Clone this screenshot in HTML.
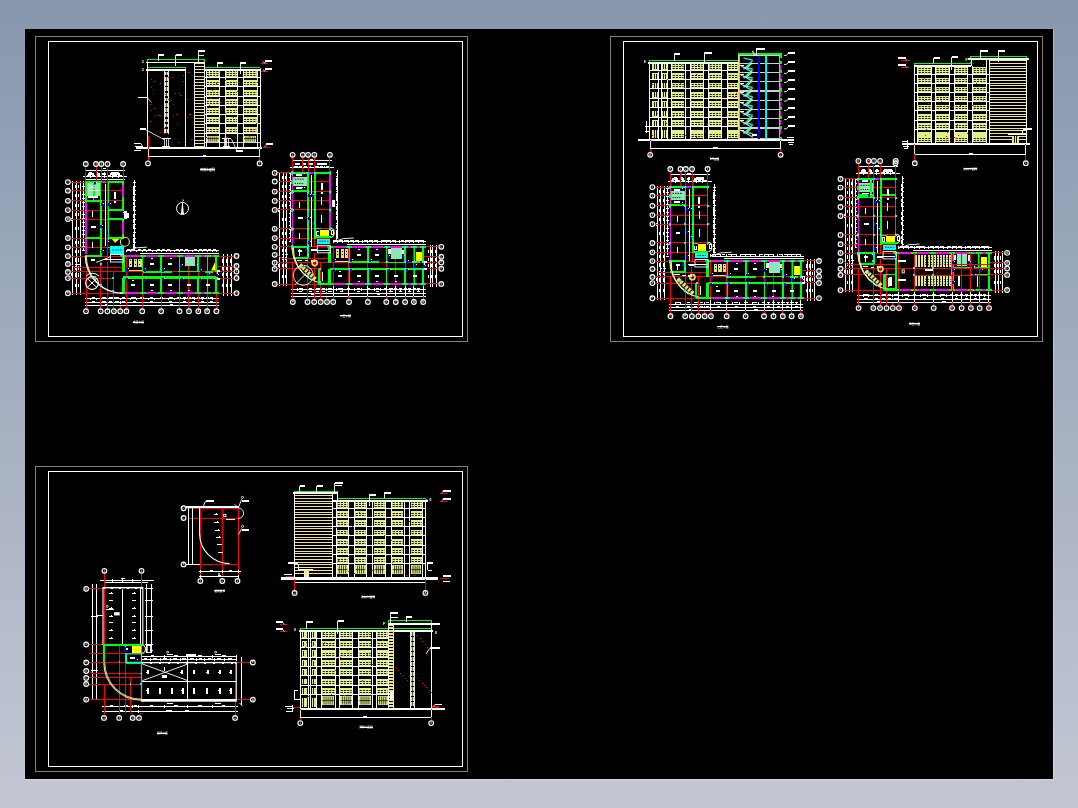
<!DOCTYPE html>
<html><head><meta charset="utf-8"><title>CAD</title>
<style>
html,body{margin:0;padding:0;}
body{width:1078px;height:808px;overflow:hidden;background:linear-gradient(to bottom,#8797ae 0%,#c3c7d3 100%);font-family:"Liberation Sans","Noto Sans CJK SC",sans-serif;}
svg{position:absolute;left:0;top:0;display:block}
svg{will-change:transform}
</style></head><body>
<svg width="1078" height="808" viewBox="0 0 1078 808">
<rect x="25" y="29" width="1028" height="750" fill="#000" shape-rendering="crispEdges"/>
<path d="M1053 29h1v751h-1029v-1h1028z" fill="#fff" opacity=".3" shape-rendering="crispEdges"/>
<g fill="none" stroke-width="1" shape-rendering="crispEdges">
<rect x="35.5" y="36.5" width="432" height="305" stroke="#808080"/>
<rect x="48.5" y="41.5" width="414" height="295" stroke="#fff"/>
<rect x="610.5" y="36.5" width="432" height="305" stroke="#808080"/>
<rect x="623.5" y="41.5" width="414" height="295" stroke="#fff"/>
<rect x="35.5" y="466.5" width="432" height="305" stroke="#808080"/>
<rect x="48.5" y="471.5" width="414" height="295" stroke="#fff"/>
</g>
<g id="elev1">
<path fill="#00ff00" d="M147 59h58v1h-58zM147 60h1v2h-1zM204 60h1v2h-1z"/>
<path fill="#fff" d="M146 62h59v1h-59z"/>
<path fill="#00ff00" d="M148 67h38v1h-38zM185 68h1v1h-1z"/>
<path fill="#fff" d="M146 69h40v2h-40z"/>
<path fill="#00ff00" d="M204 67h56v1h-56zM260 68h1v1h-1z"/>
<path fill="#fff" d="M204 69h57v2h-57zM147 62h1v86h-1zM260 69h1v79h-1z"/>
<path fill="#fff" opacity="0.9" d="M185 69h1v79h-1zM164 71h1v63h-1zM168 71h1v63h-1z"/>
<path fill="#e0f086" d="M165 72h3v3h-3z"/>
<path fill="#000" opacity="0.6" d="M166 72h1v3h-1z"/>
<path fill="#e0f086" d="M165 77h3v4h-3z"/>
<path fill="#000" opacity="0.6" d="M166 77h1v4h-1z"/>
<path fill="#e0f086" d="M165 82h3v4h-3z"/>
<path fill="#000" opacity="0.6" d="M166 82h1v4h-1z"/>
<path fill="#e0f086" d="M165 87h3v4h-3z"/>
<path fill="#000" opacity="0.6" d="M166 87h1v4h-1z"/>
<path fill="#e0f086" d="M165 93h3v3h-3z"/>
<path fill="#000" opacity="0.6" d="M166 93h1v3h-1z"/>
<path fill="#e0f086" d="M165 98h3v3h-3z"/>
<path fill="#000" opacity="0.6" d="M166 98h1v3h-1z"/>
<path fill="#e0f086" d="M165 103h3v4h-3z"/>
<path fill="#000" opacity="0.6" d="M166 103h1v4h-1z"/>
<path fill="#e0f086" d="M165 108h3v4h-3z"/>
<path fill="#000" opacity="0.6" d="M166 108h1v4h-1z"/>
<path fill="#e0f086" d="M165 113h3v4h-3z"/>
<path fill="#000" opacity="0.6" d="M166 113h1v4h-1z"/>
<path fill="#e0f086" d="M165 119h3v3h-3z"/>
<path fill="#000" opacity="0.6" d="M166 119h1v3h-1z"/>
<path fill="#e0f086" d="M165 124h3v3h-3z"/>
<path fill="#000" opacity="0.6" d="M166 124h1v3h-1z"/>
<path fill="#e0f086" d="M165 129h3v4h-3z"/>
<path fill="#000" opacity="0.6" d="M166 129h1v4h-1z"/>
<path fill="#f0e878" d="M195 63h9v1h-9zM195 66h9v1h-9zM195 69h9v1h-9zM195 72h9v1h-9zM195 76h9v1h-9zM195 79h9v1h-9zM195 82h9v1h-9zM195 85h9v1h-9zM195 88h9v1h-9zM195 91h9v1h-9zM195 94h9v1h-9zM195 97h9v1h-9zM195 100h9v1h-9zM195 103h9v1h-9zM195 106h9v1h-9zM195 109h9v1h-9zM195 112h9v1h-9zM195 115h9v1h-9zM195 118h9v1h-9zM195 121h9v1h-9zM195 124h9v1h-9zM195 127h9v1h-9zM195 130h9v1h-9zM195 133h9v1h-9zM195 136h9v1h-9zM195 140h9v1h-9zM195 143h9v1h-9zM195 146h9v1h-9z"/>
<path fill="#fff" opacity="0.9" d="M194 63h1v84h-1zM204 63h1v84h-1z"/>
<path fill="#e0f086" d="M206 71h13v6h-13z"/>
<line x1="206.7" y1="75.5" x2="218.7" y2="75.5" stroke="#000" stroke-width="0.9" stroke-dasharray="2.1 1.1"/>
<line x1="206.7" y1="73.5" x2="218.7" y2="73.5" stroke="#000" stroke-width="0.9" stroke-dasharray="2.1 1.1"/>
<line x1="206.7" y1="71.5" x2="218.7" y2="71.5" stroke="#000" stroke-width="0.9" stroke-dasharray="2.1 1.1"/>
<path fill="#e0f086" d="M226 71h12v6h-12z"/>
<line x1="226.7" y1="75.5" x2="237.7" y2="75.5" stroke="#000" stroke-width="0.9" stroke-dasharray="2.1 1.1"/>
<line x1="226.7" y1="73.5" x2="237.7" y2="73.5" stroke="#000" stroke-width="0.9" stroke-dasharray="2.1 1.1"/>
<line x1="226.7" y1="71.5" x2="237.7" y2="71.5" stroke="#000" stroke-width="0.9" stroke-dasharray="2.1 1.1"/>
<path fill="#e0f086" d="M243 71h14v6h-14z"/>
<line x1="243.7" y1="75.5" x2="256.7" y2="75.5" stroke="#000" stroke-width="0.9" stroke-dasharray="2.1 1.1"/>
<line x1="243.7" y1="73.5" x2="256.7" y2="73.5" stroke="#000" stroke-width="0.9" stroke-dasharray="2.1 1.1"/>
<line x1="243.7" y1="71.5" x2="256.7" y2="71.5" stroke="#000" stroke-width="0.9" stroke-dasharray="2.1 1.1"/>
<path fill="#e0f086" d="M206 80h13v6h-13z"/>
<line x1="206.7" y1="84.5" x2="218.7" y2="84.5" stroke="#000" stroke-width="0.9" stroke-dasharray="2.1 1.1"/>
<line x1="206.7" y1="82.5" x2="218.7" y2="82.5" stroke="#000" stroke-width="0.9" stroke-dasharray="2.1 1.1"/>
<path fill="#e0f086" d="M226 80h12v6h-12z"/>
<line x1="226.7" y1="84.5" x2="237.7" y2="84.5" stroke="#000" stroke-width="0.9" stroke-dasharray="2.1 1.1"/>
<line x1="226.7" y1="82.5" x2="237.7" y2="82.5" stroke="#000" stroke-width="0.9" stroke-dasharray="2.1 1.1"/>
<path fill="#e0f086" d="M243 80h14v6h-14z"/>
<line x1="243.7" y1="84.5" x2="256.7" y2="84.5" stroke="#000" stroke-width="0.9" stroke-dasharray="2.1 1.1"/>
<line x1="243.7" y1="82.5" x2="256.7" y2="82.5" stroke="#000" stroke-width="0.9" stroke-dasharray="2.1 1.1"/>
<path fill="#e0f086" d="M206 90h13v6h-13z"/>
<line x1="206.7" y1="94.5" x2="218.7" y2="94.5" stroke="#000" stroke-width="0.9" stroke-dasharray="2.1 1.1"/>
<line x1="206.7" y1="92.5" x2="218.7" y2="92.5" stroke="#000" stroke-width="0.9" stroke-dasharray="2.1 1.1"/>
<path fill="#e0f086" d="M226 90h12v6h-12z"/>
<line x1="226.7" y1="94.5" x2="237.7" y2="94.5" stroke="#000" stroke-width="0.9" stroke-dasharray="2.1 1.1"/>
<line x1="226.7" y1="92.5" x2="237.7" y2="92.5" stroke="#000" stroke-width="0.9" stroke-dasharray="2.1 1.1"/>
<path fill="#e0f086" d="M243 90h14v6h-14z"/>
<line x1="243.7" y1="94.5" x2="256.7" y2="94.5" stroke="#000" stroke-width="0.9" stroke-dasharray="2.1 1.1"/>
<line x1="243.7" y1="92.5" x2="256.7" y2="92.5" stroke="#000" stroke-width="0.9" stroke-dasharray="2.1 1.1"/>
<path fill="#e0f086" d="M206 99h13v6h-13z"/>
<line x1="206.7" y1="103.5" x2="218.7" y2="103.5" stroke="#000" stroke-width="0.9" stroke-dasharray="2.1 1.1"/>
<line x1="206.7" y1="101.5" x2="218.7" y2="101.5" stroke="#000" stroke-width="0.9" stroke-dasharray="2.1 1.1"/>
<path fill="#e0f086" d="M226 99h12v6h-12z"/>
<line x1="226.7" y1="103.5" x2="237.7" y2="103.5" stroke="#000" stroke-width="0.9" stroke-dasharray="2.1 1.1"/>
<line x1="226.7" y1="101.5" x2="237.7" y2="101.5" stroke="#000" stroke-width="0.9" stroke-dasharray="2.1 1.1"/>
<path fill="#e0f086" d="M243 99h14v6h-14z"/>
<line x1="243.7" y1="103.5" x2="256.7" y2="103.5" stroke="#000" stroke-width="0.9" stroke-dasharray="2.1 1.1"/>
<line x1="243.7" y1="101.5" x2="256.7" y2="101.5" stroke="#000" stroke-width="0.9" stroke-dasharray="2.1 1.1"/>
<path fill="#e0f086" d="M206 108h13v6h-13z"/>
<line x1="206.7" y1="112.5" x2="218.7" y2="112.5" stroke="#000" stroke-width="0.9" stroke-dasharray="2.1 1.1"/>
<line x1="206.7" y1="110.5" x2="218.7" y2="110.5" stroke="#000" stroke-width="0.9" stroke-dasharray="2.1 1.1"/>
<path fill="#e0f086" d="M226 108h12v6h-12z"/>
<line x1="226.7" y1="112.5" x2="237.7" y2="112.5" stroke="#000" stroke-width="0.9" stroke-dasharray="2.1 1.1"/>
<line x1="226.7" y1="110.5" x2="237.7" y2="110.5" stroke="#000" stroke-width="0.9" stroke-dasharray="2.1 1.1"/>
<path fill="#e0f086" d="M243 108h14v6h-14z"/>
<line x1="243.7" y1="112.5" x2="256.7" y2="112.5" stroke="#000" stroke-width="0.9" stroke-dasharray="2.1 1.1"/>
<line x1="243.7" y1="110.5" x2="256.7" y2="110.5" stroke="#000" stroke-width="0.9" stroke-dasharray="2.1 1.1"/>
<path fill="#e0f086" d="M206 117h13v6h-13z"/>
<line x1="206.7" y1="121.5" x2="218.7" y2="121.5" stroke="#000" stroke-width="0.9" stroke-dasharray="2.1 1.1"/>
<line x1="206.7" y1="119.5" x2="218.7" y2="119.5" stroke="#000" stroke-width="0.9" stroke-dasharray="2.1 1.1"/>
<path fill="#e0f086" d="M226 117h12v6h-12z"/>
<line x1="226.7" y1="121.5" x2="237.7" y2="121.5" stroke="#000" stroke-width="0.9" stroke-dasharray="2.1 1.1"/>
<line x1="226.7" y1="119.5" x2="237.7" y2="119.5" stroke="#000" stroke-width="0.9" stroke-dasharray="2.1 1.1"/>
<path fill="#e0f086" d="M243 117h14v6h-14z"/>
<line x1="243.7" y1="121.5" x2="256.7" y2="121.5" stroke="#000" stroke-width="0.9" stroke-dasharray="2.1 1.1"/>
<line x1="243.7" y1="119.5" x2="256.7" y2="119.5" stroke="#000" stroke-width="0.9" stroke-dasharray="2.1 1.1"/>
<path fill="#e0f086" d="M206 127h13v6h-13z"/>
<line x1="206.7" y1="131.5" x2="218.7" y2="131.5" stroke="#000" stroke-width="0.9" stroke-dasharray="2.1 1.1"/>
<line x1="206.7" y1="129.5" x2="218.7" y2="129.5" stroke="#000" stroke-width="0.9" stroke-dasharray="2.1 1.1"/>
<path fill="#e0f086" d="M226 127h12v6h-12z"/>
<line x1="226.7" y1="131.5" x2="237.7" y2="131.5" stroke="#000" stroke-width="0.9" stroke-dasharray="2.1 1.1"/>
<line x1="226.7" y1="129.5" x2="237.7" y2="129.5" stroke="#000" stroke-width="0.9" stroke-dasharray="2.1 1.1"/>
<path fill="#e0f086" d="M243 127h14v6h-14z"/>
<line x1="243.7" y1="131.5" x2="256.7" y2="131.5" stroke="#000" stroke-width="0.9" stroke-dasharray="2.1 1.1"/>
<line x1="243.7" y1="129.5" x2="256.7" y2="129.5" stroke="#000" stroke-width="0.9" stroke-dasharray="2.1 1.1"/>
<path fill="#e0f086" d="M207 136h12v6h-12z"/>
<line x1="208.82" y1="136.5" x2="208.82" y2="141.5" stroke="#000" stroke-width="0.7"/>
<line x1="210.83" y1="136.5" x2="210.83" y2="141.5" stroke="#000" stroke-width="0.7"/>
<line x1="212.85" y1="136.5" x2="212.85" y2="141.5" stroke="#000" stroke-width="0.7"/>
<line x1="214.87" y1="136.5" x2="214.87" y2="141.5" stroke="#000" stroke-width="0.7"/>
<line x1="216.88" y1="136.5" x2="216.88" y2="141.5" stroke="#000" stroke-width="0.7"/>
<path fill="#000" opacity="0.7" d="M207 138h12v1h-12z"/>
<path fill="#e0f086" d="M244 136h12v6h-12z"/>
<line x1="245.98" y1="136.5" x2="245.98" y2="141.5" stroke="#000" stroke-width="0.7"/>
<line x1="248.07" y1="136.5" x2="248.07" y2="141.5" stroke="#000" stroke-width="0.7"/>
<line x1="250.15" y1="136.5" x2="250.15" y2="141.5" stroke="#000" stroke-width="0.7"/>
<line x1="252.23" y1="136.5" x2="252.23" y2="141.5" stroke="#000" stroke-width="0.7"/>
<line x1="254.32" y1="136.5" x2="254.32" y2="141.5" stroke="#000" stroke-width="0.7"/>
<path fill="#000" opacity="0.7" d="M244 138h12v1h-12z"/>
<path fill="#fff" d="M204 77h56v1h-56zM204 86h56v1h-56zM204 96h56v1h-56zM204 105h56v1h-56zM204 114h56v1h-56zM204 123h56v1h-56zM204 133h56v1h-56z"/>
<path fill="#fff" opacity="0.8" d="M204 142h56v1h-56z"/>
<path fill="#fff" opacity="0.9" d="M206 70h1v78h-1zM219 70h1v78h-1zM225 70h1v78h-1zM237 70h1v78h-1zM243 70h1v78h-1zM257 70h1v78h-1z"/>
<path fill="#fff" d="M162 138h9v1h-9z"/>
<path fill="#fff" opacity="0.8" d="M164 139h1v8h-1zM168 139h1v8h-1zM166 139h1v8h-1z"/>
<path fill="#fff" d="M162 146h8v1h-8zM222 138h9v1h-9z"/>
<path fill="#fff" opacity="0.8" d="M224 139h1v8h-1zM228 139h1v8h-1zM226 139h1v8h-1z"/>
<path fill="#fff" d="M223 146h7v1h-7z"/>
<path d="M231.5 139 L236.5 150" fill="none" stroke="#fff" stroke-width="0.8"/>
<path fill="#fff" d="M236 150h7v2h-7zM138 97h9v1h-9z"/>
<path d="M147 97.3 L151.5 102.5" fill="none" stroke="#fff" stroke-width="0.8"/>
<path fill="#fff" d="M140 128h6v2h-6z"/>
<path d="M146 130 L164 139.5" fill="none" stroke="#fff" stroke-width="0.8"/>
<path fill="#fff" d="M136 147h126v2h-126zM134 143h7v1h-7zM135 146h8v1h-8zM134 150h7v1h-7z"/>
<path d="M141 143.7 L143.5 148" fill="none" stroke="#fff" stroke-width="0.8"/>
<path fill="#ff0000" d="M148 148h1v13h-1zM259 148h1v13h-1z"/>
<path fill="#fff" d="M148 156h112v1h-112z"/>
<path fill="#fff" opacity="0.8" d="M148 149h1v7h-1zM259 149h1v7h-1z"/>
<path fill="#fff" d="M203 155h3v1h-3z"/>
<circle cx="148" cy="163.4" r="2.35" fill="none" stroke="#fff" stroke-width="1.15"/>
<text x="148" y="164.35" font-size="2.7" fill="#fff" text-anchor="middle" font-weight="normal" font-family='"Liberation Sans","Noto Sans CJK SC",sans-serif'>1</text>
<circle cx="259.6" cy="163.4" r="2.35" fill="none" stroke="#fff" stroke-width="1.15"/>
<text x="259.6" y="164.35" font-size="2.7" fill="#fff" text-anchor="middle" font-weight="normal" font-family='"Liberation Sans","Noto Sans CJK SC",sans-serif'>9</text>
<text x="207.5" y="170.8" font-size="2.9" fill="#fff" text-anchor="middle" font-weight="bold" font-family='"Liberation Sans","Noto Sans CJK SC",sans-serif'>西侧立面图</text>
<path fill="#fff" d="M200 169h13v1h-13z"/>
<polygon points="213.4,169 215.4,169 214.4,170.6" fill="#fff"/>
<path fill="#fff" opacity="0.9" d="M158 54h1v7h-1z"/>
<path fill="#fff" d="M158 54h6v2h-6z"/>
<path fill="#fff" opacity="0.9" d="M175 55h1v11h-1z"/>
<path fill="#fff" d="M176 54h6v2h-6z"/>
<path fill="#fff" opacity="0.9" d="M198 50h1v13h-1z"/>
<path fill="#fff" d="M198 50h7v2h-7z"/>
<path fill="#fff" opacity="0.9" d="M198 55h6v1h-6zM217 62h1v6h-1z"/>
<path fill="#fff" d="M218 62h5v2h-5z"/>
<path fill="#fff" opacity="0.9" d="M240 62h1v12h-1z"/>
<path fill="#fff" d="M240 62h6v2h-6z"/>
<text x="142.8" y="62.6" font-size="3.2" fill="#fff" text-anchor="middle" font-weight="bold" font-family='"Liberation Sans","Noto Sans CJK SC",sans-serif'>5</text>
<text x="142.8" y="71.3" font-size="3.2" fill="#fff" text-anchor="middle" font-weight="bold" font-family='"Liberation Sans","Noto Sans CJK SC",sans-serif'>5</text>
<path fill="#ff0000" d="M261 63h7v1h-7z"/>
<path d="M263 61.4 L264.5 63.3 L266 61.4" fill="none" stroke="#fff" stroke-width="0.8"/>
<path fill="#fff" d="M265 60h7v2h-7z"/>
<path fill="#ff0000" d="M261 71h7v1h-7z"/>
<path d="M263 69.4 L264.5 71.3 L266 69.4" fill="none" stroke="#fff" stroke-width="0.8"/>
<path fill="#fff" d="M265 68h7v2h-7z"/>
<path fill="#ff0000" d="M263 147h7v1h-7z"/>
<path d="M264.5 147 L267 144.5" fill="none" stroke="#fff" stroke-width="0.8"/>
<path fill="#fff" d="M266 143h7v2h-7z"/>
<path fill="#f00" d="M160 83h1v1h-1zM172 77h1v1h-1zM168 99h1v1h-1zM151 110h1v1h-1zM150 104h1v1h-1zM151 79h1v1h-1zM164 133h1v1h-1zM153 89h1v1h-1zM171 142h1v1h-1zM169 101h1v1h-1zM183 75h1v1h-1zM179 93h1v1h-1zM154 81h1v1h-1zM160 132h1v1h-1zM155 115h1v1h-1zM171 100h1v1h-1zM168 77h1v1h-1zM151 87h1v1h-1zM173 104h1v1h-1zM160 115h1v1h-1zM165 94h1v1h-1zM177 124h1v1h-1zM158 115h1v1h-1zM167 137h1v1h-1zM175 93h1v1h-1zM183 81h1v1h-1zM164 128h1v1h-1zM154 108h1v1h-1zM150 121h1v1h-1zM176 114h1v1h-1zM180 95h1v1h-1zM173 116h1v1h-1zM169 106h1v1h-1zM178 142h1v1h-1zM190 114h1v1h-1zM187 117h1v1h-1zM191 139h1v1h-1zM193 85h1v1h-1zM189 114h1v1h-1zM187 99h1v1h-1zM188 72h1v1h-1zM208 129h1v1h-1zM212 90h1v1h-1zM226 136h1v1h-1zM209 105h1v1h-1zM235 137h1v1h-1zM249 136h1v1h-1zM220 102h1v1h-1zM224 137h1v1h-1zM257 82h1v1h-1zM215 88h1v1h-1zM218 107h1v1h-1zM237 91h1v1h-1zM205 102h1v1h-1zM225 113h1v1h-1zM256 123h1v1h-1zM233 117h1v1h-1zM242 75h1v1h-1zM254 129h1v1h-1zM252 131h1v1h-1zM226 101h1v1h-1zM211 119h1v1h-1zM208 76h1v1h-1zM216 83h1v1h-1zM223 75h1v1h-1zM205 82h1v1h-1zM210 98h1v1h-1zM206 137h1v1h-1zM238 82h1v1h-1zM219 97h1v1h-1zM225 80h1v1h-1z"/>
<path fill="#ff0000" d="M148 136h1v12h-1z"/>
</g>
<path fill="#fff" d="M85 170h40v1h-40zM85 168h1v3h-1zM123 168h1v3h-1zM103 168h3v1h-3zM88 173h6v2h-6zM89 172h3v1h-3zM96 173h4v2h-4zM96 172h2v1h-2zM102 173h4v2h-4zM104 172h1v1h-1zM110 173h10v2h-10zM111 172h8v1h-8zM83 176h44v1h-44zM85 175h1v3h-1zM90 175h1v3h-1zM96 175h1v3h-1zM101 175h1v3h-1zM104 175h1v3h-1zM107 175h1v3h-1zM112 175h1v3h-1zM118 175h1v3h-1zM123 175h1v3h-1zM87 175h3v1h-3zM92 175h3v1h-3zM97 175h3v1h-3zM108 175h3v1h-3zM113 175h4v1h-4zM119 175h3v1h-3zM85 179h40v1h-40zM72 181h1v114h-1zM72 182h2v1h-2zM72 256h2v1h-2zM72 293h2v1h-2zM71 218h1v3h-1zM71 273h1v3h-1zM76 181h1v114h-1zM75 182h3v1h-3zM75 190h3v1h-3zM75 200h3v1h-3zM75 210h3v1h-3zM75 219h3v1h-3zM75 238h3v1h-3zM75 247h3v1h-3zM75 256h3v1h-3zM75 264h3v1h-3zM75 271h3v1h-3zM75 278h3v1h-3zM75 293h3v1h-3zM75 185h1v3h-1zM75 194h1v3h-1zM75 204h1v3h-1zM75 213h1v3h-1zM75 227h1v3h-1zM75 241h1v3h-1zM75 250h1v3h-1zM75 258h1v4h-1zM75 266h1v4h-1zM75 273h1v4h-1zM75 284h1v3h-1zM80 181h1v114h-1zM78 182h3v1h-3zM78 190h3v1h-3zM78 200h3v1h-3zM78 210h3v1h-3zM78 219h3v1h-3zM78 238h3v1h-3zM78 247h3v1h-3zM78 256h3v1h-3zM78 264h3v1h-3zM78 271h3v1h-3zM78 278h3v1h-3zM78 293h3v1h-3zM78 185h1v3h-1zM78 194h1v3h-1zM78 204h1v3h-1zM78 213h1v3h-1zM78 227h1v3h-1zM78 241h1v3h-1zM78 250h1v3h-1zM78 258h1v4h-1zM78 266h1v4h-1zM78 273h1v4h-1zM78 284h1v3h-1zM83 181h1v69h-1zM82 182h3v1h-3zM82 186h3v1h-3zM82 190h3v1h-3zM82 194h3v1h-3zM82 198h3v1h-3zM82 202h3v1h-3zM82 206h3v1h-3zM82 210h3v1h-3zM82 214h3v1h-3zM82 218h3v1h-3zM82 222h3v1h-3zM82 226h3v1h-3zM82 230h3v1h-3zM82 234h3v1h-3zM82 238h3v1h-3zM82 242h3v1h-3zM82 246h3v1h-3zM82 250h3v1h-3zM134 180h1v68h-1zM133 182h3v1h-3zM133 186h3v1h-3zM133 190h3v1h-3zM133 194h3v1h-3zM133 200h3v1h-3zM133 206h3v1h-3zM133 210h3v1h-3zM133 214h3v1h-3zM133 219h3v1h-3zM133 224h3v1h-3zM133 228h3v1h-3zM133 232h3v1h-3zM133 238h3v1h-3zM133 242h3v1h-3zM133 247h3v1h-3zM133 187h1v3h-1zM133 191h1v3h-1zM133 196h1v4h-1zM133 202h1v3h-1zM133 206h1v4h-1zM133 215h1v3h-1zM133 220h1v3h-1zM133 225h1v3h-1zM133 234h1v3h-1zM133 239h1v3h-1zM133 244h1v3h-1z"/>
<path d="M134.7 248 L131.2 251 L127 250" fill="none" stroke="#fff" stroke-width="0.9"/>
<path fill="#fff" d="M127 250h92v1h-92zM126 250h1v2h-1zM130 250h1v2h-1zM136 250h1v2h-1zM142 250h1v2h-1zM146 250h1v2h-1zM152 250h1v2h-1zM156 250h1v2h-1zM161 250h1v2h-1zM166 250h1v2h-1zM170 250h1v2h-1zM174 250h1v2h-1zM179 250h1v2h-1zM184 250h1v2h-1zM188 250h1v2h-1zM192 250h1v2h-1zM198 250h1v2h-1zM202 250h1v2h-1zM207 250h1v2h-1zM212 250h1v2h-1zM216 250h1v2h-1zM127 249h3v1h-3zM132 249h3v1h-3zM138 249h3v1h-3zM143 249h3v1h-3zM148 249h3v1h-3zM157 249h3v1h-3zM162 249h3v1h-3zM167 249h3v1h-3zM176 249h3v1h-3zM180 249h3v1h-3zM185 249h3v1h-3zM194 249h3v1h-3zM199 249h3v1h-3zM203 249h4v1h-4zM208 249h3v1h-3zM213 249h3v1h-3zM140 253h79v1h-79z"/>
<path d="M127 251 Q136 246.5 147 247.2" fill="none" stroke="#fff" stroke-width="0.9"/>
<path fill="#fff" d="M223 254h1v42h-1zM222 256h3v1h-3zM222 266h3v1h-3zM222 271h3v1h-3zM222 278h3v1h-3zM222 293h3v1h-3zM222 259h1v4h-1zM222 267h1v3h-1zM222 273h1v3h-1zM222 284h1v3h-1zM227 254h1v42h-1zM226 256h2v1h-2zM226 266h2v1h-2zM226 271h2v1h-2zM226 278h2v1h-2zM226 293h2v1h-2zM226 259h1v4h-1zM226 267h1v3h-1zM226 273h1v3h-1zM226 284h1v3h-1zM231 254h1v42h-1zM230 256h3v1h-3zM230 266h3v1h-3zM230 271h3v1h-3zM230 278h3v1h-3zM230 293h3v1h-3zM230 259h1v4h-1zM230 267h1v3h-1zM230 273h1v3h-1zM230 284h1v3h-1zM85 298h134v1h-134zM86 298h1v2h-1zM100 298h1v2h-1zM107 298h1v2h-1zM113 298h1v2h-1zM120 298h1v2h-1zM126 298h1v2h-1zM142 298h1v2h-1zM161 298h1v2h-1zM179 298h1v2h-1zM188 298h1v2h-1zM198 298h1v2h-1zM207 298h1v2h-1zM216 298h1v2h-1zM90 298h1v2h-1zM96 298h1v2h-1zM130 298h1v2h-1zM136 298h1v2h-1zM148 298h1v2h-1zM154 298h1v2h-1zM168 298h1v2h-1zM174 298h1v2h-1zM184 298h1v2h-1zM194 298h1v2h-1zM202 298h1v2h-1zM212 298h1v2h-1zM92 297h3v1h-3zM102 297h4v1h-4zM109 297h3v1h-3zM115 297h4v1h-4zM122 297h3v1h-3zM133 297h3v1h-3zM150 297h3v1h-3zM169 297h3v1h-3zM183 297h3v1h-3zM192 297h3v1h-3zM201 297h3v1h-3zM210 297h3v1h-3zM92 297h3v1h-3zM111 297h4v1h-4zM131 297h4v1h-4zM140 297h4v1h-4zM150 297h3v1h-3zM160 297h3v1h-3zM169 297h4v1h-4zM177 297h4v1h-4zM187 297h4v1h-4zM197 297h3v1h-3zM206 297h3v1h-3zM85 302h134v1h-134zM86 301h1v3h-1zM100 301h1v3h-1zM107 301h1v3h-1zM113 301h1v3h-1zM120 301h1v3h-1zM126 301h1v3h-1zM142 301h1v3h-1zM161 301h1v3h-1zM179 301h1v3h-1zM188 301h1v3h-1zM198 301h1v3h-1zM207 301h1v3h-1zM216 301h1v3h-1zM92 301h3v1h-3zM102 301h4v1h-4zM109 301h3v1h-3zM115 301h4v1h-4zM122 301h3v1h-3zM133 301h3v1h-3zM150 301h3v1h-3zM169 301h3v1h-3zM183 301h3v1h-3zM192 301h3v1h-3zM201 301h3v1h-3zM210 301h3v1h-3zM85 305h134v1h-134zM86 304h1v3h-1zM126 304h1v3h-1zM216 304h1v3h-1zM105 304h3v1h-3zM170 304h3v1h-3z"/>
<path fill="#ff0000" d="M85 166h1v17h-1zM96 166h1v17h-1zM101 166h1v17h-1zM107 166h1v90h-1zM123 166h1v17h-1zM71 182h53v1h-53zM71 190h53v1h-53zM71 200h53v1h-53zM71 210h53v1h-53zM71 219h53v1h-53zM71 238h53v1h-53zM71 247h53v1h-53zM71 256h53v1h-53z"/>
<line x1="70.6" y1="264" x2="74.5" y2="267.2" stroke="#ff0000" stroke-width="1"/>
<path fill="#ff0000" d="M74 267h48v1h-48zM71 271h146v1h-146zM71 278h41v1h-41zM71 293h53v1h-53zM86 272h1v37h-1zM100 262h1v47h-1zM107 262h1v47h-1zM113 272h1v37h-1zM120 306h1v3h-1zM126 256h1v53h-1zM142 256h1v53h-1zM161 256h1v53h-1zM179 256h1v53h-1zM188 256h1v53h-1zM198 256h1v53h-1zM207 256h1v53h-1zM216 256h1v53h-1zM217 256h17v1h-17zM217 266h17v1h-17zM217 271h17v1h-17zM217 278h17v1h-17zM217 293h17v1h-17z"/>
<circle cx="85.8" cy="164" r="2.35" fill="none" stroke="#fff" stroke-width="1.15"/>
<text x="85.8" y="164.95" font-size="2.7" fill="#fff" text-anchor="middle" font-weight="normal" font-family='"Liberation Sans","Noto Sans CJK SC",sans-serif'>2</text>
<circle cx="96" cy="164" r="2.35" fill="none" stroke="#fff" stroke-width="1.15"/>
<text x="96" y="164.95" font-size="2.7" fill="#fff" text-anchor="middle" font-weight="normal" font-family='"Liberation Sans","Noto Sans CJK SC",sans-serif'>3</text>
<circle cx="101.3" cy="164" r="2.35" fill="none" stroke="#fff" stroke-width="1.15"/>
<text x="101.3" y="164.95" font-size="2.7" fill="#fff" text-anchor="middle" font-weight="normal" font-family='"Liberation Sans","Noto Sans CJK SC",sans-serif'>4</text>
<circle cx="107.5" cy="164" r="2.35" fill="none" stroke="#fff" stroke-width="1.15"/>
<text x="107.5" y="164.95" font-size="2.7" fill="#fff" text-anchor="middle" font-weight="normal" font-family='"Liberation Sans","Noto Sans CJK SC",sans-serif'>5</text>
<circle cx="123.1" cy="164" r="2.35" fill="none" stroke="#fff" stroke-width="1.15"/>
<text x="123.1" y="164.95" font-size="2.7" fill="#fff" text-anchor="middle" font-weight="normal" font-family='"Liberation Sans","Noto Sans CJK SC",sans-serif'>6</text>
<circle cx="67.9" cy="182.1" r="2.35" fill="none" stroke="#fff" stroke-width="1.15"/>
<text x="67.9" y="183.05" font-size="2.7" fill="#fff" text-anchor="middle" font-weight="normal" font-family='"Liberation Sans","Noto Sans CJK SC",sans-serif'>7</text>
<circle cx="67.9" cy="190.7" r="2.35" fill="none" stroke="#fff" stroke-width="1.15"/>
<text x="67.9" y="191.65" font-size="2.7" fill="#fff" text-anchor="middle" font-weight="normal" font-family='"Liberation Sans","Noto Sans CJK SC",sans-serif'>8</text>
<circle cx="67.9" cy="200.8" r="2.35" fill="none" stroke="#fff" stroke-width="1.15"/>
<text x="67.9" y="201.75" font-size="2.7" fill="#fff" text-anchor="middle" font-weight="normal" font-family='"Liberation Sans","Noto Sans CJK SC",sans-serif'>9</text>
<circle cx="67.9" cy="210.1" r="2.35" fill="none" stroke="#fff" stroke-width="1.15"/>
<text x="67.9" y="211.05" font-size="2.7" fill="#fff" text-anchor="middle" font-weight="normal" font-family='"Liberation Sans","Noto Sans CJK SC",sans-serif'>0</text>
<circle cx="67.9" cy="219.1" r="2.35" fill="none" stroke="#fff" stroke-width="1.15"/>
<text x="67.9" y="220.05" font-size="2.7" fill="#fff" text-anchor="middle" font-weight="normal" font-family='"Liberation Sans","Noto Sans CJK SC",sans-serif'>A</text>
<circle cx="67.9" cy="238" r="2.35" fill="none" stroke="#fff" stroke-width="1.15"/>
<text x="67.9" y="238.95" font-size="2.7" fill="#fff" text-anchor="middle" font-weight="normal" font-family='"Liberation Sans","Noto Sans CJK SC",sans-serif'>B</text>
<circle cx="67.9" cy="247.3" r="2.35" fill="none" stroke="#fff" stroke-width="1.15"/>
<text x="67.9" y="248.25" font-size="2.7" fill="#fff" text-anchor="middle" font-weight="normal" font-family='"Liberation Sans","Noto Sans CJK SC",sans-serif'>C</text>
<circle cx="67.9" cy="256.1" r="2.35" fill="none" stroke="#fff" stroke-width="1.15"/>
<text x="67.9" y="257.05" font-size="2.7" fill="#fff" text-anchor="middle" font-weight="normal" font-family='"Liberation Sans","Noto Sans CJK SC",sans-serif'>D</text>
<circle cx="67.9" cy="264" r="2.35" fill="none" stroke="#fff" stroke-width="1.15"/>
<text x="67.9" y="264.95" font-size="2.7" fill="#fff" text-anchor="middle" font-weight="normal" font-family='"Liberation Sans","Noto Sans CJK SC",sans-serif'>E</text>
<circle cx="67.9" cy="271.9" r="2.35" fill="none" stroke="#fff" stroke-width="1.15"/>
<text x="67.9" y="272.85" font-size="2.7" fill="#fff" text-anchor="middle" font-weight="normal" font-family='"Liberation Sans","Noto Sans CJK SC",sans-serif'>F</text>
<circle cx="67.9" cy="278.1" r="2.35" fill="none" stroke="#fff" stroke-width="1.15"/>
<text x="67.9" y="279.05" font-size="2.7" fill="#fff" text-anchor="middle" font-weight="normal" font-family='"Liberation Sans","Noto Sans CJK SC",sans-serif'>G</text>
<circle cx="67.9" cy="293.2" r="2.35" fill="none" stroke="#fff" stroke-width="1.15"/>
<text x="67.9" y="294.15" font-size="2.7" fill="#fff" text-anchor="middle" font-weight="normal" font-family='"Liberation Sans","Noto Sans CJK SC",sans-serif'>H</text>
<circle cx="86" cy="311.2" r="2.35" fill="none" stroke="#fff" stroke-width="1.15"/>
<text x="86" y="312.15" font-size="2.7" fill="#fff" text-anchor="middle" font-weight="normal" font-family='"Liberation Sans","Noto Sans CJK SC",sans-serif'>1</text>
<circle cx="100.7" cy="311.2" r="2.35" fill="none" stroke="#fff" stroke-width="1.15"/>
<text x="100.7" y="312.15" font-size="2.7" fill="#fff" text-anchor="middle" font-weight="normal" font-family='"Liberation Sans","Noto Sans CJK SC",sans-serif'>2</text>
<circle cx="107.4" cy="311.2" r="2.35" fill="none" stroke="#fff" stroke-width="1.15"/>
<text x="107.4" y="312.15" font-size="2.7" fill="#fff" text-anchor="middle" font-weight="normal" font-family='"Liberation Sans","Noto Sans CJK SC",sans-serif'>3</text>
<circle cx="113.9" cy="311.2" r="2.35" fill="none" stroke="#fff" stroke-width="1.15"/>
<text x="113.9" y="312.15" font-size="2.7" fill="#fff" text-anchor="middle" font-weight="normal" font-family='"Liberation Sans","Noto Sans CJK SC",sans-serif'>4</text>
<circle cx="120.2" cy="311.2" r="2.35" fill="none" stroke="#fff" stroke-width="1.15"/>
<text x="120.2" y="312.15" font-size="2.7" fill="#fff" text-anchor="middle" font-weight="normal" font-family='"Liberation Sans","Noto Sans CJK SC",sans-serif'>5</text>
<circle cx="126.4" cy="311.2" r="2.35" fill="none" stroke="#fff" stroke-width="1.15"/>
<text x="126.4" y="312.15" font-size="2.7" fill="#fff" text-anchor="middle" font-weight="normal" font-family='"Liberation Sans","Noto Sans CJK SC",sans-serif'>6</text>
<circle cx="142.2" cy="311.2" r="2.35" fill="none" stroke="#fff" stroke-width="1.15"/>
<text x="142.2" y="312.15" font-size="2.7" fill="#fff" text-anchor="middle" font-weight="normal" font-family='"Liberation Sans","Noto Sans CJK SC",sans-serif'>7</text>
<circle cx="161.1" cy="311.2" r="2.35" fill="none" stroke="#fff" stroke-width="1.15"/>
<text x="161.1" y="312.15" font-size="2.7" fill="#fff" text-anchor="middle" font-weight="normal" font-family='"Liberation Sans","Noto Sans CJK SC",sans-serif'>8</text>
<circle cx="179.5" cy="311.2" r="2.35" fill="none" stroke="#fff" stroke-width="1.15"/>
<text x="179.5" y="312.15" font-size="2.7" fill="#fff" text-anchor="middle" font-weight="normal" font-family='"Liberation Sans","Noto Sans CJK SC",sans-serif'>9</text>
<circle cx="189" cy="311.2" r="2.35" fill="none" stroke="#fff" stroke-width="1.15"/>
<text x="189" y="312.15" font-size="2.7" fill="#fff" text-anchor="middle" font-weight="normal" font-family='"Liberation Sans","Noto Sans CJK SC",sans-serif'>0</text>
<circle cx="198.3" cy="311.2" r="2.35" fill="none" stroke="#fff" stroke-width="1.15"/>
<text x="198.3" y="312.15" font-size="2.7" fill="#fff" text-anchor="middle" font-weight="normal" font-family='"Liberation Sans","Noto Sans CJK SC",sans-serif'>A</text>
<circle cx="207.1" cy="311.2" r="2.35" fill="none" stroke="#fff" stroke-width="1.15"/>
<text x="207.1" y="312.15" font-size="2.7" fill="#fff" text-anchor="middle" font-weight="normal" font-family='"Liberation Sans","Noto Sans CJK SC",sans-serif'>B</text>
<circle cx="216.4" cy="311.2" r="2.35" fill="none" stroke="#fff" stroke-width="1.15"/>
<text x="216.4" y="312.15" font-size="2.7" fill="#fff" text-anchor="middle" font-weight="normal" font-family='"Liberation Sans","Noto Sans CJK SC",sans-serif'>C</text>
<circle cx="236.5" cy="256" r="2.35" fill="none" stroke="#fff" stroke-width="1.15"/>
<text x="236.5" y="256.95" font-size="2.7" fill="#fff" text-anchor="middle" font-weight="normal" font-family='"Liberation Sans","Noto Sans CJK SC",sans-serif'>D</text>
<circle cx="236.5" cy="266" r="2.35" fill="none" stroke="#fff" stroke-width="1.15"/>
<text x="236.5" y="266.95" font-size="2.7" fill="#fff" text-anchor="middle" font-weight="normal" font-family='"Liberation Sans","Noto Sans CJK SC",sans-serif'>E</text>
<circle cx="236.5" cy="271.6" r="2.35" fill="none" stroke="#fff" stroke-width="1.15"/>
<text x="236.5" y="272.55" font-size="2.7" fill="#fff" text-anchor="middle" font-weight="normal" font-family='"Liberation Sans","Noto Sans CJK SC",sans-serif'>F</text>
<circle cx="236.5" cy="278" r="2.35" fill="none" stroke="#fff" stroke-width="1.15"/>
<text x="236.5" y="278.95" font-size="2.7" fill="#fff" text-anchor="middle" font-weight="normal" font-family='"Liberation Sans","Noto Sans CJK SC",sans-serif'>G</text>
<circle cx="236.5" cy="293.1" r="2.35" fill="none" stroke="#fff" stroke-width="1.15"/>
<text x="236.5" y="294.05" font-size="2.7" fill="#fff" text-anchor="middle" font-weight="normal" font-family='"Liberation Sans","Noto Sans CJK SC",sans-serif'>H</text>
<path fill="#8fe8b4" d="M87 183h14v13h-14z"/>
<path fill="#00ffff" d="M110 246h14v8h-14z"/>
<line x1="112.5" y1="250" x2="121.5" y2="250" stroke="#000" stroke-width="1.2" stroke-dasharray="1.4 1.2"/>
<polygon points="111.5,238.8 119.6,238.8 115.2,242.8" fill="#ffff00"/>
<path fill="#e4e47e" d="M129 259h3v8h-3z"/>
<path fill="#000" d="M130 260h1v1h-1zM130 264h1v1h-1z"/>
<path fill="#e4e47e" d="M134 259h3v8h-3z"/>
<path fill="#000" d="M135 260h1v1h-1zM135 264h1v1h-1z"/>
<path fill="#e4e47e" d="M138 259h4v8h-4z"/>
<path fill="#000" d="M139 260h1v1h-1zM139 264h1v1h-1z"/>
<path fill="#f0e080" d="M129 270h13v1h-13z"/>
<path fill="#8fe8b4" d="M185 257h10v9h-10z"/>
<polygon points="215,262 211.2,270.6 215,270.6" fill="#ffff00"/>
<path fill="#00ff00" d="M86 181h15v2h-15z"/>
<path fill="#ff00ff" d="M101 181h5v2h-5z"/>
<path fill="#00ff00" d="M108 181h16v2h-16zM122 182h2v3h-2z"/>
<path fill="#ff00ff" d="M122 185h2v12h-2z"/>
<path fill="#00ff00" d="M122 197h2v13h-2zM122 219h2v3h-2z"/>
<path fill="#ff00ff" d="M122 222h2v12h-2z"/>
<path fill="#00ff00" d="M122 234h2v5h-2zM85 182h2v20h-2z"/>
<path fill="#ff00ff" d="M85 202h2v52h-2z"/>
<path fill="#00ff00" d="M100 183h1v18h-1zM100 200h2v56h-2zM86 200h16v2h-16zM86 255h16v2h-16zM86 237h15v2h-15zM108 183h1v57h-1zM108 209h15v2h-15zM108 218h15v2h-15zM108 237h15v2h-15zM93 183h2v17h-2z"/>
<path fill="#fff" d="M105 184h1v62h-1zM124 211h3v8h-3zM127 213h2v5h-2z"/>
<circle cx="124.9" cy="241.7" r="4.5" fill="none" stroke="#f4e060" stroke-width="1.1"/>
<path fill="#ff00ff" d="M123 255h94v2h-94z"/>
<path fill="#00ff00" d="M120 255h6v2h-6zM140 255h6v2h-6zM158 255h6v2h-6zM177 255h6v2h-6zM195 255h6v2h-6zM205 255h6v2h-6zM213 255h6v2h-6z"/>
<path fill="#ff00ff" d="M123 292h94v2h-94z"/>
<path fill="#00ff00" d="M120 292h6v2h-6zM140 292h6v2h-6zM158 292h6v2h-6zM177 292h6v2h-6zM195 292h6v2h-6zM205 292h6v2h-6zM213 292h6v2h-6zM122 256h3v16h-3zM122 278h3v16h-3zM142 256h1v16h-1zM142 278h1v16h-1zM160 256h2v16h-2zM160 278h2v16h-2zM179 256h1v16h-1zM179 278h1v16h-1zM197 256h2v16h-2zM197 278h2v16h-2zM207 256h1v16h-1zM207 278h1v16h-1zM215 256h2v16h-2zM215 278h2v16h-2zM143 271h29v2h-29zM178 271h22v1h-22zM205 271h8v2h-8zM123 276h94v3h-94z"/>
<path fill="#fff" d="M217 270h3v10h-3z"/>
<path fill="#000" d="M218 272h2v6h-2z"/>
<path d="M85.4 255.6 A37.8 37.8 0 0 0 123.1 293.4" fill="none" stroke="#fff" stroke-width="1.4"/>
<path d="M86.4 255.6 A36.8 36.8 0 0 0 101 286" fill="none" stroke="#f4e060" stroke-width="1.2"/>
<circle cx="92" cy="283" r="6.4" fill="none" stroke="#fff" stroke-width="1.1"/>
<line x1="87.2" y1="278.5" x2="96.8" y2="287.5" stroke="#fff" stroke-width="1"/>
<line x1="87.2" y1="287.5" x2="96.8" y2="278.5" stroke="#fff" stroke-width="1"/>
<path d="M86 276 A9 9 0 0 1 99 276" fill="none" stroke="#fff" stroke-width="1"/>
<line x1="96" y1="262.5" x2="110" y2="257" stroke="#fff" stroke-width="0.9"/>
<path fill="#00ffff" d="M85 200h1v1h-1zM85 210h1v1h-1zM85 219h1v1h-1zM85 238h1v1h-1zM85 247h1v1h-1zM101 200h1v1h-1zM101 210h1v1h-1zM101 219h1v1h-1zM101 238h1v1h-1zM108 200h1v1h-1zM108 210h1v1h-1zM108 219h1v1h-1zM108 238h1v1h-1zM108 247h1v1h-1zM123 200h1v1h-1zM123 210h1v1h-1zM123 219h1v1h-1zM123 238h1v1h-1zM123 247h1v1h-1zM142 256h1v1h-1zM142 293h1v1h-1zM161 256h1v1h-1zM161 293h1v1h-1zM179 256h1v1h-1zM179 293h1v1h-1zM198 256h1v1h-1zM198 293h1v1h-1zM207 256h1v1h-1zM207 293h1v1h-1zM100 263h2v2h-2zM112 277h2v2h-2zM100 284h2v2h-2zM112 290h2v2h-2zM94 276h2v2h-2z"/>
<path fill="#0000ff" d="M94 182h2v3h-2z"/>
<path fill="#fff" d="M96 182h1v1h-1z"/>
<path fill="#0000ff" d="M94 197h2v3h-2z"/>
<path fill="#fff" d="M96 197h1v1h-1z"/>
<path fill="#0000ff" d="M101 203h2v3h-2z"/>
<path fill="#fff" d="M103 203h1v1h-1z"/>
<path fill="#0000ff" d="M108 203h2v3h-2z"/>
<path fill="#fff" d="M110 203h1v1h-1z"/>
<path fill="#0000ff" d="M122 212h2v3h-2z"/>
<path fill="#fff" d="M123 212h1v1h-1z"/>
<path fill="#0000ff" d="M100 225h2v3h-2z"/>
<path fill="#fff" d="M102 225h1v1h-1z"/>
<path fill="#0000ff" d="M106 230h2v4h-2z"/>
<path fill="#fff" d="M108 230h1v1h-1z"/>
<path fill="#0000ff" d="M106 242h2v2h-2z"/>
<path fill="#fff" d="M108 241h1v1h-1z"/>
<path fill="#0000ff" d="M101 250h2v3h-2z"/>
<path fill="#fff" d="M103 250h1v1h-1z"/>
<path fill="#0000ff" d="M120 259h2v3h-2z"/>
<path fill="#fff" d="M122 259h1v1h-1z"/>
<path fill="#0000ff" d="M126 268h2v4h-2z"/>
<path fill="#fff" d="M128 268h1v1h-1z"/>
<path fill="#0000ff" d="M144 268h2v4h-2z"/>
<path fill="#fff" d="M145 268h1v1h-1z"/>
<path fill="#0000ff" d="M162 268h2v4h-2z"/>
<path fill="#fff" d="M164 268h1v1h-1z"/>
<path fill="#0000ff" d="M180 264h2v3h-2z"/>
<path fill="#fff" d="M182 264h1v1h-1z"/>
<path fill="#0000ff" d="M195 264h2v3h-2z"/>
<path fill="#fff" d="M197 264h1v1h-1z"/>
<path fill="#0000ff" d="M200 269h2v3h-2z"/>
<path fill="#fff" d="M201 269h1v1h-1z"/>
<path fill="#0000ff" d="M208 273h2v3h-2z"/>
<path fill="#fff" d="M209 273h1v1h-1z"/>
<path fill="#0000ff" d="M216 274h2v3h-2z"/>
<path fill="#fff" d="M218 274h1v1h-1z"/>
<path fill="#0000ff" d="M126 278h2v3h-2z"/>
<path fill="#fff" d="M128 278h1v1h-1z"/>
<path fill="#0000ff" d="M144 278h2v3h-2z"/>
<path fill="#fff" d="M145 278h1v1h-1z"/>
<path fill="#0000ff" d="M162 278h2v3h-2z"/>
<path fill="#fff" d="M164 278h1v1h-1z"/>
<path fill="#0000ff" d="M181 278h2v3h-2z"/>
<path fill="#fff" d="M183 278h1v1h-1z"/>
<path fill="#0000ff" d="M200 278h2v3h-2z"/>
<path fill="#fff" d="M201 278h1v1h-1zM150 263h4v2h-4zM168 263h4v2h-4zM131 284h4v2h-4zM150 284h4v2h-4zM168 284h4v2h-4zM187 284h4v2h-4zM206 284h4v2h-4zM151 258h2v1h-2zM170 258h2v1h-2zM151 290h2v1h-2zM170 290h2v1h-2zM188 290h2v1h-2zM132 280h2v1h-2zM92 211h1v6h-1zM92 242h1v6h-1zM91 226h5v2h-5zM91 259h4v2h-4zM114 192h2v7h-2zM114 201h2v2h-2zM88 190h11v1h-11zM88 196h10v2h-10z"/>
<line x1="88" y1="184.5" x2="96" y2="189" stroke="#fff" stroke-width="0.8"/>
<line x1="88" y1="189" x2="96" y2="184.5" stroke="#fff" stroke-width="0.8"/>
<rect x="110.5" y="254.5" width="13" height="7.5" fill="none" stroke="#fff" stroke-width="0.9"/>
<line x1="111" y1="256.4" x2="121" y2="256.4" stroke="#ff0000" stroke-width="1" stroke-dasharray="2 1"/>
<path fill="#fff" d="M104 259h18v1h-18z"/>
<text x="138.4" y="323.4" font-size="2.8" fill="#fff" text-anchor="middle" font-weight="bold" font-family='"Liberation Sans","Noto Sans CJK SC",sans-serif'>底层平面</text>
<path fill="#fff" d="M133 322h11v1h-11zM292 160h40v1h-40zM292 159h1v3h-1zM329 159h1v3h-1zM310 159h3v1h-3zM295 163h5v2h-5zM296 163h3v1h-3zM302 163h4v2h-4zM303 163h2v1h-2zM309 163h4v2h-4zM310 163h2v1h-2zM317 163h10v2h-10zM318 163h8v1h-8zM290 167h44v1h-44zM292 166h1v2h-1zM297 166h1v2h-1zM302 166h1v2h-1zM308 166h1v2h-1zM310 166h1v2h-1zM314 166h1v2h-1zM318 166h1v2h-1zM324 166h1v2h-1zM329 166h1v2h-1zM294 166h3v1h-3zM299 166h3v1h-3zM304 166h3v1h-3zM315 166h3v1h-3zM320 166h3v1h-3zM326 166h3v1h-3zM279 172h1v114h-1zM278 172h3v1h-3zM278 246h3v1h-3zM278 284h3v1h-3zM278 208h1v4h-1zM278 264h1v3h-1zM283 172h1v114h-1zM282 172h2v1h-2zM282 181h2v1h-2zM282 191h2v1h-2zM282 200h2v1h-2zM282 209h2v1h-2zM282 228h2v1h-2zM282 238h2v1h-2zM282 246h2v1h-2zM282 254h2v1h-2zM282 262h2v1h-2zM282 268h2v1h-2zM282 284h2v1h-2zM282 176h1v3h-1zM282 185h1v3h-1zM282 195h1v3h-1zM282 204h1v3h-1zM282 218h1v3h-1zM282 232h1v3h-1zM282 241h1v3h-1zM282 249h1v3h-1zM282 257h1v3h-1zM282 264h1v3h-1zM282 275h1v3h-1zM286 172h1v114h-1zM285 172h3v1h-3zM285 181h3v1h-3zM285 191h3v1h-3zM285 200h3v1h-3zM285 209h3v1h-3zM285 228h3v1h-3zM285 238h3v1h-3zM285 246h3v1h-3zM285 254h3v1h-3zM285 262h3v1h-3zM285 268h3v1h-3zM285 284h3v1h-3zM285 176h1v3h-1zM285 185h1v3h-1zM285 195h1v3h-1zM285 204h1v3h-1zM285 218h1v3h-1zM285 232h1v3h-1zM285 241h1v3h-1zM285 249h1v3h-1zM285 257h1v3h-1zM285 264h1v3h-1zM285 275h1v3h-1zM290 172h1v69h-1zM289 173h2v1h-2zM289 177h2v1h-2zM289 181h2v1h-2zM289 185h2v1h-2zM289 189h2v1h-2zM289 193h2v1h-2zM289 197h2v1h-2zM289 201h2v1h-2zM289 205h2v1h-2zM289 209h2v1h-2zM289 213h2v1h-2zM289 217h2v1h-2zM289 221h2v1h-2zM289 225h2v1h-2zM289 229h2v1h-2zM289 233h2v1h-2zM289 237h2v1h-2zM289 241h2v1h-2zM337 170h1v69h-1zM336 172h2v1h-2zM336 176h2v1h-2zM336 181h2v1h-2zM336 185h2v1h-2zM336 191h2v1h-2zM336 196h2v1h-2zM336 200h2v1h-2zM336 204h2v1h-2zM336 209h2v1h-2zM336 214h2v1h-2zM336 219h2v1h-2zM336 223h2v1h-2zM336 228h2v1h-2zM336 233h2v1h-2zM336 238h2v1h-2zM336 178h1v3h-1zM336 182h1v3h-1zM336 187h1v3h-1zM336 193h1v3h-1zM336 197h1v3h-1zM336 206h1v3h-1zM336 211h1v3h-1zM336 216h1v3h-1zM336 225h1v3h-1zM336 230h1v3h-1zM336 234h1v4h-1z"/>
<path d="M130.4 248 L126.9 251 L127 250" fill="none" stroke="#fff" stroke-width="0.9" transform="translate(206.8,-9.2)"/>
<path fill="#fff" d="M334 241h92v1h-92zM333 240h1v3h-1zM337 240h1v3h-1zM342 240h1v3h-1zM348 240h1v3h-1zM353 240h1v3h-1zM358 240h1v3h-1zM362 240h1v3h-1zM367 240h1v3h-1zM372 240h1v3h-1zM377 240h1v3h-1zM381 240h1v3h-1zM386 240h1v3h-1zM390 240h1v3h-1zM395 240h1v3h-1zM399 240h1v3h-1zM405 240h1v3h-1zM409 240h1v3h-1zM413 240h1v3h-1zM418 240h1v3h-1zM423 240h1v3h-1zM334 240h3v1h-3zM339 240h3v1h-3zM344 240h4v1h-4zM350 240h3v1h-3zM355 240h3v1h-3zM364 240h3v1h-3zM369 240h3v1h-3zM374 240h3v1h-3zM382 240h4v1h-4zM387 240h3v1h-3zM392 240h3v1h-3zM401 240h3v1h-3zM406 240h3v1h-3zM410 240h3v1h-3zM415 240h3v1h-3zM419 240h4v1h-4zM347 244h79v1h-79z"/>
<path d="M127 251 Q136 246.5 147 247.2" fill="none" stroke="#fff" stroke-width="0.9" transform="translate(206.8,-9.2)"/>
<path fill="#fff" d="M430 245h1v42h-1zM428 246h3v1h-3zM428 256h3v1h-3zM428 262h3v1h-3zM428 268h3v1h-3zM428 283h3v1h-3zM428 250h1v3h-1zM428 258h1v3h-1zM428 264h1v3h-1zM428 275h1v3h-1zM432 245h1v42h-1zM431 246h3v1h-3zM431 256h3v1h-3zM431 262h3v1h-3zM431 268h3v1h-3zM431 283h3v1h-3zM431 250h1v3h-1zM431 258h1v3h-1zM431 264h1v3h-1zM431 275h1v3h-1zM436 245h1v42h-1zM435 246h3v1h-3zM435 256h3v1h-3zM435 262h3v1h-3zM435 268h3v1h-3zM435 283h3v1h-3zM435 250h1v3h-1zM435 258h1v3h-1zM435 264h1v3h-1zM435 275h1v3h-1zM291 289h135v1h-135zM292 288h1v3h-1zM307 288h1v3h-1zM314 288h1v3h-1zM320 288h1v3h-1zM326 288h1v3h-1zM333 288h1v3h-1zM348 288h1v3h-1zM367 288h1v3h-1zM386 288h1v3h-1zM395 288h1v3h-1zM405 288h1v3h-1zM413 288h1v3h-1zM423 288h1v3h-1zM297 288h1v3h-1zM302 288h1v3h-1zM336 288h1v3h-1zM342 288h1v3h-1zM354 288h1v3h-1zM361 288h1v3h-1zM374 288h1v3h-1zM380 288h1v3h-1zM390 288h1v3h-1zM400 288h1v3h-1zM409 288h1v3h-1zM418 288h1v3h-1zM299 288h3v1h-3zM309 288h3v1h-3zM316 288h3v1h-3zM322 288h3v1h-3zM328 288h4v1h-4zM340 288h3v1h-3zM357 288h3v1h-3zM376 288h3v1h-3zM389 288h4v1h-4zM399 288h3v1h-3zM408 288h3v1h-3zM417 288h3v1h-3zM299 288h3v1h-3zM318 288h3v1h-3zM338 288h3v1h-3zM347 288h3v1h-3zM357 288h3v1h-3zM367 288h3v1h-3zM376 288h3v1h-3zM384 288h3v1h-3zM394 288h3v1h-3zM404 288h3v1h-3zM413 288h3v1h-3zM291 293h135v1h-135zM292 292h1v2h-1zM307 292h1v2h-1zM314 292h1v2h-1zM320 292h1v2h-1zM326 292h1v2h-1zM333 292h1v2h-1zM348 292h1v2h-1zM367 292h1v2h-1zM386 292h1v2h-1zM395 292h1v2h-1zM405 292h1v2h-1zM413 292h1v2h-1zM423 292h1v2h-1zM299 291h3v1h-3zM309 291h3v1h-3zM316 291h3v1h-3zM322 291h3v1h-3zM328 291h4v1h-4zM340 291h3v1h-3zM357 291h3v1h-3zM376 291h3v1h-3zM389 291h4v1h-4zM399 291h3v1h-3zM408 291h3v1h-3zM417 291h3v1h-3zM291 296h135v1h-135zM292 295h1v2h-1zM333 295h1v2h-1zM423 295h1v2h-1zM311 294h4v1h-4zM377 294h3v1h-3z"/>
<path fill="#ff0000" d="M292 157h1v17h-1zM302 157h1v17h-1zM308 157h1v17h-1zM314 157h1v90h-1zM329 157h1v17h-1zM277 172h53v1h-53zM277 181h53v1h-53zM277 191h53v1h-53zM277 200h53v1h-53zM277 209h53v1h-53zM277 228h53v1h-53zM277 238h53v1h-53zM277 246h53v1h-53z"/>
<line x1="277.4" y1="254.8" x2="281.3" y2="258" stroke="#ff0000" stroke-width="1"/>
<path fill="#ff0000" d="M281 258h48v1h-48zM277 262h147v1h-147zM277 268h42v1h-42zM277 284h54v1h-54zM292 263h1v36h-1zM307 253h1v46h-1zM314 253h1v46h-1zM320 263h1v36h-1zM326 297h1v2h-1zM333 247h1v52h-1zM348 247h1v52h-1zM367 247h1v52h-1zM386 247h1v52h-1zM395 247h1v52h-1zM405 247h1v52h-1zM413 247h1v52h-1zM423 247h1v52h-1zM424 246h15v1h-15zM424 256h15v1h-15zM424 262h15v1h-15zM424 268h15v1h-15zM424 283h15v1h-15z"/>
<circle cx="292.6" cy="154.8" r="2.35" fill="none" stroke="#fff" stroke-width="1.15"/>
<text x="292.6" y="155.75" font-size="2.7" fill="#fff" text-anchor="middle" font-weight="normal" font-family='"Liberation Sans","Noto Sans CJK SC",sans-serif'>1</text>
<circle cx="302.8" cy="154.8" r="2.35" fill="none" stroke="#fff" stroke-width="1.15"/>
<text x="302.8" y="155.75" font-size="2.7" fill="#fff" text-anchor="middle" font-weight="normal" font-family='"Liberation Sans","Noto Sans CJK SC",sans-serif'>2</text>
<circle cx="308.1" cy="154.8" r="2.35" fill="none" stroke="#fff" stroke-width="1.15"/>
<text x="308.1" y="155.75" font-size="2.7" fill="#fff" text-anchor="middle" font-weight="normal" font-family='"Liberation Sans","Noto Sans CJK SC",sans-serif'>3</text>
<circle cx="314.3" cy="154.8" r="2.35" fill="none" stroke="#fff" stroke-width="1.15"/>
<text x="314.3" y="155.75" font-size="2.7" fill="#fff" text-anchor="middle" font-weight="normal" font-family='"Liberation Sans","Noto Sans CJK SC",sans-serif'>4</text>
<circle cx="329.9" cy="154.8" r="2.35" fill="none" stroke="#fff" stroke-width="1.15"/>
<text x="329.9" y="155.75" font-size="2.7" fill="#fff" text-anchor="middle" font-weight="normal" font-family='"Liberation Sans","Noto Sans CJK SC",sans-serif'>5</text>
<circle cx="274.7" cy="172.9" r="2.35" fill="none" stroke="#fff" stroke-width="1.15"/>
<text x="274.7" y="173.85" font-size="2.7" fill="#fff" text-anchor="middle" font-weight="normal" font-family='"Liberation Sans","Noto Sans CJK SC",sans-serif'>6</text>
<circle cx="274.7" cy="181.5" r="2.35" fill="none" stroke="#fff" stroke-width="1.15"/>
<text x="274.7" y="182.45" font-size="2.7" fill="#fff" text-anchor="middle" font-weight="normal" font-family='"Liberation Sans","Noto Sans CJK SC",sans-serif'>7</text>
<circle cx="274.7" cy="191.6" r="2.35" fill="none" stroke="#fff" stroke-width="1.15"/>
<text x="274.7" y="192.55" font-size="2.7" fill="#fff" text-anchor="middle" font-weight="normal" font-family='"Liberation Sans","Noto Sans CJK SC",sans-serif'>8</text>
<circle cx="274.7" cy="200.9" r="2.35" fill="none" stroke="#fff" stroke-width="1.15"/>
<text x="274.7" y="201.85" font-size="2.7" fill="#fff" text-anchor="middle" font-weight="normal" font-family='"Liberation Sans","Noto Sans CJK SC",sans-serif'>9</text>
<circle cx="274.7" cy="209.9" r="2.35" fill="none" stroke="#fff" stroke-width="1.15"/>
<text x="274.7" y="210.85" font-size="2.7" fill="#fff" text-anchor="middle" font-weight="normal" font-family='"Liberation Sans","Noto Sans CJK SC",sans-serif'>0</text>
<circle cx="274.7" cy="228.8" r="2.35" fill="none" stroke="#fff" stroke-width="1.15"/>
<text x="274.7" y="229.75" font-size="2.7" fill="#fff" text-anchor="middle" font-weight="normal" font-family='"Liberation Sans","Noto Sans CJK SC",sans-serif'>A</text>
<circle cx="274.7" cy="238.1" r="2.35" fill="none" stroke="#fff" stroke-width="1.15"/>
<text x="274.7" y="239.05" font-size="2.7" fill="#fff" text-anchor="middle" font-weight="normal" font-family='"Liberation Sans","Noto Sans CJK SC",sans-serif'>B</text>
<circle cx="274.7" cy="246.9" r="2.35" fill="none" stroke="#fff" stroke-width="1.15"/>
<text x="274.7" y="247.85" font-size="2.7" fill="#fff" text-anchor="middle" font-weight="normal" font-family='"Liberation Sans","Noto Sans CJK SC",sans-serif'>C</text>
<circle cx="274.7" cy="254.8" r="2.35" fill="none" stroke="#fff" stroke-width="1.15"/>
<text x="274.7" y="255.75" font-size="2.7" fill="#fff" text-anchor="middle" font-weight="normal" font-family='"Liberation Sans","Noto Sans CJK SC",sans-serif'>D</text>
<circle cx="274.7" cy="262.7" r="2.35" fill="none" stroke="#fff" stroke-width="1.15"/>
<text x="274.7" y="263.65" font-size="2.7" fill="#fff" text-anchor="middle" font-weight="normal" font-family='"Liberation Sans","Noto Sans CJK SC",sans-serif'>E</text>
<circle cx="274.7" cy="268.9" r="2.35" fill="none" stroke="#fff" stroke-width="1.15"/>
<text x="274.7" y="269.85" font-size="2.7" fill="#fff" text-anchor="middle" font-weight="normal" font-family='"Liberation Sans","Noto Sans CJK SC",sans-serif'>F</text>
<circle cx="274.7" cy="284" r="2.35" fill="none" stroke="#fff" stroke-width="1.15"/>
<text x="274.7" y="284.95" font-size="2.7" fill="#fff" text-anchor="middle" font-weight="normal" font-family='"Liberation Sans","Noto Sans CJK SC",sans-serif'>G</text>
<circle cx="292.8" cy="302" r="2.35" fill="none" stroke="#fff" stroke-width="1.15"/>
<text x="292.8" y="302.95" font-size="2.7" fill="#fff" text-anchor="middle" font-weight="normal" font-family='"Liberation Sans","Noto Sans CJK SC",sans-serif'>H</text>
<circle cx="307.5" cy="302" r="2.35" fill="none" stroke="#fff" stroke-width="1.15"/>
<text x="307.5" y="302.95" font-size="2.7" fill="#fff" text-anchor="middle" font-weight="normal" font-family='"Liberation Sans","Noto Sans CJK SC",sans-serif'>1</text>
<circle cx="314.2" cy="302" r="2.35" fill="none" stroke="#fff" stroke-width="1.15"/>
<text x="314.2" y="302.95" font-size="2.7" fill="#fff" text-anchor="middle" font-weight="normal" font-family='"Liberation Sans","Noto Sans CJK SC",sans-serif'>2</text>
<circle cx="320.7" cy="302" r="2.35" fill="none" stroke="#fff" stroke-width="1.15"/>
<text x="320.7" y="302.95" font-size="2.7" fill="#fff" text-anchor="middle" font-weight="normal" font-family='"Liberation Sans","Noto Sans CJK SC",sans-serif'>3</text>
<circle cx="327" cy="302" r="2.35" fill="none" stroke="#fff" stroke-width="1.15"/>
<text x="327" y="302.95" font-size="2.7" fill="#fff" text-anchor="middle" font-weight="normal" font-family='"Liberation Sans","Noto Sans CJK SC",sans-serif'>4</text>
<circle cx="333.2" cy="302" r="2.35" fill="none" stroke="#fff" stroke-width="1.15"/>
<text x="333.2" y="302.95" font-size="2.7" fill="#fff" text-anchor="middle" font-weight="normal" font-family='"Liberation Sans","Noto Sans CJK SC",sans-serif'>5</text>
<circle cx="349" cy="302" r="2.35" fill="none" stroke="#fff" stroke-width="1.15"/>
<text x="349" y="302.95" font-size="2.7" fill="#fff" text-anchor="middle" font-weight="normal" font-family='"Liberation Sans","Noto Sans CJK SC",sans-serif'>6</text>
<circle cx="367.9" cy="302" r="2.35" fill="none" stroke="#fff" stroke-width="1.15"/>
<text x="367.9" y="302.95" font-size="2.7" fill="#fff" text-anchor="middle" font-weight="normal" font-family='"Liberation Sans","Noto Sans CJK SC",sans-serif'>7</text>
<circle cx="386.3" cy="302" r="2.35" fill="none" stroke="#fff" stroke-width="1.15"/>
<text x="386.3" y="302.95" font-size="2.7" fill="#fff" text-anchor="middle" font-weight="normal" font-family='"Liberation Sans","Noto Sans CJK SC",sans-serif'>8</text>
<circle cx="395.8" cy="302" r="2.35" fill="none" stroke="#fff" stroke-width="1.15"/>
<text x="395.8" y="302.95" font-size="2.7" fill="#fff" text-anchor="middle" font-weight="normal" font-family='"Liberation Sans","Noto Sans CJK SC",sans-serif'>9</text>
<circle cx="405.1" cy="302" r="2.35" fill="none" stroke="#fff" stroke-width="1.15"/>
<text x="405.1" y="302.95" font-size="2.7" fill="#fff" text-anchor="middle" font-weight="normal" font-family='"Liberation Sans","Noto Sans CJK SC",sans-serif'>0</text>
<circle cx="413.9" cy="302" r="2.35" fill="none" stroke="#fff" stroke-width="1.15"/>
<text x="413.9" y="302.95" font-size="2.7" fill="#fff" text-anchor="middle" font-weight="normal" font-family='"Liberation Sans","Noto Sans CJK SC",sans-serif'>A</text>
<circle cx="423.2" cy="302" r="2.35" fill="none" stroke="#fff" stroke-width="1.15"/>
<text x="423.2" y="302.95" font-size="2.7" fill="#fff" text-anchor="middle" font-weight="normal" font-family='"Liberation Sans","Noto Sans CJK SC",sans-serif'>B</text>
<circle cx="441.3" cy="246.8" r="2.35" fill="none" stroke="#fff" stroke-width="1.15"/>
<text x="441.3" y="247.75" font-size="2.7" fill="#fff" text-anchor="middle" font-weight="normal" font-family='"Liberation Sans","Noto Sans CJK SC",sans-serif'>C</text>
<circle cx="441.3" cy="256.8" r="2.35" fill="none" stroke="#fff" stroke-width="1.15"/>
<text x="441.3" y="257.75" font-size="2.7" fill="#fff" text-anchor="middle" font-weight="normal" font-family='"Liberation Sans","Noto Sans CJK SC",sans-serif'>D</text>
<circle cx="441.3" cy="262.4" r="2.35" fill="none" stroke="#fff" stroke-width="1.15"/>
<text x="441.3" y="263.35" font-size="2.7" fill="#fff" text-anchor="middle" font-weight="normal" font-family='"Liberation Sans","Noto Sans CJK SC",sans-serif'>E</text>
<circle cx="441.3" cy="268.8" r="2.35" fill="none" stroke="#fff" stroke-width="1.15"/>
<text x="441.3" y="269.75" font-size="2.7" fill="#fff" text-anchor="middle" font-weight="normal" font-family='"Liberation Sans","Noto Sans CJK SC",sans-serif'>F</text>
<circle cx="441.3" cy="283.9" r="2.35" fill="none" stroke="#fff" stroke-width="1.15"/>
<text x="441.3" y="284.85" font-size="2.7" fill="#fff" text-anchor="middle" font-weight="normal" font-family='"Liberation Sans","Noto Sans CJK SC",sans-serif'>G</text>
<path fill="#8fe8b4" d="M293 177h14v9h-14z"/>
<path fill="#fff" d="M296 174h7v2h-7zM296 187h7v2h-7z"/>
<path fill="#00ffff" d="M317 239h13v5h-13z"/>
<line x1="319.3" y1="241.2" x2="328.3" y2="241.2" stroke="#000" stroke-width="1" stroke-dasharray="1.4 1.2"/>
<path fill="#ffff00" d="M320 230h9v7h-9z"/>
<path fill="#fff" d="M316 231h3v5h-3z"/>
<path fill="#0000ff" d="M317 232h2v3h-2z"/>
<path fill="#e4e47e" d="M336 249h3v9h-3z"/>
<path fill="#000" d="M337 251h1v1h-1zM337 254h1v1h-1z"/>
<path fill="#e4e47e" d="M341 249h3v9h-3z"/>
<path fill="#000" d="M342 251h1v1h-1zM342 254h1v1h-1z"/>
<path fill="#e4e47e" d="M345 249h3v9h-3z"/>
<path fill="#000" d="M346 251h1v1h-1zM346 254h1v1h-1z"/>
<path fill="#f0e080" d="M335 261h13v1h-13z"/>
<path fill="#8fe8b4" d="M391 248h11v11h-11z"/>
<path fill="#fff" d="M388 249h3v5h-3zM402 250h2v4h-2z"/>
<path fill="#ffff00" d="M416 252h6v9h-6z"/>
<path fill="#00ff00" d="M292 172h16v2h-16z"/>
<path fill="#ff00ff" d="M308 172h5v2h-5z"/>
<path fill="#00ff00" d="M314 172h17v2h-17z"/>
<path fill="#ff00ff" d="M329 173h2v57h-2z"/>
<path fill="#00ff00" d="M330 171h1v4h-1zM330 190h1v4h-1zM330 208h1v4h-1zM330 227h1v4h-1z"/>
<path fill="#ff00ff" d="M292 173h1v74h-1z"/>
<path fill="#00ff00" d="M291 171h2v4h-2zM291 180h2v4h-2zM291 190h2v4h-2zM291 208h2v4h-2zM291 227h2v4h-2zM291 245h2v4h-2zM307 174h2v73h-2zM314 174h2v65h-2zM292 190h16v2h-16zM292 246h17v2h-17zM315 228h6v1h-6zM293 257h15v2h-15zM307 247h2v11h-2zM292 247h1v6h-1zM315 236h16v2h-16z"/>
<path fill="#fff" d="M299 249h1v7h-1zM311 249h6v2h-6zM305 260h3v1h-3zM311 260h4v2h-4zM297 260h5v1h-5zM311 175h1v72h-1zM332 200h3v7h-3z"/>
<path d="M124 237.2 A4.2 4.8 0 0 1 124 246.6" fill="none" stroke="#f4e060" stroke-width="1.2" transform="translate(206.8,-9.2)"/>
<path fill="#fff" d="M331 230h3v5h-3z"/>
<path fill="#000" d="M332 231h1v3h-1z"/>
<path fill="#ff00ff" d="M330 246h94v2h-94z"/>
<path fill="#00ff00" d="M327 246h6v2h-6zM346 246h6v2h-6zM365 246h6v2h-6zM384 246h6v2h-6zM402 246h6v2h-6zM411 246h6v2h-6zM420 246h6v2h-6z"/>
<path fill="#ff00ff" d="M330 283h94v2h-94z"/>
<path fill="#00ff00" d="M327 283h6v2h-6zM346 283h6v2h-6zM365 283h6v2h-6zM384 283h6v2h-6zM402 283h6v2h-6zM411 283h6v2h-6zM420 283h6v2h-6zM328 247h3v16h-3zM328 269h3v16h-3zM349 247h1v16h-1zM349 269h1v16h-1zM367 247h2v16h-2zM367 269h2v16h-2zM386 247h1v16h-1zM386 269h1v16h-1zM404 247h2v16h-2zM404 269h2v16h-2zM414 247h1v16h-1zM414 269h1v16h-1zM422 247h2v16h-2zM422 269h2v16h-2zM349 261h30v2h-30zM385 262h22v1h-22zM412 261h8v2h-8zM330 268h94v2h-94z"/>
<path fill="#fff" d="M424 261h3v9h-3z"/>
<path fill="#000" d="M425 263h2v5h-2z"/>
<path d="M85.4 255.6 A37.8 37.8 0 0 0 123.1 293.4" fill="none" stroke="#f4e060" stroke-width="1.3" transform="translate(206.8,-9.2)"/>
<path d="M86.6 255.6 A36.6 36.6 0 0 0 104 289" fill="none" stroke="#fff" stroke-width="1" transform="translate(206.8,-9.2)"/>
<circle cx="303.3" cy="275.3" r="10" fill="none" stroke="#fff" stroke-width="0.9"/>
<line x1="294.8" y1="284.8" x2="309.8" y2="269.8" stroke="#fff" stroke-width="0.9"/>
<path fill="#00ff00" d="M318 269h2v15h-2zM318 283h12v2h-12z"/>
<path fill="#fff" d="M322 272h1v9h-1z"/>
<g transform="translate(299.8,264.6) rotate(43)"><rect x="0" y="-2" width="21.5" height="4" fill="#e8e070"/><rect x="3.0" y="-2" width="1.1" height="4" fill="#000"/><rect x="6.6" y="-2" width="1.1" height="4" fill="#000"/><rect x="10.2" y="-2" width="1.1" height="4" fill="#000"/><rect x="13.8" y="-2" width="1.1" height="4" fill="#000"/><rect x="17.4" y="-2" width="1.1" height="4" fill="#000"/></g>
<circle cx="314.7" cy="263" r="2.6" fill="none" stroke="#e8e070" stroke-width="1.6"/>
<path fill="#00ffff" d="M292 172h2v2h-2zM292 191h2v2h-2zM292 209h2v2h-2zM292 228h2v2h-2zM292 246h2v2h-2zM307 172h2v2h-2zM307 191h2v2h-2zM307 209h2v2h-2zM307 228h2v2h-2zM307 246h2v2h-2zM314 172h2v2h-2zM314 191h2v2h-2zM314 209h2v2h-2zM314 228h2v2h-2zM329 172h2v2h-2zM329 191h2v2h-2zM329 209h2v2h-2zM329 228h2v2h-2zM348 246h2v2h-2zM348 261h2v2h-2zM348 268h2v2h-2zM348 283h2v2h-2zM367 246h2v2h-2zM367 261h2v2h-2zM367 268h2v2h-2zM367 283h2v2h-2zM386 246h2v2h-2zM386 261h2v2h-2zM386 268h2v2h-2zM386 283h2v2h-2zM404 246h2v2h-2zM404 261h2v2h-2zM404 268h2v2h-2zM404 283h2v2h-2zM413 246h2v2h-2zM413 261h2v2h-2zM413 268h2v2h-2zM413 283h2v2h-2zM422 246h2v2h-2zM422 261h2v2h-2zM422 268h2v2h-2zM422 283h2v2h-2z"/>
<path fill="#fff" d="M333 286h1v10h-1zM348 286h1v10h-1zM367 286h1v10h-1zM386 286h1v10h-1zM395 286h1v10h-1zM405 286h1v10h-1zM413 286h1v10h-1zM423 286h1v10h-1z"/>
<path fill="#00ffff" d="M307 254h2v2h-2zM319 268h2v2h-2zM307 275h2v2h-2zM319 281h2v2h-2zM301 266h2v2h-2z"/>
<path fill="#0000ff" d="M302 174h2v2h-2z"/>
<path fill="#fff" d="M304 173h1v1h-1z"/>
<path fill="#0000ff" d="M302 188h2v2h-2z"/>
<path fill="#fff" d="M304 187h1v1h-1z"/>
<path fill="#0000ff" d="M308 194h2v3h-2z"/>
<path fill="#fff" d="M310 194h1v1h-1z"/>
<path fill="#0000ff" d="M311 194h2v3h-2z"/>
<path fill="#fff" d="M313 194h1v1h-1z"/>
<path fill="#0000ff" d="M308 217h2v3h-2z"/>
<path fill="#fff" d="M310 217h1v1h-1z"/>
<path fill="#0000ff" d="M312 222h2v3h-2z"/>
<path fill="#fff" d="M314 222h1v1h-1z"/>
<path fill="#0000ff" d="M308 241h2v3h-2z"/>
<path fill="#fff" d="M310 241h1v1h-1z"/>
<path fill="#0000ff" d="M327 250h2v3h-2z"/>
<path fill="#fff" d="M328 250h1v1h-1z"/>
<path fill="#0000ff" d="M305 248h2v3h-2z"/>
<path fill="#fff" d="M307 248h1v1h-1z"/>
<path fill="#0000ff" d="M333 259h2v3h-2z"/>
<path fill="#fff" d="M335 259h1v1h-1z"/>
<path fill="#0000ff" d="M350 259h2v3h-2z"/>
<path fill="#fff" d="M352 259h1v1h-1z"/>
<path fill="#0000ff" d="M369 259h2v3h-2z"/>
<path fill="#fff" d="M371 259h1v1h-1z"/>
<path fill="#0000ff" d="M387 255h2v3h-2z"/>
<path fill="#fff" d="M389 255h1v1h-1z"/>
<path fill="#0000ff" d="M402 255h2v3h-2z"/>
<path fill="#fff" d="M404 255h1v1h-1z"/>
<path fill="#0000ff" d="M406 260h2v3h-2z"/>
<path fill="#fff" d="M408 260h1v1h-1z"/>
<path fill="#0000ff" d="M414 264h2v3h-2z"/>
<path fill="#fff" d="M416 264h1v1h-1z"/>
<path fill="#0000ff" d="M423 265h2v3h-2z"/>
<path fill="#fff" d="M425 265h1v1h-1z"/>
<path fill="#0000ff" d="M333 269h2v3h-2z"/>
<path fill="#fff" d="M335 269h1v1h-1z"/>
<path fill="#0000ff" d="M350 269h2v3h-2z"/>
<path fill="#fff" d="M352 269h1v1h-1z"/>
<path fill="#0000ff" d="M369 269h2v3h-2z"/>
<path fill="#fff" d="M371 269h1v1h-1z"/>
<path fill="#0000ff" d="M388 269h2v3h-2z"/>
<path fill="#fff" d="M390 269h1v1h-1z"/>
<path fill="#0000ff" d="M406 269h2v3h-2z"/>
<path fill="#fff" d="M408 269h1v1h-1zM357 254h4v2h-4zM375 254h4v2h-4zM338 275h4v2h-4zM357 275h4v2h-4zM375 275h4v2h-4zM394 275h4v2h-4zM413 275h4v2h-4zM358 249h2v1h-2zM376 249h2v1h-2zM358 281h2v1h-2zM376 281h2v1h-2zM395 281h2v1h-2zM339 271h2v1h-2zM299 202h1v6h-1zM299 233h1v6h-1zM298 217h5v2h-5zM298 250h4v2h-4zM321 183h2v7h-2zM321 192h2v2h-2zM321 197h1v8h-1zM321 215h1v8h-1z"/>
<line x1="294.8" y1="179.2" x2="304.8" y2="179.2" stroke="#000" stroke-width="0.9" stroke-dasharray="1.5 1"/>
<line x1="294.8" y1="183.4" x2="303.8" y2="183.4" stroke="#000" stroke-width="0.9" stroke-dasharray="1.2 1"/>
<rect x="317.3" y="245.3" width="13" height="7.5" fill="none" stroke="#fff" stroke-width="0.9"/>
<line x1="317.8" y1="247.2" x2="327.8" y2="247.2" stroke="#ff0000" stroke-width="1" stroke-dasharray="2 1"/>
<path fill="#fff" d="M311 250h18v1h-18z"/>
<text x="345.2" y="316.8" font-size="2.8" fill="#fff" text-anchor="middle" font-weight="bold" font-family='"Liberation Sans","Noto Sans CJK SC",sans-serif'>二层平面</text>
<path fill="#fff" d="M340 315h11v1h-11z"/>
<circle cx="182.5" cy="208.4" r="6" fill="none" stroke="#fff" stroke-width="1"/>
<polygon points="182.5,199.4 180.9,214.6 183.9,214.6" fill="#fff"/>
<line x1="182.5" y1="199.4" x2="184.1" y2="200.8" stroke="#fff" stroke-width="0.9"/>
<path fill="#fff" d="M670 174h40v1h-40zM670 174h1v2h-1zM707 174h1v2h-1zM687 173h4v1h-4zM672 178h6v2h-6zM674 177h3v1h-3zM680 178h4v2h-4zM681 177h2v1h-2zM687 178h3v2h-3zM688 177h2v1h-2zM694 178h10v2h-10zM696 177h8v1h-8zM668 181h44v1h-44zM670 180h1v3h-1zM675 180h1v3h-1zM680 180h1v3h-1zM685 180h1v3h-1zM688 180h1v3h-1zM692 180h1v3h-1zM696 180h1v3h-1zM702 180h1v3h-1zM707 180h1v3h-1zM671 180h3v1h-3zM676 180h4v1h-4zM682 180h3v1h-3zM693 180h3v1h-3zM698 180h3v1h-3zM703 180h4v1h-4zM657 186h1v114h-1zM656 187h3v1h-3zM656 261h3v1h-3zM656 298h3v1h-3zM656 223h1v3h-1zM656 278h1v3h-1zM660 186h1v114h-1zM660 187h2v1h-2zM660 195h2v1h-2zM660 205h2v1h-2zM660 215h2v1h-2zM660 224h2v1h-2zM660 242h2v1h-2zM660 252h2v1h-2zM660 261h2v1h-2zM660 268h2v1h-2zM660 276h2v1h-2zM660 283h2v1h-2zM660 298h2v1h-2zM659 190h1v3h-1zM659 199h1v3h-1zM659 209h1v3h-1zM659 218h1v3h-1zM659 232h1v3h-1zM659 246h1v3h-1zM659 255h1v3h-1zM659 263h1v4h-1zM659 271h1v4h-1zM659 278h1v4h-1zM659 289h1v3h-1zM664 186h1v114h-1zM663 187h3v1h-3zM663 195h3v1h-3zM663 205h3v1h-3zM663 215h3v1h-3zM663 224h3v1h-3zM663 242h3v1h-3zM663 252h3v1h-3zM663 261h3v1h-3zM663 268h3v1h-3zM663 276h3v1h-3zM663 283h3v1h-3zM663 298h3v1h-3zM663 190h1v3h-1zM663 199h1v3h-1zM663 209h1v3h-1zM663 218h1v3h-1zM663 232h1v3h-1zM663 246h1v3h-1zM663 255h1v3h-1zM663 263h1v4h-1zM663 271h1v4h-1zM663 278h1v4h-1zM663 289h1v3h-1zM667 186h1v69h-1zM666 188h3v1h-3zM666 192h3v1h-3zM666 196h3v1h-3zM666 200h3v1h-3zM666 204h3v1h-3zM666 208h3v1h-3zM666 212h3v1h-3zM666 216h3v1h-3zM666 220h3v1h-3zM666 224h3v1h-3zM666 228h3v1h-3zM666 232h3v1h-3zM666 236h3v1h-3zM666 240h3v1h-3zM666 244h3v1h-3zM666 248h3v1h-3zM666 252h3v1h-3zM666 256h3v1h-3zM714 184h1v69h-1zM713 187h3v1h-3zM713 190h3v1h-3zM713 195h3v1h-3zM713 200h3v1h-3zM713 205h3v1h-3zM713 210h3v1h-3zM713 215h3v1h-3zM713 218h3v1h-3zM713 224h3v1h-3zM713 228h3v1h-3zM713 234h3v1h-3zM713 238h3v1h-3zM713 242h3v1h-3zM713 248h3v1h-3zM713 252h3v1h-3zM713 192h1v3h-1zM713 196h1v3h-1zM713 201h1v3h-1zM713 207h1v3h-1zM713 211h1v4h-1zM713 220h1v3h-1zM713 225h1v3h-1zM713 230h1v3h-1zM713 239h1v3h-1zM713 244h1v3h-1zM713 249h1v3h-1z"/>
<path d="M130.4 248 L126.9 251 L127 250" fill="none" stroke="#fff" stroke-width="0.9" transform="translate(584.5,5)"/>
<path fill="#fff" d="M712 256h92v1h-92zM710 254h1v3h-1zM715 254h1v3h-1zM720 254h1v3h-1zM726 254h1v3h-1zM731 254h1v3h-1zM736 254h1v3h-1zM740 254h1v3h-1zM745 254h1v3h-1zM750 254h1v3h-1zM755 254h1v3h-1zM759 254h1v3h-1zM764 254h1v3h-1zM768 254h1v3h-1zM773 254h1v3h-1zM777 254h1v3h-1zM782 254h1v3h-1zM787 254h1v3h-1zM791 254h1v3h-1zM796 254h1v3h-1zM800 254h1v3h-1zM712 254h3v1h-3zM716 254h4v1h-4zM722 254h3v1h-3zM728 254h3v1h-3zM732 254h4v1h-4zM741 254h4v1h-4zM746 254h4v1h-4zM751 254h4v1h-4zM760 254h3v1h-3zM765 254h3v1h-3zM769 254h4v1h-4zM779 254h3v1h-3zM784 254h3v1h-3zM788 254h3v1h-3zM792 254h4v1h-4zM797 254h3v1h-3zM724 258h80v1h-80z"/>
<path d="M127 251 Q136 246.5 147 247.2" fill="none" stroke="#fff" stroke-width="0.9" transform="translate(584.5,5)"/>
<path fill="#fff" d="M807 259h1v42h-1zM806 260h3v1h-3zM806 270h3v1h-3zM806 276h3v1h-3zM806 282h3v1h-3zM806 298h3v1h-3zM806 264h1v4h-1zM806 272h1v3h-1zM806 278h1v3h-1zM806 289h1v3h-1zM810 259h1v42h-1zM809 260h3v1h-3zM809 270h3v1h-3zM809 276h3v1h-3zM809 282h3v1h-3zM809 298h3v1h-3zM809 264h1v4h-1zM809 272h1v3h-1zM809 278h1v3h-1zM809 289h1v3h-1zM814 259h1v42h-1zM813 260h2v1h-2zM813 270h2v1h-2zM813 276h2v1h-2zM813 282h2v1h-2zM813 298h2v1h-2zM812 264h1v4h-1zM812 272h1v3h-1zM812 278h1v3h-1zM812 289h1v3h-1zM669 304h134v1h-134zM670 302h1v3h-1zM685 302h1v3h-1zM691 302h1v3h-1zM698 302h1v3h-1zM704 302h1v3h-1zM710 302h1v3h-1zM726 302h1v3h-1zM745 302h1v3h-1zM764 302h1v3h-1zM773 302h1v3h-1zM782 302h1v3h-1zM791 302h1v3h-1zM800 302h1v3h-1zM675 302h1v3h-1zM680 302h1v3h-1zM714 302h1v3h-1zM720 302h1v3h-1zM732 302h1v3h-1zM739 302h1v3h-1zM752 302h1v3h-1zM758 302h1v3h-1zM768 302h1v3h-1zM778 302h1v3h-1zM787 302h1v3h-1zM796 302h1v3h-1zM676 302h3v1h-3zM687 302h3v1h-3zM694 302h3v1h-3zM700 302h3v1h-3zM706 302h3v1h-3zM717 302h3v1h-3zM735 302h3v1h-3zM753 302h3v1h-3zM767 302h3v1h-3zM777 302h3v1h-3zM786 302h3v1h-3zM795 302h3v1h-3zM676 302h4v1h-4zM696 302h3v1h-3zM716 302h3v1h-3zM725 302h3v1h-3zM734 302h4v1h-4zM744 302h4v1h-4zM754 302h3v1h-3zM762 302h3v1h-3zM772 302h3v1h-3zM781 302h4v1h-4zM790 302h4v1h-4zM669 307h134v1h-134zM670 306h1v2h-1zM685 306h1v2h-1zM691 306h1v2h-1zM698 306h1v2h-1zM704 306h1v2h-1zM710 306h1v2h-1zM726 306h1v2h-1zM745 306h1v2h-1zM764 306h1v2h-1zM773 306h1v2h-1zM782 306h1v2h-1zM791 306h1v2h-1zM800 306h1v2h-1zM676 306h3v1h-3zM687 306h3v1h-3zM694 306h3v1h-3zM700 306h3v1h-3zM706 306h3v1h-3zM717 306h3v1h-3zM735 306h3v1h-3zM753 306h3v1h-3zM767 306h3v1h-3zM777 306h3v1h-3zM786 306h3v1h-3zM795 306h3v1h-3zM669 310h134v1h-134zM670 309h1v3h-1zM710 309h1v3h-1zM800 309h1v3h-1zM689 309h3v1h-3zM754 309h4v1h-4z"/>
<path fill="#ff0000" d="M670 172h1v16h-1zM680 172h1v16h-1zM685 172h1v16h-1zM692 172h1v89h-1zM707 172h1v16h-1zM655 187h53v1h-53zM655 195h53v1h-53zM655 205h53v1h-53zM655 215h53v1h-53zM655 224h53v1h-53zM655 242h53v1h-53zM655 252h53v1h-53zM655 261h53v1h-53z"/>
<line x1="655.1" y1="269" x2="659" y2="272.2" stroke="#ff0000" stroke-width="1"/>
<path fill="#ff0000" d="M659 272h48v1h-48zM655 276h147v1h-147zM655 283h42v1h-42zM655 298h54v1h-54zM670 277h1v37h-1zM685 267h1v47h-1zM691 267h1v47h-1zM698 277h1v37h-1zM704 311h1v3h-1zM710 261h1v53h-1zM726 261h1v53h-1zM745 261h1v53h-1zM764 261h1v53h-1zM773 261h1v53h-1zM782 261h1v53h-1zM791 261h1v53h-1zM800 261h1v53h-1zM802 260h14v1h-14zM802 270h14v1h-14zM802 276h14v1h-14zM802 282h14v1h-14zM802 298h14v1h-14z"/>
<circle cx="670.3" cy="169" r="2.35" fill="none" stroke="#fff" stroke-width="1.15"/>
<text x="670.3" y="169.95" font-size="2.7" fill="#fff" text-anchor="middle" font-weight="normal" font-family='"Liberation Sans","Noto Sans CJK SC",sans-serif'>H</text>
<circle cx="680.5" cy="169" r="2.35" fill="none" stroke="#fff" stroke-width="1.15"/>
<text x="680.5" y="169.95" font-size="2.7" fill="#fff" text-anchor="middle" font-weight="normal" font-family='"Liberation Sans","Noto Sans CJK SC",sans-serif'>1</text>
<circle cx="685.8" cy="169" r="2.35" fill="none" stroke="#fff" stroke-width="1.15"/>
<text x="685.8" y="169.95" font-size="2.7" fill="#fff" text-anchor="middle" font-weight="normal" font-family='"Liberation Sans","Noto Sans CJK SC",sans-serif'>2</text>
<circle cx="692" cy="169" r="2.35" fill="none" stroke="#fff" stroke-width="1.15"/>
<text x="692" y="169.95" font-size="2.7" fill="#fff" text-anchor="middle" font-weight="normal" font-family='"Liberation Sans","Noto Sans CJK SC",sans-serif'>3</text>
<circle cx="707.6" cy="169" r="2.35" fill="none" stroke="#fff" stroke-width="1.15"/>
<text x="707.6" y="169.95" font-size="2.7" fill="#fff" text-anchor="middle" font-weight="normal" font-family='"Liberation Sans","Noto Sans CJK SC",sans-serif'>4</text>
<circle cx="652.4" cy="187.1" r="2.35" fill="none" stroke="#fff" stroke-width="1.15"/>
<text x="652.4" y="188.05" font-size="2.7" fill="#fff" text-anchor="middle" font-weight="normal" font-family='"Liberation Sans","Noto Sans CJK SC",sans-serif'>5</text>
<circle cx="652.4" cy="195.7" r="2.35" fill="none" stroke="#fff" stroke-width="1.15"/>
<text x="652.4" y="196.65" font-size="2.7" fill="#fff" text-anchor="middle" font-weight="normal" font-family='"Liberation Sans","Noto Sans CJK SC",sans-serif'>6</text>
<circle cx="652.4" cy="205.8" r="2.35" fill="none" stroke="#fff" stroke-width="1.15"/>
<text x="652.4" y="206.75" font-size="2.7" fill="#fff" text-anchor="middle" font-weight="normal" font-family='"Liberation Sans","Noto Sans CJK SC",sans-serif'>7</text>
<circle cx="652.4" cy="215.1" r="2.35" fill="none" stroke="#fff" stroke-width="1.15"/>
<text x="652.4" y="216.05" font-size="2.7" fill="#fff" text-anchor="middle" font-weight="normal" font-family='"Liberation Sans","Noto Sans CJK SC",sans-serif'>8</text>
<circle cx="652.4" cy="224.1" r="2.35" fill="none" stroke="#fff" stroke-width="1.15"/>
<text x="652.4" y="225.05" font-size="2.7" fill="#fff" text-anchor="middle" font-weight="normal" font-family='"Liberation Sans","Noto Sans CJK SC",sans-serif'>9</text>
<circle cx="652.4" cy="243" r="2.35" fill="none" stroke="#fff" stroke-width="1.15"/>
<text x="652.4" y="243.95" font-size="2.7" fill="#fff" text-anchor="middle" font-weight="normal" font-family='"Liberation Sans","Noto Sans CJK SC",sans-serif'>0</text>
<circle cx="652.4" cy="252.3" r="2.35" fill="none" stroke="#fff" stroke-width="1.15"/>
<text x="652.4" y="253.25" font-size="2.7" fill="#fff" text-anchor="middle" font-weight="normal" font-family='"Liberation Sans","Noto Sans CJK SC",sans-serif'>A</text>
<circle cx="652.4" cy="261.1" r="2.35" fill="none" stroke="#fff" stroke-width="1.15"/>
<text x="652.4" y="262.05" font-size="2.7" fill="#fff" text-anchor="middle" font-weight="normal" font-family='"Liberation Sans","Noto Sans CJK SC",sans-serif'>B</text>
<circle cx="652.4" cy="269" r="2.35" fill="none" stroke="#fff" stroke-width="1.15"/>
<text x="652.4" y="269.95" font-size="2.7" fill="#fff" text-anchor="middle" font-weight="normal" font-family='"Liberation Sans","Noto Sans CJK SC",sans-serif'>C</text>
<circle cx="652.4" cy="276.9" r="2.35" fill="none" stroke="#fff" stroke-width="1.15"/>
<text x="652.4" y="277.85" font-size="2.7" fill="#fff" text-anchor="middle" font-weight="normal" font-family='"Liberation Sans","Noto Sans CJK SC",sans-serif'>D</text>
<circle cx="652.4" cy="283.1" r="2.35" fill="none" stroke="#fff" stroke-width="1.15"/>
<text x="652.4" y="284.05" font-size="2.7" fill="#fff" text-anchor="middle" font-weight="normal" font-family='"Liberation Sans","Noto Sans CJK SC",sans-serif'>E</text>
<circle cx="652.4" cy="298.2" r="2.35" fill="none" stroke="#fff" stroke-width="1.15"/>
<text x="652.4" y="299.15" font-size="2.7" fill="#fff" text-anchor="middle" font-weight="normal" font-family='"Liberation Sans","Noto Sans CJK SC",sans-serif'>F</text>
<circle cx="670.5" cy="316.2" r="2.35" fill="none" stroke="#fff" stroke-width="1.15"/>
<text x="670.5" y="317.15" font-size="2.7" fill="#fff" text-anchor="middle" font-weight="normal" font-family='"Liberation Sans","Noto Sans CJK SC",sans-serif'>G</text>
<circle cx="685.2" cy="316.2" r="2.35" fill="none" stroke="#fff" stroke-width="1.15"/>
<text x="685.2" y="317.15" font-size="2.7" fill="#fff" text-anchor="middle" font-weight="normal" font-family='"Liberation Sans","Noto Sans CJK SC",sans-serif'>H</text>
<circle cx="691.9" cy="316.2" r="2.35" fill="none" stroke="#fff" stroke-width="1.15"/>
<text x="691.9" y="317.15" font-size="2.7" fill="#fff" text-anchor="middle" font-weight="normal" font-family='"Liberation Sans","Noto Sans CJK SC",sans-serif'>1</text>
<circle cx="698.4" cy="316.2" r="2.35" fill="none" stroke="#fff" stroke-width="1.15"/>
<text x="698.4" y="317.15" font-size="2.7" fill="#fff" text-anchor="middle" font-weight="normal" font-family='"Liberation Sans","Noto Sans CJK SC",sans-serif'>2</text>
<circle cx="704.7" cy="316.2" r="2.35" fill="none" stroke="#fff" stroke-width="1.15"/>
<text x="704.7" y="317.15" font-size="2.7" fill="#fff" text-anchor="middle" font-weight="normal" font-family='"Liberation Sans","Noto Sans CJK SC",sans-serif'>3</text>
<circle cx="710.9" cy="316.2" r="2.35" fill="none" stroke="#fff" stroke-width="1.15"/>
<text x="710.9" y="317.15" font-size="2.7" fill="#fff" text-anchor="middle" font-weight="normal" font-family='"Liberation Sans","Noto Sans CJK SC",sans-serif'>4</text>
<circle cx="726.7" cy="316.2" r="2.35" fill="none" stroke="#fff" stroke-width="1.15"/>
<text x="726.7" y="317.15" font-size="2.7" fill="#fff" text-anchor="middle" font-weight="normal" font-family='"Liberation Sans","Noto Sans CJK SC",sans-serif'>5</text>
<circle cx="745.6" cy="316.2" r="2.35" fill="none" stroke="#fff" stroke-width="1.15"/>
<text x="745.6" y="317.15" font-size="2.7" fill="#fff" text-anchor="middle" font-weight="normal" font-family='"Liberation Sans","Noto Sans CJK SC",sans-serif'>6</text>
<circle cx="764" cy="316.2" r="2.35" fill="none" stroke="#fff" stroke-width="1.15"/>
<text x="764" y="317.15" font-size="2.7" fill="#fff" text-anchor="middle" font-weight="normal" font-family='"Liberation Sans","Noto Sans CJK SC",sans-serif'>7</text>
<circle cx="773.5" cy="316.2" r="2.35" fill="none" stroke="#fff" stroke-width="1.15"/>
<text x="773.5" y="317.15" font-size="2.7" fill="#fff" text-anchor="middle" font-weight="normal" font-family='"Liberation Sans","Noto Sans CJK SC",sans-serif'>8</text>
<circle cx="782.8" cy="316.2" r="2.35" fill="none" stroke="#fff" stroke-width="1.15"/>
<text x="782.8" y="317.15" font-size="2.7" fill="#fff" text-anchor="middle" font-weight="normal" font-family='"Liberation Sans","Noto Sans CJK SC",sans-serif'>9</text>
<circle cx="791.6" cy="316.2" r="2.35" fill="none" stroke="#fff" stroke-width="1.15"/>
<text x="791.6" y="317.15" font-size="2.7" fill="#fff" text-anchor="middle" font-weight="normal" font-family='"Liberation Sans","Noto Sans CJK SC",sans-serif'>0</text>
<circle cx="800.9" cy="316.2" r="2.35" fill="none" stroke="#fff" stroke-width="1.15"/>
<text x="800.9" y="317.15" font-size="2.7" fill="#fff" text-anchor="middle" font-weight="normal" font-family='"Liberation Sans","Noto Sans CJK SC",sans-serif'>A</text>
<circle cx="819" cy="261" r="2.35" fill="none" stroke="#fff" stroke-width="1.15"/>
<text x="819" y="261.95" font-size="2.7" fill="#fff" text-anchor="middle" font-weight="normal" font-family='"Liberation Sans","Noto Sans CJK SC",sans-serif'>B</text>
<circle cx="819" cy="271" r="2.35" fill="none" stroke="#fff" stroke-width="1.15"/>
<text x="819" y="271.95" font-size="2.7" fill="#fff" text-anchor="middle" font-weight="normal" font-family='"Liberation Sans","Noto Sans CJK SC",sans-serif'>C</text>
<circle cx="819" cy="276.6" r="2.35" fill="none" stroke="#fff" stroke-width="1.15"/>
<text x="819" y="277.55" font-size="2.7" fill="#fff" text-anchor="middle" font-weight="normal" font-family='"Liberation Sans","Noto Sans CJK SC",sans-serif'>D</text>
<circle cx="819" cy="283" r="2.35" fill="none" stroke="#fff" stroke-width="1.15"/>
<text x="819" y="283.95" font-size="2.7" fill="#fff" text-anchor="middle" font-weight="normal" font-family='"Liberation Sans","Noto Sans CJK SC",sans-serif'>E</text>
<circle cx="819" cy="298.1" r="2.35" fill="none" stroke="#fff" stroke-width="1.15"/>
<text x="819" y="299.05" font-size="2.7" fill="#fff" text-anchor="middle" font-weight="normal" font-family='"Liberation Sans","Noto Sans CJK SC",sans-serif'>F</text>
<path fill="#8fe8b4" d="M671 191h14v9h-14z"/>
<path fill="#fff" d="M674 189h6v2h-6zM674 201h6v2h-6z"/>
<path fill="#00ffff" d="M695 253h13v5h-13z"/>
<line x1="697" y1="255.4" x2="706" y2="255.4" stroke="#000" stroke-width="1" stroke-dasharray="1.4 1.2"/>
<path fill="#ffff00" d="M698 244h8v7h-8z"/>
<path fill="#fff" d="M694 246h3v4h-3z"/>
<path fill="#0000ff" d="M695 246h1v3h-1z"/>
<path fill="#e4e47e" d="M714 264h3v8h-3z"/>
<path fill="#000" d="M715 265h1v1h-1zM715 268h1v1h-1z"/>
<path fill="#e4e47e" d="M718 264h4v8h-4z"/>
<path fill="#000" d="M719 265h1v1h-1zM719 268h1v1h-1z"/>
<path fill="#e4e47e" d="M723 264h3v8h-3z"/>
<path fill="#000" d="M724 265h1v1h-1zM724 268h1v1h-1z"/>
<path fill="#f0e080" d="M713 275h13v1h-13z"/>
<path fill="#8fe8b4" d="M769 262h11v11h-11z"/>
<path fill="#fff" d="M766 263h3v5h-3zM780 264h2v4h-2z"/>
<path fill="#ffff00" d="M794 266h6v9h-6z"/>
<path fill="#00ff00" d="M670 186h16v2h-16z"/>
<path fill="#ff00ff" d="M686 186h5v2h-5z"/>
<path fill="#00ff00" d="M692 186h17v2h-17z"/>
<path fill="#ff00ff" d="M707 187h1v57h-1z"/>
<path fill="#00ff00" d="M707 186h1v3h-1zM707 204h1v4h-1zM707 223h1v3h-1zM707 242h1v3h-1z"/>
<path fill="#ff00ff" d="M670 187h1v74h-1z"/>
<path fill="#00ff00" d="M669 186h2v3h-2zM669 194h2v4h-2zM669 204h2v4h-2zM669 223h2v3h-2zM669 242h2v3h-2zM669 260h2v3h-2zM685 188h1v73h-1zM692 188h2v65h-2zM670 204h16v2h-16zM670 260h16v2h-16zM692 243h6v1h-6zM670 271h16v2h-16zM684 261h2v11h-2zM670 261h1v6h-1zM692 251h16v2h-16z"/>
<path fill="#fff" d="M677 264h1v6h-1zM689 264h5v2h-5zM682 275h4v1h-4zM688 275h4v2h-4zM674 274h6v1h-6zM689 189h1v72h-1z"/>
<path d="M124 237.2 A4.2 4.8 0 0 1 124 246.6" fill="none" stroke="#f4e060" stroke-width="1.2" transform="translate(584.5,5)"/>
<path fill="#fff" d="M709 244h3v5h-3z"/>
<path fill="#000" d="M710 245h1v3h-1z"/>
<path fill="#ff00ff" d="M708 260h94v2h-94z"/>
<path fill="#00ff00" d="M705 260h6v2h-6zM724 260h6v2h-6zM743 260h6v2h-6zM761 260h6v2h-6zM780 260h6v2h-6zM789 260h6v2h-6zM798 260h6v2h-6z"/>
<path fill="#ff00ff" d="M708 297h94v2h-94z"/>
<path fill="#00ff00" d="M705 297h6v2h-6zM724 297h6v2h-6zM743 297h6v2h-6zM761 297h6v2h-6zM780 297h6v2h-6zM789 297h6v2h-6zM798 297h6v2h-6zM706 261h3v16h-3zM706 283h3v16h-3zM727 261h1v16h-1zM727 283h1v16h-1zM745 261h2v16h-2zM745 283h2v16h-2zM764 261h1v16h-1zM764 283h1v16h-1zM782 261h2v16h-2zM782 283h2v16h-2zM792 261h1v16h-1zM792 283h1v16h-1zM800 261h2v16h-2zM800 283h2v16h-2zM727 276h29v2h-29zM762 276h22v1h-22zM790 276h8v2h-8zM708 282h94v2h-94z"/>
<path fill="#fff" d="M802 276h3v8h-3z"/>
<path fill="#000" d="M803 277h1v5h-1z"/>
<path d="M85.4 255.6 A37.8 37.8 0 0 0 123.1 293.4" fill="none" stroke="#f4e060" stroke-width="1.3" transform="translate(584.5,5)"/>
<path d="M86.6 255.6 A36.6 36.6 0 0 0 104 289" fill="none" stroke="#fff" stroke-width="1" transform="translate(584.5,5)"/>
<path fill="#00ff00" d="M695 283h2v15h-2zM696 297h12v2h-12z"/>
<path fill="#fff" d="M700 286h1v9h-1z"/>
<g transform="translate(677.5,278.8) rotate(43)"><rect x="0" y="-2" width="21.5" height="4" fill="#e8e070"/><rect x="3.0" y="-2" width="1.1" height="4" fill="#000"/><rect x="6.6" y="-2" width="1.1" height="4" fill="#000"/><rect x="10.2" y="-2" width="1.1" height="4" fill="#000"/><rect x="13.8" y="-2" width="1.1" height="4" fill="#000"/><rect x="17.4" y="-2" width="1.1" height="4" fill="#000"/></g>
<circle cx="692.4" cy="277.2" r="2.6" fill="none" stroke="#e8e070" stroke-width="1.6"/>
<path fill="#00ffff" d="M669 186h2v2h-2zM669 205h2v2h-2zM669 223h2v2h-2zM669 242h2v2h-2zM669 260h2v2h-2zM684 186h2v2h-2zM684 205h2v2h-2zM684 223h2v2h-2zM684 242h2v2h-2zM684 260h2v2h-2zM692 186h2v2h-2zM692 205h2v2h-2zM692 223h2v2h-2zM692 242h2v2h-2zM707 186h2v2h-2zM707 205h2v2h-2zM707 223h2v2h-2zM707 242h2v2h-2zM726 260h2v2h-2zM726 276h2v2h-2zM726 282h2v2h-2zM726 297h2v2h-2zM745 260h2v2h-2zM745 276h2v2h-2zM745 282h2v2h-2zM745 297h2v2h-2zM763 260h2v2h-2zM763 276h2v2h-2zM763 282h2v2h-2zM763 297h2v2h-2zM782 260h2v2h-2zM782 276h2v2h-2zM782 282h2v2h-2zM782 297h2v2h-2zM791 260h2v2h-2zM791 276h2v2h-2zM791 282h2v2h-2zM791 297h2v2h-2zM800 260h2v2h-2zM800 276h2v2h-2zM800 282h2v2h-2zM800 297h2v2h-2z"/>
<path fill="#fff" d="M710 300h1v10h-1zM726 300h1v10h-1zM745 300h1v10h-1zM764 300h1v10h-1zM773 300h1v10h-1zM782 300h1v10h-1zM791 300h1v10h-1zM800 300h1v10h-1z"/>
<path fill="#00ffff" d="M684 268h2v2h-2zM696 282h2v2h-2zM684 290h2v2h-2zM696 296h2v2h-2zM679 280h2v2h-2z"/>
<path fill="#0000ff" d="M680 188h2v3h-2z"/>
<path fill="#fff" d="M682 188h1v1h-1z"/>
<path fill="#0000ff" d="M680 202h2v3h-2z"/>
<path fill="#fff" d="M682 202h1v1h-1z"/>
<path fill="#0000ff" d="M686 208h2v3h-2z"/>
<path fill="#fff" d="M688 208h1v1h-1z"/>
<path fill="#0000ff" d="M689 208h2v3h-2z"/>
<path fill="#fff" d="M691 208h1v1h-1z"/>
<path fill="#0000ff" d="M686 231h2v3h-2z"/>
<path fill="#fff" d="M688 231h1v1h-1z"/>
<path fill="#0000ff" d="M690 236h2v4h-2z"/>
<path fill="#fff" d="M691 236h1v1h-1z"/>
<path fill="#0000ff" d="M686 255h2v3h-2z"/>
<path fill="#fff" d="M688 255h1v1h-1z"/>
<path fill="#0000ff" d="M704 264h2v3h-2z"/>
<path fill="#fff" d="M706 264h1v1h-1z"/>
<path fill="#0000ff" d="M682 262h2v4h-2z"/>
<path fill="#fff" d="M684 262h1v1h-1z"/>
<path fill="#0000ff" d="M710 274h2v2h-2z"/>
<path fill="#fff" d="M712 273h1v1h-1z"/>
<path fill="#0000ff" d="M728 274h2v2h-2z"/>
<path fill="#fff" d="M730 273h1v1h-1z"/>
<path fill="#0000ff" d="M746 274h2v2h-2z"/>
<path fill="#fff" d="M748 273h1v1h-1z"/>
<path fill="#0000ff" d="M764 269h2v3h-2z"/>
<path fill="#fff" d="M766 269h1v1h-1z"/>
<path fill="#0000ff" d="M780 269h2v3h-2z"/>
<path fill="#fff" d="M781 269h1v1h-1z"/>
<path fill="#0000ff" d="M784 274h2v3h-2z"/>
<path fill="#fff" d="M786 274h1v1h-1z"/>
<path fill="#0000ff" d="M792 278h2v3h-2z"/>
<path fill="#fff" d="M794 278h1v1h-1z"/>
<path fill="#0000ff" d="M801 279h2v3h-2z"/>
<path fill="#fff" d="M803 279h1v1h-1z"/>
<path fill="#0000ff" d="M710 283h2v3h-2z"/>
<path fill="#fff" d="M712 283h1v1h-1z"/>
<path fill="#0000ff" d="M728 283h2v3h-2z"/>
<path fill="#fff" d="M730 283h1v1h-1z"/>
<path fill="#0000ff" d="M747 283h2v3h-2z"/>
<path fill="#fff" d="M749 283h1v1h-1z"/>
<path fill="#0000ff" d="M766 283h2v3h-2z"/>
<path fill="#fff" d="M767 283h1v1h-1z"/>
<path fill="#0000ff" d="M784 283h2v3h-2z"/>
<path fill="#fff" d="M786 283h1v1h-1zM734 268h4v2h-4zM753 268h4v2h-4zM716 290h4v2h-4zM734 290h4v2h-4zM753 290h4v2h-4zM772 290h4v2h-4zM790 290h4v2h-4zM736 263h2v1h-2zM754 263h2v1h-2zM736 296h2v1h-2zM754 296h2v1h-2zM772 296h2v1h-2zM716 286h2v1h-2zM677 216h1v6h-1zM677 247h1v6h-1zM676 232h4v2h-4zM676 264h4v2h-4zM698 197h2v7h-2zM698 206h2v2h-2zM699 211h1v8h-1zM699 229h1v8h-1z"/>
<line x1="672.5" y1="193.4" x2="682.5" y2="193.4" stroke="#000" stroke-width="0.9" stroke-dasharray="1.5 1"/>
<line x1="672.5" y1="197.6" x2="681.5" y2="197.6" stroke="#000" stroke-width="0.9" stroke-dasharray="1.2 1"/>
<rect x="695" y="259.5" width="13" height="7.5" fill="none" stroke="#fff" stroke-width="0.9"/>
<line x1="695.5" y1="261.4" x2="705.5" y2="261.4" stroke="#ff0000" stroke-width="1" stroke-dasharray="2 1"/>
<path fill="#fff" d="M688 264h18v1h-18z"/>
<text x="722.9" y="327.6" font-size="2.8" fill="#fff" text-anchor="middle" font-weight="bold" font-family='"Liberation Sans","Noto Sans CJK SC",sans-serif'>三层平面</text>
<path fill="#fff" d="M717 326h11v1h-11zM858 166h40v1h-40zM858 165h1v3h-1zM895 165h1v3h-1zM875 165h4v1h-4zM861 170h5v2h-5zM862 169h3v1h-3zM868 170h4v2h-4zM869 169h2v1h-2zM875 170h4v2h-4zM876 169h2v1h-2zM883 170h10v2h-10zM884 169h8v1h-8zM856 173h44v1h-44zM858 172h1v3h-1zM863 172h1v3h-1zM868 172h1v3h-1zM873 172h1v3h-1zM876 172h1v3h-1zM880 172h1v3h-1zM884 172h1v3h-1zM890 172h1v3h-1zM895 172h1v3h-1zM859 172h4v1h-4zM864 172h4v1h-4zM870 172h3v1h-3zM881 172h3v1h-3zM886 172h3v1h-3zM892 172h3v1h-3zM845 178h1v114h-1zM844 178h3v1h-3zM844 253h3v1h-3zM844 290h3v1h-3zM844 214h1v4h-1zM844 270h1v3h-1zM849 178h1v114h-1zM848 178h2v1h-2zM848 187h2v1h-2zM848 197h2v1h-2zM848 206h2v1h-2zM848 216h2v1h-2zM848 234h2v1h-2zM848 244h2v1h-2zM848 253h2v1h-2zM848 260h2v1h-2zM848 268h2v1h-2zM848 274h2v1h-2zM848 290h2v1h-2zM847 182h1v3h-1zM847 191h1v3h-1zM847 201h1v3h-1zM847 210h1v3h-1zM847 224h1v3h-1zM847 238h1v3h-1zM847 247h1v3h-1zM847 255h1v4h-1zM847 263h1v3h-1zM847 270h1v4h-1zM847 281h1v3h-1zM852 178h1v114h-1zM851 178h3v1h-3zM851 187h3v1h-3zM851 197h3v1h-3zM851 206h3v1h-3zM851 216h3v1h-3zM851 234h3v1h-3zM851 244h3v1h-3zM851 253h3v1h-3zM851 260h3v1h-3zM851 268h3v1h-3zM851 274h3v1h-3zM851 290h3v1h-3zM851 182h1v3h-1zM851 191h1v3h-1zM851 201h1v3h-1zM851 210h1v3h-1zM851 224h1v3h-1zM851 238h1v3h-1zM851 247h1v3h-1zM851 255h1v4h-1zM851 263h1v3h-1zM851 270h1v4h-1zM851 281h1v3h-1zM855 178h1v69h-1zM855 179h2v1h-2zM855 183h2v1h-2zM855 187h2v1h-2zM855 191h2v1h-2zM855 195h2v1h-2zM855 199h2v1h-2zM855 203h2v1h-2zM855 207h2v1h-2zM855 211h2v1h-2zM855 215h2v1h-2zM855 219h2v1h-2zM855 223h2v1h-2zM855 227h2v1h-2zM855 231h2v1h-2zM855 235h2v1h-2zM855 239h2v1h-2zM855 243h2v1h-2zM855 247h2v1h-2zM902 176h1v69h-1zM902 178h2v1h-2zM902 182h2v1h-2zM902 187h2v1h-2zM902 191h2v1h-2zM902 197h2v1h-2zM902 202h2v1h-2zM902 206h2v1h-2zM902 210h2v1h-2zM902 216h2v1h-2zM902 220h2v1h-2zM902 225h2v1h-2zM902 229h2v1h-2zM902 234h2v1h-2zM902 239h2v1h-2zM902 244h2v1h-2zM901 184h1v3h-1zM901 188h1v3h-1zM901 193h1v3h-1zM901 199h1v3h-1zM901 203h1v4h-1zM901 212h1v3h-1zM901 217h1v3h-1zM901 222h1v3h-1zM901 231h1v3h-1zM901 236h1v3h-1zM901 240h1v4h-1z"/>
<path d="M130.4 248 L126.9 251 L127 250" fill="none" stroke="#fff" stroke-width="0.9" transform="translate(772.6,-3.1)"/>
<path fill="#fff" d="M900 247h92v1h-92zM898 246h1v3h-1zM903 246h1v3h-1zM908 246h1v3h-1zM914 246h1v3h-1zM919 246h1v3h-1zM924 246h1v3h-1zM928 246h1v3h-1zM933 246h1v3h-1zM938 246h1v3h-1zM943 246h1v3h-1zM947 246h1v3h-1zM952 246h1v3h-1zM956 246h1v3h-1zM961 246h1v3h-1zM965 246h1v3h-1zM970 246h1v3h-1zM975 246h1v3h-1zM979 246h1v3h-1zM984 246h1v3h-1zM988 246h1v3h-1zM900 246h3v1h-3zM904 246h4v1h-4zM910 246h3v1h-3zM916 246h3v1h-3zM920 246h4v1h-4zM930 246h3v1h-3zM935 246h3v1h-3zM940 246h3v1h-3zM948 246h3v1h-3zM953 246h3v1h-3zM958 246h3v1h-3zM967 246h3v1h-3zM972 246h3v1h-3zM976 246h3v1h-3zM981 246h3v1h-3zM985 246h3v1h-3zM913 250h79v1h-79z"/>
<path d="M127 251 Q136 246.5 147 247.2" fill="none" stroke="#fff" stroke-width="0.9" transform="translate(772.6,-3.1)"/>
<path fill="#fff" d="M995 251h1v42h-1zM994 252h3v1h-3zM994 262h3v1h-3zM994 268h3v1h-3zM994 274h3v1h-3zM994 290h3v1h-3zM994 256h1v4h-1zM994 264h1v3h-1zM994 270h1v3h-1zM994 281h1v3h-1zM998 251h1v42h-1zM997 252h3v1h-3zM997 262h3v1h-3zM997 268h3v1h-3zM997 274h3v1h-3zM997 290h3v1h-3zM997 256h1v4h-1zM997 264h1v3h-1zM997 270h1v3h-1zM997 281h1v3h-1zM1002 251h1v42h-1zM1001 252h2v1h-2zM1001 262h2v1h-2zM1001 268h2v1h-2zM1001 274h2v1h-2zM1001 290h2v1h-2zM1000 256h1v4h-1zM1000 264h1v3h-1zM1000 270h1v3h-1zM1000 281h1v3h-1zM857 295h134v1h-134zM858 294h1v3h-1zM873 294h1v3h-1zM880 294h1v3h-1zM886 294h1v3h-1zM892 294h1v3h-1zM898 294h1v3h-1zM914 294h1v3h-1zM933 294h1v3h-1zM952 294h1v3h-1zM961 294h1v3h-1zM970 294h1v3h-1zM979 294h1v3h-1zM988 294h1v3h-1zM863 294h1v3h-1zM868 294h1v3h-1zM902 294h1v3h-1zM908 294h1v3h-1zM920 294h1v3h-1zM927 294h1v3h-1zM940 294h1v3h-1zM946 294h1v3h-1zM956 294h1v3h-1zM966 294h1v3h-1zM975 294h1v3h-1zM984 294h1v3h-1zM864 294h4v1h-4zM875 294h3v1h-3zM882 294h3v1h-3zM888 294h3v1h-3zM894 294h4v1h-4zM905 294h3v1h-3zM923 294h3v1h-3zM941 294h3v1h-3zM955 294h3v1h-3zM965 294h3v1h-3zM974 294h3v1h-3zM983 294h3v1h-3zM864 294h4v1h-4zM884 294h3v1h-3zM904 294h3v1h-3zM913 294h3v1h-3zM922 294h4v1h-4zM932 294h4v1h-4zM942 294h3v1h-3zM950 294h3v1h-3zM960 294h3v1h-3zM970 294h3v1h-3zM978 294h4v1h-4zM857 299h134v1h-134zM858 298h1v2h-1zM873 298h1v2h-1zM880 298h1v2h-1zM886 298h1v2h-1zM892 298h1v2h-1zM898 298h1v2h-1zM914 298h1v2h-1zM933 298h1v2h-1zM952 298h1v2h-1zM961 298h1v2h-1zM970 298h1v2h-1zM979 298h1v2h-1zM988 298h1v2h-1zM864 298h4v1h-4zM875 298h3v1h-3zM882 298h3v1h-3zM888 298h3v1h-3zM894 298h4v1h-4zM905 298h3v1h-3zM923 298h3v1h-3zM941 298h3v1h-3zM955 298h3v1h-3zM965 298h3v1h-3zM974 298h3v1h-3zM983 298h3v1h-3zM857 302h134v1h-134zM858 301h1v2h-1zM898 301h1v2h-1zM988 301h1v2h-1zM877 301h3v1h-3zM942 301h4v1h-4z"/>
<path fill="#ff0000" d="M858 163h1v17h-1zM868 163h1v17h-1zM873 163h1v17h-1zM880 163h1v90h-1zM895 163h1v17h-1zM843 178h53v1h-53zM843 187h53v1h-53zM843 197h53v1h-53zM843 206h53v1h-53zM843 216h53v1h-53zM843 234h53v1h-53zM843 244h53v1h-53zM843 253h53v1h-53z"/>
<line x1="843.2" y1="260.9" x2="847.1" y2="264.1" stroke="#ff0000" stroke-width="1"/>
<path fill="#ff0000" d="M847 264h48v1h-48zM843 268h147v1h-147zM843 274h42v1h-42zM843 290h54v1h-54zM858 269h1v37h-1zM873 259h1v47h-1zM880 259h1v47h-1zM886 269h1v37h-1zM892 303h1v3h-1zM898 253h1v53h-1zM914 253h1v53h-1zM933 253h1v53h-1zM952 253h1v53h-1zM961 253h1v53h-1zM970 253h1v53h-1zM979 253h1v53h-1zM988 253h1v53h-1zM990 252h14v1h-14zM990 262h14v1h-14zM990 268h14v1h-14zM990 274h14v1h-14zM990 290h14v1h-14z"/>
<circle cx="858.4" cy="160.9" r="2.35" fill="none" stroke="#fff" stroke-width="1.15"/>
<text x="858.4" y="161.85" font-size="2.7" fill="#fff" text-anchor="middle" font-weight="normal" font-family='"Liberation Sans","Noto Sans CJK SC",sans-serif'>G</text>
<circle cx="868.6" cy="160.9" r="2.35" fill="none" stroke="#fff" stroke-width="1.15"/>
<text x="868.6" y="161.85" font-size="2.7" fill="#fff" text-anchor="middle" font-weight="normal" font-family='"Liberation Sans","Noto Sans CJK SC",sans-serif'>H</text>
<circle cx="873.9" cy="160.9" r="2.35" fill="none" stroke="#fff" stroke-width="1.15"/>
<text x="873.9" y="161.85" font-size="2.7" fill="#fff" text-anchor="middle" font-weight="normal" font-family='"Liberation Sans","Noto Sans CJK SC",sans-serif'>1</text>
<circle cx="880.1" cy="160.9" r="2.35" fill="none" stroke="#fff" stroke-width="1.15"/>
<text x="880.1" y="161.85" font-size="2.7" fill="#fff" text-anchor="middle" font-weight="normal" font-family='"Liberation Sans","Noto Sans CJK SC",sans-serif'>2</text>
<circle cx="895.7" cy="160.9" r="2.35" fill="none" stroke="#fff" stroke-width="1.15"/>
<text x="895.7" y="161.85" font-size="2.7" fill="#fff" text-anchor="middle" font-weight="normal" font-family='"Liberation Sans","Noto Sans CJK SC",sans-serif'>3</text>
<circle cx="840.5" cy="179" r="2.35" fill="none" stroke="#fff" stroke-width="1.15"/>
<text x="840.5" y="179.95" font-size="2.7" fill="#fff" text-anchor="middle" font-weight="normal" font-family='"Liberation Sans","Noto Sans CJK SC",sans-serif'>4</text>
<circle cx="840.5" cy="187.6" r="2.35" fill="none" stroke="#fff" stroke-width="1.15"/>
<text x="840.5" y="188.55" font-size="2.7" fill="#fff" text-anchor="middle" font-weight="normal" font-family='"Liberation Sans","Noto Sans CJK SC",sans-serif'>5</text>
<circle cx="840.5" cy="197.7" r="2.35" fill="none" stroke="#fff" stroke-width="1.15"/>
<text x="840.5" y="198.65" font-size="2.7" fill="#fff" text-anchor="middle" font-weight="normal" font-family='"Liberation Sans","Noto Sans CJK SC",sans-serif'>6</text>
<circle cx="840.5" cy="207" r="2.35" fill="none" stroke="#fff" stroke-width="1.15"/>
<text x="840.5" y="207.95" font-size="2.7" fill="#fff" text-anchor="middle" font-weight="normal" font-family='"Liberation Sans","Noto Sans CJK SC",sans-serif'>7</text>
<circle cx="840.5" cy="216" r="2.35" fill="none" stroke="#fff" stroke-width="1.15"/>
<text x="840.5" y="216.95" font-size="2.7" fill="#fff" text-anchor="middle" font-weight="normal" font-family='"Liberation Sans","Noto Sans CJK SC",sans-serif'>8</text>
<circle cx="840.5" cy="234.9" r="2.35" fill="none" stroke="#fff" stroke-width="1.15"/>
<text x="840.5" y="235.85" font-size="2.7" fill="#fff" text-anchor="middle" font-weight="normal" font-family='"Liberation Sans","Noto Sans CJK SC",sans-serif'>9</text>
<circle cx="840.5" cy="244.2" r="2.35" fill="none" stroke="#fff" stroke-width="1.15"/>
<text x="840.5" y="245.15" font-size="2.7" fill="#fff" text-anchor="middle" font-weight="normal" font-family='"Liberation Sans","Noto Sans CJK SC",sans-serif'>0</text>
<circle cx="840.5" cy="253" r="2.35" fill="none" stroke="#fff" stroke-width="1.15"/>
<text x="840.5" y="253.95" font-size="2.7" fill="#fff" text-anchor="middle" font-weight="normal" font-family='"Liberation Sans","Noto Sans CJK SC",sans-serif'>A</text>
<circle cx="840.5" cy="260.9" r="2.35" fill="none" stroke="#fff" stroke-width="1.15"/>
<text x="840.5" y="261.85" font-size="2.7" fill="#fff" text-anchor="middle" font-weight="normal" font-family='"Liberation Sans","Noto Sans CJK SC",sans-serif'>B</text>
<circle cx="840.5" cy="268.8" r="2.35" fill="none" stroke="#fff" stroke-width="1.15"/>
<text x="840.5" y="269.75" font-size="2.7" fill="#fff" text-anchor="middle" font-weight="normal" font-family='"Liberation Sans","Noto Sans CJK SC",sans-serif'>C</text>
<circle cx="840.5" cy="275" r="2.35" fill="none" stroke="#fff" stroke-width="1.15"/>
<text x="840.5" y="275.95" font-size="2.7" fill="#fff" text-anchor="middle" font-weight="normal" font-family='"Liberation Sans","Noto Sans CJK SC",sans-serif'>D</text>
<circle cx="840.5" cy="290.1" r="2.35" fill="none" stroke="#fff" stroke-width="1.15"/>
<text x="840.5" y="291.05" font-size="2.7" fill="#fff" text-anchor="middle" font-weight="normal" font-family='"Liberation Sans","Noto Sans CJK SC",sans-serif'>E</text>
<circle cx="858.6" cy="308.1" r="2.35" fill="none" stroke="#fff" stroke-width="1.15"/>
<text x="858.6" y="309.05" font-size="2.7" fill="#fff" text-anchor="middle" font-weight="normal" font-family='"Liberation Sans","Noto Sans CJK SC",sans-serif'>F</text>
<circle cx="873.3" cy="308.1" r="2.35" fill="none" stroke="#fff" stroke-width="1.15"/>
<text x="873.3" y="309.05" font-size="2.7" fill="#fff" text-anchor="middle" font-weight="normal" font-family='"Liberation Sans","Noto Sans CJK SC",sans-serif'>G</text>
<circle cx="880" cy="308.1" r="2.35" fill="none" stroke="#fff" stroke-width="1.15"/>
<text x="880" y="309.05" font-size="2.7" fill="#fff" text-anchor="middle" font-weight="normal" font-family='"Liberation Sans","Noto Sans CJK SC",sans-serif'>H</text>
<circle cx="886.5" cy="308.1" r="2.35" fill="none" stroke="#fff" stroke-width="1.15"/>
<text x="886.5" y="309.05" font-size="2.7" fill="#fff" text-anchor="middle" font-weight="normal" font-family='"Liberation Sans","Noto Sans CJK SC",sans-serif'>1</text>
<circle cx="892.8" cy="308.1" r="2.35" fill="none" stroke="#fff" stroke-width="1.15"/>
<text x="892.8" y="309.05" font-size="2.7" fill="#fff" text-anchor="middle" font-weight="normal" font-family='"Liberation Sans","Noto Sans CJK SC",sans-serif'>2</text>
<circle cx="899" cy="308.1" r="2.35" fill="none" stroke="#fff" stroke-width="1.15"/>
<text x="899" y="309.05" font-size="2.7" fill="#fff" text-anchor="middle" font-weight="normal" font-family='"Liberation Sans","Noto Sans CJK SC",sans-serif'>3</text>
<circle cx="914.8" cy="308.1" r="2.35" fill="none" stroke="#fff" stroke-width="1.15"/>
<text x="914.8" y="309.05" font-size="2.7" fill="#fff" text-anchor="middle" font-weight="normal" font-family='"Liberation Sans","Noto Sans CJK SC",sans-serif'>4</text>
<circle cx="933.7" cy="308.1" r="2.35" fill="none" stroke="#fff" stroke-width="1.15"/>
<text x="933.7" y="309.05" font-size="2.7" fill="#fff" text-anchor="middle" font-weight="normal" font-family='"Liberation Sans","Noto Sans CJK SC",sans-serif'>5</text>
<circle cx="952.1" cy="308.1" r="2.35" fill="none" stroke="#fff" stroke-width="1.15"/>
<text x="952.1" y="309.05" font-size="2.7" fill="#fff" text-anchor="middle" font-weight="normal" font-family='"Liberation Sans","Noto Sans CJK SC",sans-serif'>6</text>
<circle cx="961.6" cy="308.1" r="2.35" fill="none" stroke="#fff" stroke-width="1.15"/>
<text x="961.6" y="309.05" font-size="2.7" fill="#fff" text-anchor="middle" font-weight="normal" font-family='"Liberation Sans","Noto Sans CJK SC",sans-serif'>7</text>
<circle cx="970.9" cy="308.1" r="2.35" fill="none" stroke="#fff" stroke-width="1.15"/>
<text x="970.9" y="309.05" font-size="2.7" fill="#fff" text-anchor="middle" font-weight="normal" font-family='"Liberation Sans","Noto Sans CJK SC",sans-serif'>8</text>
<circle cx="979.7" cy="308.1" r="2.35" fill="none" stroke="#fff" stroke-width="1.15"/>
<text x="979.7" y="309.05" font-size="2.7" fill="#fff" text-anchor="middle" font-weight="normal" font-family='"Liberation Sans","Noto Sans CJK SC",sans-serif'>9</text>
<circle cx="989" cy="308.1" r="2.35" fill="none" stroke="#fff" stroke-width="1.15"/>
<text x="989" y="309.05" font-size="2.7" fill="#fff" text-anchor="middle" font-weight="normal" font-family='"Liberation Sans","Noto Sans CJK SC",sans-serif'>0</text>
<circle cx="1007.1" cy="252.9" r="2.35" fill="none" stroke="#fff" stroke-width="1.15"/>
<text x="1007.1" y="253.85" font-size="2.7" fill="#fff" text-anchor="middle" font-weight="normal" font-family='"Liberation Sans","Noto Sans CJK SC",sans-serif'>A</text>
<circle cx="1007.1" cy="262.9" r="2.35" fill="none" stroke="#fff" stroke-width="1.15"/>
<text x="1007.1" y="263.85" font-size="2.7" fill="#fff" text-anchor="middle" font-weight="normal" font-family='"Liberation Sans","Noto Sans CJK SC",sans-serif'>B</text>
<circle cx="1007.1" cy="268.5" r="2.35" fill="none" stroke="#fff" stroke-width="1.15"/>
<text x="1007.1" y="269.45" font-size="2.7" fill="#fff" text-anchor="middle" font-weight="normal" font-family='"Liberation Sans","Noto Sans CJK SC",sans-serif'>C</text>
<circle cx="1007.1" cy="274.9" r="2.35" fill="none" stroke="#fff" stroke-width="1.15"/>
<text x="1007.1" y="275.85" font-size="2.7" fill="#fff" text-anchor="middle" font-weight="normal" font-family='"Liberation Sans","Noto Sans CJK SC",sans-serif'>D</text>
<circle cx="1007.1" cy="290" r="2.35" fill="none" stroke="#fff" stroke-width="1.15"/>
<text x="1007.1" y="290.95" font-size="2.7" fill="#fff" text-anchor="middle" font-weight="normal" font-family='"Liberation Sans","Noto Sans CJK SC",sans-serif'>E</text>
<path fill="#8fe8b4" d="M859 183h14v9h-14z"/>
<path fill="#fff" d="M862 180h7v2h-7zM862 193h7v2h-7z"/>
<path fill="#00ffff" d="M883 245h13v5h-13z"/>
<line x1="885.1" y1="247.3" x2="894.1" y2="247.3" stroke="#000" stroke-width="1" stroke-dasharray="1.4 1.2"/>
<path fill="#ffff00" d="M886 236h9v7h-9z"/>
<path fill="#fff" d="M882 237h3v5h-3z"/>
<path fill="#0000ff" d="M883 238h1v3h-1z"/>
<path fill="#00ff00" d="M858 178h16v2h-16z"/>
<path fill="#ff00ff" d="M874 178h5v2h-5z"/>
<path fill="#00ff00" d="M880 178h17v2h-17z"/>
<path fill="#ff00ff" d="M895 179h1v57h-1z"/>
<path fill="#00ff00" d="M895 178h1v3h-1zM895 196h1v4h-1zM895 214h1v4h-1zM895 233h1v4h-1z"/>
<path fill="#ff00ff" d="M858 179h1v74h-1z"/>
<path fill="#00ff00" d="M857 178h2v3h-2zM857 186h2v4h-2zM857 196h2v4h-2zM857 214h2v4h-2zM857 233h2v4h-2zM857 252h2v3h-2zM873 180h1v73h-1zM880 180h2v65h-2zM858 196h16v2h-16zM858 252h17v2h-17zM881 235h6v1h-6zM859 263h15v2h-15zM873 253h2v11h-2zM858 253h1v6h-1zM881 242h16v2h-16z"/>
<path fill="#fff" d="M865 255h1v7h-1zM877 256h6v2h-6zM871 267h3v1h-3zM877 266h4v2h-4zM863 266h5v1h-5zM877 181h1v72h-1z"/>
<path fill="#00ff00" d="M858 194h16v2h-16zM881 194h15v2h-15zM870 180h2v15h-2z"/>
<path d="M124 237.2 A4.2 4.8 0 0 1 124 246.6" fill="none" stroke="#f4e060" stroke-width="1.2" transform="translate(772.6,-3.1)"/>
<path fill="#fff" d="M897 236h3v5h-3z"/>
<path fill="#000" d="M898 237h1v3h-1z"/>
<path fill="#ff00ff" d="M896 252h94v2h-94z"/>
<path fill="#00ff00" d="M893 252h6v2h-6zM911 252h6v2h-6zM930 252h6v2h-6zM949 252h6v2h-6zM968 252h6v2h-6zM976 252h6v2h-6zM986 252h6v2h-6z"/>
<path fill="#ff00ff" d="M896 289h94v2h-94z"/>
<path fill="#00ff00" d="M893 289h6v2h-6zM911 289h6v2h-6zM930 289h6v2h-6zM949 289h6v2h-6zM968 289h6v2h-6zM976 289h6v2h-6zM986 289h6v2h-6zM895 253h2v37h-2zM988 253h2v37h-2zM951 253h3v37h-3zM970 253h1v37h-1zM978 253h2v16h-2zM953 267h37v2h-37zM970 274h20v1h-20z"/>
<path fill="#e8e884" d="M915 255h2v12h-2zM915 276h2v10h-2zM918 255h2v12h-2zM918 276h2v10h-2zM921 255h2v12h-2zM921 276h2v10h-2zM924 255h2v12h-2zM924 276h2v10h-2zM928 255h2v12h-2zM928 276h2v10h-2zM931 255h2v12h-2zM931 276h2v10h-2zM934 255h2v12h-2zM934 276h2v10h-2zM937 255h2v12h-2zM937 276h2v10h-2zM940 255h2v12h-2zM940 276h2v10h-2zM943 255h2v12h-2zM943 276h2v10h-2zM946 255h2v12h-2zM946 276h2v10h-2zM949 255h2v12h-2zM949 276h2v10h-2z"/>
<path fill="#555" d="M925 257h1v1h-1zM925 259h1v1h-1zM925 262h1v1h-1zM925 264h1v1h-1zM925 279h1v1h-1zM925 281h1v1h-1zM925 284h1v1h-1zM928 257h1v1h-1zM928 259h1v1h-1zM928 262h1v1h-1zM928 264h1v1h-1zM928 279h1v1h-1zM928 281h1v1h-1zM928 284h1v1h-1zM931 257h1v1h-1zM931 259h1v1h-1zM931 262h1v1h-1zM931 264h1v1h-1zM931 279h1v1h-1zM931 281h1v1h-1zM931 284h1v1h-1zM934 257h1v1h-1zM934 259h1v1h-1zM934 262h1v1h-1zM934 264h1v1h-1zM934 279h1v1h-1zM934 281h1v1h-1zM934 284h1v1h-1zM937 257h1v1h-1zM937 259h1v1h-1zM937 262h1v1h-1zM937 264h1v1h-1zM937 279h1v1h-1zM937 281h1v1h-1zM937 284h1v1h-1zM940 257h1v1h-1zM940 259h1v1h-1zM940 262h1v1h-1zM940 264h1v1h-1zM940 279h1v1h-1zM940 281h1v1h-1zM940 284h1v1h-1zM944 257h1v1h-1zM944 259h1v1h-1zM944 262h1v1h-1zM944 264h1v1h-1zM944 279h1v1h-1zM944 281h1v1h-1zM944 284h1v1h-1zM947 257h1v1h-1zM947 259h1v1h-1zM947 262h1v1h-1zM947 264h1v1h-1zM947 279h1v1h-1zM947 281h1v1h-1zM947 284h1v1h-1zM950 257h1v1h-1zM950 259h1v1h-1zM950 262h1v1h-1zM950 264h1v1h-1zM950 279h1v1h-1zM950 281h1v1h-1zM950 284h1v1h-1z"/>
<path fill="#8fe8b4" d="M957 254h10v12h-10z"/>
<path fill="#ffff00" d="M981 257h6v10h-6z"/>
<path fill="#fff" d="M954 255h2v5h-2zM968 255h2v6h-2zM898 260h8v2h-8zM898 279h8v2h-8z"/>
<rect x="902.1" y="269.9" width="2.2" height="3" fill="none" stroke="#e8e884" stroke-width="1"/>
<path fill="#fff" d="M925 269h8v2h-8zM958 276h2v10h-2zM977 276h1v11h-1z"/>
<path fill="#00ff00" d="M884 274h2v15h-2zM885 274h11v1h-11zM885 288h11v2h-11z"/>
<path fill="#fff" d="M889 277h3v9h-3z"/>
<path fill="#ff0000" d="M914 253h1v52h-1zM933 253h1v52h-1zM952 253h1v52h-1zM961 253h1v52h-1zM970 253h1v52h-1zM979 253h1v52h-1zM953 264h37v1h-37zM897 268h93v1h-93zM914 275h76v1h-76z"/>
<path fill="#00ffff" d="M913 267h2v2h-2zM913 274h2v2h-2zM932 267h2v2h-2zM932 274h2v2h-2z"/>
<path fill="#0000ff" d="M894 255h2v3h-2z"/>
<path fill="#fff" d="M896 255h1v1h-1z"/>
<path fill="#0000ff" d="M952 261h2v3h-2z"/>
<path fill="#fff" d="M954 261h1v1h-1z"/>
<path fill="#0000ff" d="M952 269h2v3h-2z"/>
<path fill="#fff" d="M954 269h1v1h-1z"/>
<path fill="#0000ff" d="M952 281h2v3h-2z"/>
<path fill="#fff" d="M954 281h1v1h-1z"/>
<path fill="#0000ff" d="M968 261h2v3h-2z"/>
<path fill="#fff" d="M970 261h1v1h-1z"/>
<path fill="#0000ff" d="M972 266h2v3h-2z"/>
<path fill="#fff" d="M974 266h1v1h-1z"/>
<path fill="#0000ff" d="M973 274h2v3h-2z"/>
<path fill="#fff" d="M975 274h1v1h-1z"/>
<path fill="#0000ff" d="M980 269h2v3h-2z"/>
<path fill="#fff" d="M982 269h1v1h-1z"/>
<path d="M85.4 255.6 A37.8 37.8 0 0 0 123.1 293.4" fill="none" stroke="#f4e060" stroke-width="1.3" transform="translate(772.6,-3.1)"/>
<path d="M86.6 255.6 A36.6 36.6 0 0 0 104 289" fill="none" stroke="#fff" stroke-width="1" transform="translate(772.6,-3.1)"/>
<path fill="#00ff00" d="M883 275h2v15h-2zM884 289h12v2h-12z"/>
<path fill="#fff" d="M888 278h1v9h-1z"/>
<g transform="translate(865.6,270.7) rotate(43)"><rect x="0" y="-2" width="21.5" height="4" fill="#e8e070"/><rect x="3.0" y="-2" width="1.1" height="4" fill="#000"/><rect x="6.6" y="-2" width="1.1" height="4" fill="#000"/><rect x="10.2" y="-2" width="1.1" height="4" fill="#000"/><rect x="13.8" y="-2" width="1.1" height="4" fill="#000"/><rect x="17.4" y="-2" width="1.1" height="4" fill="#000"/></g>
<circle cx="880.5" cy="269.1" r="2.6" fill="none" stroke="#e8e070" stroke-width="1.6"/>
<path fill="#00ffff" d="M857 178h2v2h-2zM857 197h2v2h-2zM857 215h2v2h-2zM857 234h2v2h-2zM857 252h2v2h-2zM873 178h2v2h-2zM873 197h2v2h-2zM873 215h2v2h-2zM873 234h2v2h-2zM873 252h2v2h-2zM880 178h2v2h-2zM880 197h2v2h-2zM880 215h2v2h-2zM880 234h2v2h-2zM895 178h2v2h-2zM895 197h2v2h-2zM895 215h2v2h-2zM895 234h2v2h-2z"/>
<path fill="#fff" d="M898 292h1v10h-1zM914 292h1v10h-1zM933 292h1v10h-1zM952 292h1v10h-1zM961 292h1v10h-1zM970 292h1v10h-1zM979 292h1v10h-1zM988 292h1v10h-1z"/>
<path fill="#00ffff" d="M872 260h2v2h-2zM884 274h2v2h-2zM872 281h2v2h-2zM884 287h2v2h-2zM867 272h2v2h-2z"/>
<path fill="#0000ff" d="M868 180h2v3h-2z"/>
<path fill="#fff" d="M870 180h1v1h-1z"/>
<path fill="#0000ff" d="M868 194h2v3h-2z"/>
<path fill="#fff" d="M870 194h1v1h-1z"/>
<path fill="#0000ff" d="M874 200h2v3h-2z"/>
<path fill="#fff" d="M876 200h1v1h-1z"/>
<path fill="#0000ff" d="M877 200h2v3h-2z"/>
<path fill="#fff" d="M879 200h1v1h-1z"/>
<path fill="#0000ff" d="M874 223h2v3h-2z"/>
<path fill="#fff" d="M876 223h1v1h-1z"/>
<path fill="#0000ff" d="M878 228h2v3h-2z"/>
<path fill="#fff" d="M879 228h1v1h-1z"/>
<path fill="#0000ff" d="M874 247h2v3h-2z"/>
<path fill="#fff" d="M876 247h1v1h-1z"/>
<path fill="#0000ff" d="M892 256h2v3h-2z"/>
<path fill="#fff" d="M894 256h1v1h-1z"/>
<path fill="#0000ff" d="M871 254h2v3h-2z"/>
<path fill="#fff" d="M872 254h1v1h-1zM865 208h1v6h-1zM865 239h1v6h-1zM864 223h5v2h-5zM864 256h4v2h-4zM887 189h2v7h-2zM887 198h2v2h-2zM887 203h1v8h-1zM887 221h1v8h-1z"/>
<line x1="860.6" y1="185.3" x2="870.6" y2="185.3" stroke="#000" stroke-width="0.9" stroke-dasharray="1.5 1"/>
<line x1="860.6" y1="189.5" x2="869.6" y2="189.5" stroke="#000" stroke-width="0.9" stroke-dasharray="1.2 1"/>
<rect x="883.1" y="251.4" width="13" height="7.5" fill="none" stroke="#fff" stroke-width="0.9"/>
<line x1="883.6" y1="253.3" x2="893.6" y2="253.3" stroke="#ff0000" stroke-width="1" stroke-dasharray="2 1"/>
<path fill="#fff" d="M877 256h18v1h-18z"/>
<text x="914.5" y="324.5" font-size="2.8" fill="#fff" text-anchor="middle" font-weight="bold" font-family='"Liberation Sans","Noto Sans CJK SC",sans-serif'>顶层平面</text>
<path fill="#fff" d="M909 323h11v1h-11z"/>
<path fill="#00ff00" d="M649 60h90v1h-90zM649 61h1v1h-1z"/>
<path fill="#fff" d="M648 62h91v2h-91z"/>
<path fill="#e0f086" d="M672 64h12v6h-12z"/>
<line x1="672.7" y1="68.5" x2="683.7" y2="68.5" stroke="#000" stroke-width="0.9" stroke-dasharray="2.1 1.1"/>
<line x1="672.7" y1="66.5" x2="683.7" y2="66.5" stroke="#000" stroke-width="0.9" stroke-dasharray="2.1 1.1"/>
<line x1="672.7" y1="64.5" x2="683.7" y2="64.5" stroke="#000" stroke-width="0.9" stroke-dasharray="2.1 1.1"/>
<path fill="#e0f086" d="M691 64h12v6h-12z"/>
<line x1="691.7" y1="68.5" x2="702.7" y2="68.5" stroke="#000" stroke-width="0.9" stroke-dasharray="2.1 1.1"/>
<line x1="691.7" y1="66.5" x2="702.7" y2="66.5" stroke="#000" stroke-width="0.9" stroke-dasharray="2.1 1.1"/>
<line x1="691.7" y1="64.5" x2="702.7" y2="64.5" stroke="#000" stroke-width="0.9" stroke-dasharray="2.1 1.1"/>
<path fill="#e0f086" d="M709 64h12v6h-12z"/>
<line x1="709.7" y1="68.5" x2="720.7" y2="68.5" stroke="#000" stroke-width="0.9" stroke-dasharray="2.1 1.1"/>
<line x1="709.7" y1="66.5" x2="720.7" y2="66.5" stroke="#000" stroke-width="0.9" stroke-dasharray="2.1 1.1"/>
<line x1="709.7" y1="64.5" x2="720.7" y2="64.5" stroke="#000" stroke-width="0.9" stroke-dasharray="2.1 1.1"/>
<path fill="#e0f086" d="M728 64h10v6h-10z"/>
<line x1="728.7" y1="68.5" x2="737.7" y2="68.5" stroke="#000" stroke-width="0.9" stroke-dasharray="2.1 1.1"/>
<line x1="728.7" y1="66.5" x2="737.7" y2="66.5" stroke="#000" stroke-width="0.9" stroke-dasharray="2.1 1.1"/>
<line x1="728.7" y1="64.5" x2="737.7" y2="64.5" stroke="#000" stroke-width="0.9" stroke-dasharray="2.1 1.1"/>
<path fill="#e0f086" d="M652 64h6v6h-6z"/>
<path fill="#000" opacity="0.9" d="M654 64h1v5h-1zM656 64h1v5h-1z"/>
<path fill="#e0f086" d="M662 64h5v6h-5z"/>
<path fill="#000" opacity="0.9" d="M663 64h1v5h-1zM665 64h1v5h-1z"/>
<path fill="#e0f086" d="M672 73h12v6h-12z"/>
<line x1="672.7" y1="77.5" x2="683.7" y2="77.5" stroke="#000" stroke-width="0.9" stroke-dasharray="2.1 1.1"/>
<line x1="672.7" y1="75.5" x2="683.7" y2="75.5" stroke="#000" stroke-width="0.9" stroke-dasharray="2.1 1.1"/>
<path fill="#e0f086" d="M691 73h12v6h-12z"/>
<line x1="691.7" y1="77.5" x2="702.7" y2="77.5" stroke="#000" stroke-width="0.9" stroke-dasharray="2.1 1.1"/>
<line x1="691.7" y1="75.5" x2="702.7" y2="75.5" stroke="#000" stroke-width="0.9" stroke-dasharray="2.1 1.1"/>
<path fill="#e0f086" d="M709 73h12v6h-12z"/>
<line x1="709.7" y1="77.5" x2="720.7" y2="77.5" stroke="#000" stroke-width="0.9" stroke-dasharray="2.1 1.1"/>
<line x1="709.7" y1="75.5" x2="720.7" y2="75.5" stroke="#000" stroke-width="0.9" stroke-dasharray="2.1 1.1"/>
<path fill="#e0f086" d="M728 73h10v6h-10z"/>
<line x1="728.7" y1="77.5" x2="737.7" y2="77.5" stroke="#000" stroke-width="0.9" stroke-dasharray="2.1 1.1"/>
<line x1="728.7" y1="75.5" x2="737.7" y2="75.5" stroke="#000" stroke-width="0.9" stroke-dasharray="2.1 1.1"/>
<path fill="#e0f086" d="M652 73h6v6h-6z"/>
<path fill="#000" opacity="0.9" d="M654 74h1v5h-1zM656 74h1v5h-1z"/>
<path fill="#e0f086" d="M662 73h5v6h-5z"/>
<path fill="#000" opacity="0.9" d="M663 74h1v5h-1zM665 74h1v5h-1z"/>
<path fill="#e0f086" d="M672 83h12v5h-12z"/>
<line x1="672.7" y1="86.5" x2="683.7" y2="86.5" stroke="#000" stroke-width="0.9" stroke-dasharray="2.1 1.1"/>
<line x1="672.7" y1="84.5" x2="683.7" y2="84.5" stroke="#000" stroke-width="0.9" stroke-dasharray="2.1 1.1"/>
<path fill="#e0f086" d="M691 83h12v5h-12z"/>
<line x1="691.7" y1="86.5" x2="702.7" y2="86.5" stroke="#000" stroke-width="0.9" stroke-dasharray="2.1 1.1"/>
<line x1="691.7" y1="84.5" x2="702.7" y2="84.5" stroke="#000" stroke-width="0.9" stroke-dasharray="2.1 1.1"/>
<path fill="#e0f086" d="M709 83h12v5h-12z"/>
<line x1="709.7" y1="86.5" x2="720.7" y2="86.5" stroke="#000" stroke-width="0.9" stroke-dasharray="2.1 1.1"/>
<line x1="709.7" y1="84.5" x2="720.7" y2="84.5" stroke="#000" stroke-width="0.9" stroke-dasharray="2.1 1.1"/>
<path fill="#e0f086" d="M728 83h10v5h-10z"/>
<line x1="728.7" y1="86.5" x2="737.7" y2="86.5" stroke="#000" stroke-width="0.9" stroke-dasharray="2.1 1.1"/>
<line x1="728.7" y1="84.5" x2="737.7" y2="84.5" stroke="#000" stroke-width="0.9" stroke-dasharray="2.1 1.1"/>
<path fill="#e0f086" d="M652 83h6v5h-6z"/>
<path fill="#000" opacity="0.9" d="M654 83h1v5h-1zM656 83h1v5h-1z"/>
<path fill="#e0f086" d="M662 83h5v5h-5z"/>
<path fill="#000" opacity="0.9" d="M663 83h1v5h-1zM665 83h1v5h-1z"/>
<path fill="#e0f086" d="M672 92h12v6h-12z"/>
<line x1="672.7" y1="96.5" x2="683.7" y2="96.5" stroke="#000" stroke-width="0.9" stroke-dasharray="2.1 1.1"/>
<line x1="672.7" y1="94.5" x2="683.7" y2="94.5" stroke="#000" stroke-width="0.9" stroke-dasharray="2.1 1.1"/>
<path fill="#e0f086" d="M691 92h12v6h-12z"/>
<line x1="691.7" y1="96.5" x2="702.7" y2="96.5" stroke="#000" stroke-width="0.9" stroke-dasharray="2.1 1.1"/>
<line x1="691.7" y1="94.5" x2="702.7" y2="94.5" stroke="#000" stroke-width="0.9" stroke-dasharray="2.1 1.1"/>
<path fill="#e0f086" d="M709 92h12v6h-12z"/>
<line x1="709.7" y1="96.5" x2="720.7" y2="96.5" stroke="#000" stroke-width="0.9" stroke-dasharray="2.1 1.1"/>
<line x1="709.7" y1="94.5" x2="720.7" y2="94.5" stroke="#000" stroke-width="0.9" stroke-dasharray="2.1 1.1"/>
<path fill="#e0f086" d="M728 92h10v6h-10z"/>
<line x1="728.7" y1="96.5" x2="737.7" y2="96.5" stroke="#000" stroke-width="0.9" stroke-dasharray="2.1 1.1"/>
<line x1="728.7" y1="94.5" x2="737.7" y2="94.5" stroke="#000" stroke-width="0.9" stroke-dasharray="2.1 1.1"/>
<path fill="#e0f086" d="M652 92h6v6h-6z"/>
<path fill="#000" opacity="0.9" d="M654 92h1v5h-1zM656 92h1v5h-1z"/>
<path fill="#e0f086" d="M662 92h5v6h-5z"/>
<path fill="#000" opacity="0.9" d="M663 92h1v5h-1zM665 92h1v5h-1z"/>
<path fill="#e0f086" d="M672 101h12v6h-12z"/>
<line x1="672.7" y1="105.5" x2="683.7" y2="105.5" stroke="#000" stroke-width="0.9" stroke-dasharray="2.1 1.1"/>
<line x1="672.7" y1="103.5" x2="683.7" y2="103.5" stroke="#000" stroke-width="0.9" stroke-dasharray="2.1 1.1"/>
<path fill="#e0f086" d="M691 101h12v6h-12z"/>
<line x1="691.7" y1="105.5" x2="702.7" y2="105.5" stroke="#000" stroke-width="0.9" stroke-dasharray="2.1 1.1"/>
<line x1="691.7" y1="103.5" x2="702.7" y2="103.5" stroke="#000" stroke-width="0.9" stroke-dasharray="2.1 1.1"/>
<path fill="#e0f086" d="M709 101h12v6h-12z"/>
<line x1="709.7" y1="105.5" x2="720.7" y2="105.5" stroke="#000" stroke-width="0.9" stroke-dasharray="2.1 1.1"/>
<line x1="709.7" y1="103.5" x2="720.7" y2="103.5" stroke="#000" stroke-width="0.9" stroke-dasharray="2.1 1.1"/>
<path fill="#e0f086" d="M728 101h10v6h-10z"/>
<line x1="728.7" y1="105.5" x2="737.7" y2="105.5" stroke="#000" stroke-width="0.9" stroke-dasharray="2.1 1.1"/>
<line x1="728.7" y1="103.5" x2="737.7" y2="103.5" stroke="#000" stroke-width="0.9" stroke-dasharray="2.1 1.1"/>
<path fill="#e0f086" d="M652 101h6v6h-6z"/>
<path fill="#000" opacity="0.9" d="M654 102h1v5h-1zM656 102h1v5h-1z"/>
<path fill="#e0f086" d="M662 101h5v6h-5z"/>
<path fill="#000" opacity="0.9" d="M663 102h1v5h-1zM665 102h1v5h-1z"/>
<path fill="#e0f086" d="M672 111h12v6h-12z"/>
<line x1="672.7" y1="115.5" x2="683.7" y2="115.5" stroke="#000" stroke-width="0.9" stroke-dasharray="2.1 1.1"/>
<line x1="672.7" y1="113.5" x2="683.7" y2="113.5" stroke="#000" stroke-width="0.9" stroke-dasharray="2.1 1.1"/>
<path fill="#e0f086" d="M691 111h12v6h-12z"/>
<line x1="691.7" y1="115.5" x2="702.7" y2="115.5" stroke="#000" stroke-width="0.9" stroke-dasharray="2.1 1.1"/>
<line x1="691.7" y1="113.5" x2="702.7" y2="113.5" stroke="#000" stroke-width="0.9" stroke-dasharray="2.1 1.1"/>
<path fill="#e0f086" d="M709 111h12v6h-12z"/>
<line x1="709.7" y1="115.5" x2="720.7" y2="115.5" stroke="#000" stroke-width="0.9" stroke-dasharray="2.1 1.1"/>
<line x1="709.7" y1="113.5" x2="720.7" y2="113.5" stroke="#000" stroke-width="0.9" stroke-dasharray="2.1 1.1"/>
<path fill="#e0f086" d="M728 111h10v6h-10z"/>
<line x1="728.7" y1="115.5" x2="737.7" y2="115.5" stroke="#000" stroke-width="0.9" stroke-dasharray="2.1 1.1"/>
<line x1="728.7" y1="113.5" x2="737.7" y2="113.5" stroke="#000" stroke-width="0.9" stroke-dasharray="2.1 1.1"/>
<path fill="#e0f086" d="M652 111h6v6h-6z"/>
<path fill="#000" opacity="0.9" d="M654 111h1v5h-1zM656 111h1v5h-1z"/>
<path fill="#e0f086" d="M662 111h5v6h-5z"/>
<path fill="#000" opacity="0.9" d="M663 111h1v5h-1zM665 111h1v5h-1z"/>
<path fill="#e0f086" d="M672 120h12v6h-12z"/>
<line x1="672.7" y1="124.5" x2="683.7" y2="124.5" stroke="#000" stroke-width="0.9" stroke-dasharray="2.1 1.1"/>
<line x1="672.7" y1="122.5" x2="683.7" y2="122.5" stroke="#000" stroke-width="0.9" stroke-dasharray="2.1 1.1"/>
<path fill="#e0f086" d="M691 120h12v6h-12z"/>
<line x1="691.7" y1="124.5" x2="702.7" y2="124.5" stroke="#000" stroke-width="0.9" stroke-dasharray="2.1 1.1"/>
<line x1="691.7" y1="122.5" x2="702.7" y2="122.5" stroke="#000" stroke-width="0.9" stroke-dasharray="2.1 1.1"/>
<path fill="#e0f086" d="M709 120h12v6h-12z"/>
<line x1="709.7" y1="124.5" x2="720.7" y2="124.5" stroke="#000" stroke-width="0.9" stroke-dasharray="2.1 1.1"/>
<line x1="709.7" y1="122.5" x2="720.7" y2="122.5" stroke="#000" stroke-width="0.9" stroke-dasharray="2.1 1.1"/>
<path fill="#e0f086" d="M728 120h10v6h-10z"/>
<line x1="728.7" y1="124.5" x2="737.7" y2="124.5" stroke="#000" stroke-width="0.9" stroke-dasharray="2.1 1.1"/>
<line x1="728.7" y1="122.5" x2="737.7" y2="122.5" stroke="#000" stroke-width="0.9" stroke-dasharray="2.1 1.1"/>
<path fill="#e0f086" d="M652 120h6v6h-6z"/>
<path fill="#000" opacity="0.9" d="M654 121h1v5h-1zM656 121h1v5h-1z"/>
<path fill="#e0f086" d="M662 120h5v6h-5z"/>
<path fill="#000" opacity="0.9" d="M663 121h1v5h-1zM665 121h1v5h-1z"/>
<path fill="#e0f086" d="M672 130h12v8h-12z"/>
<line x1="672.7" y1="136.5" x2="683.7" y2="136.5" stroke="#000" stroke-width="0.9" stroke-dasharray="2.1 1.1"/>
<line x1="672.7" y1="134.5" x2="683.7" y2="134.5" stroke="#000" stroke-width="0.9" stroke-dasharray="2.1 1.1"/>
<path fill="#e0f086" d="M691 130h12v8h-12z"/>
<line x1="691.7" y1="136.5" x2="702.7" y2="136.5" stroke="#000" stroke-width="0.9" stroke-dasharray="2.1 1.1"/>
<line x1="691.7" y1="134.5" x2="702.7" y2="134.5" stroke="#000" stroke-width="0.9" stroke-dasharray="2.1 1.1"/>
<path fill="#e0f086" d="M709 130h12v8h-12z"/>
<line x1="709.7" y1="136.5" x2="720.7" y2="136.5" stroke="#000" stroke-width="0.9" stroke-dasharray="2.1 1.1"/>
<line x1="709.7" y1="134.5" x2="720.7" y2="134.5" stroke="#000" stroke-width="0.9" stroke-dasharray="2.1 1.1"/>
<path fill="#e0f086" d="M728 130h10v8h-10z"/>
<line x1="728.7" y1="136.5" x2="737.7" y2="136.5" stroke="#000" stroke-width="0.9" stroke-dasharray="2.1 1.1"/>
<line x1="728.7" y1="134.5" x2="737.7" y2="134.5" stroke="#000" stroke-width="0.9" stroke-dasharray="2.1 1.1"/>
<path fill="#e0f086" d="M652 130h6v8h-6z"/>
<path fill="#000" opacity="0.9" d="M654 130h1v8h-1zM656 130h1v8h-1z"/>
<path fill="#e0f086" d="M662 130h5v8h-5z"/>
<path fill="#000" opacity="0.9" d="M663 130h1v8h-1zM665 130h1v8h-1z"/>
<path fill="#fff" d="M650 70h89v1h-89zM650 79h89v1h-89zM650 88h89v1h-89zM650 98h89v1h-89zM650 107h89v1h-89zM650 117h89v1h-89zM650 126h89v1h-89zM649 63h1v77h-1zM658 63h1v77h-1zM661 63h1v77h-1zM667 63h1v77h-1zM671 63h1v77h-1zM685 63h1v77h-1zM690 63h1v77h-1zM703 63h1v77h-1zM708 63h1v77h-1zM721 63h1v77h-1zM727 63h1v77h-1zM738 63h1v77h-1z"/>
<path fill="#00ff00" d="M738 53h44v2h-44z"/>
<path fill="#e8e070" d="M738 55h1v84h-1z"/>
<path fill="#00ffff" d="M739 55h1v84h-1z"/>
<path fill="#d0d0d0" d="M739 55h43v1h-43zM739 63h43v1h-43zM739 72h43v1h-43zM739 81h43v1h-43zM739 90h43v2h-43zM739 100h43v1h-43zM739 109h43v1h-43zM739 118h43v1h-43zM739 127h43v2h-43zM739 138h43v2h-43z"/>
<path fill="#0000ff" d="M758 56h2v83h-2z"/>
<path fill="#00ff00" d="M765 56h1v83h-1z"/>
<path fill="#00ffff" d="M766 56h1v83h-1zM779 56h1v83h-1z"/>
<path fill="#00ff00" d="M780 61h2v3h-2z"/>
<path fill="#ff00ff" d="M780 65h1v5h-1z"/>
<path fill="#00ff00" d="M780 70h2v3h-2z"/>
<path fill="#ff00ff" d="M780 74h1v5h-1z"/>
<path fill="#00ff00" d="M780 79h2v3h-2z"/>
<path fill="#ff00ff" d="M780 83h1v5h-1z"/>
<path fill="#00ff00" d="M780 88h2v4h-2z"/>
<path fill="#ff00ff" d="M780 92h1v5h-1z"/>
<path fill="#00ff00" d="M780 98h2v3h-2z"/>
<path fill="#ff00ff" d="M780 102h1v5h-1z"/>
<path fill="#00ff00" d="M780 107h2v3h-2z"/>
<path fill="#ff00ff" d="M780 111h1v5h-1z"/>
<path fill="#00ff00" d="M780 116h2v3h-2z"/>
<path fill="#ff00ff" d="M780 120h1v5h-1z"/>
<path fill="#00ff00" d="M780 126h2v3h-2z"/>
<path fill="#ff00ff" d="M780 129h1v5h-1z"/>
<path fill="#00ff00" d="M780 55h2v3h-2zM780 137h2v3h-2z"/>
<path d="M743.5 69.3 L752.6 60.6" fill="none" stroke="#00ffff" stroke-width="1.3"/>
<path d="M746 68.7 L752 63" fill="none" stroke="#ffff00" stroke-width="1.3"/>
<path d="M743.5 67.5 L752.6 69" fill="none" stroke="#00ffff" stroke-width="1.3"/>
<path d="M740.5 65.5 L753 72.6" fill="none" stroke="#d0d0d0" stroke-width="1.1"/>
<path fill="#fff" d="M740 65h4v1h-4z"/>
<path d="M743.5 78.3 L752.6 69.6" fill="none" stroke="#00ffff" stroke-width="1.3"/>
<path d="M746 77.7 L752 72" fill="none" stroke="#ffff00" stroke-width="1.3"/>
<path d="M743.5 76.5 L752.6 78" fill="none" stroke="#00ffff" stroke-width="1.3"/>
<path d="M740.5 74.5 L753 81.6" fill="none" stroke="#d0d0d0" stroke-width="1.1"/>
<path fill="#fff" d="M740 74h4v1h-4z"/>
<path d="M743.5 87.45 L752.6 78.6" fill="none" stroke="#00ffff" stroke-width="1.3"/>
<path d="M746 86.85 L752 81" fill="none" stroke="#ffff00" stroke-width="1.3"/>
<path d="M743.5 85.65 L752.6 87.3" fill="none" stroke="#00ffff" stroke-width="1.3"/>
<path d="M740.5 83.65 L753 90.9" fill="none" stroke="#d0d0d0" stroke-width="1.1"/>
<path fill="#fff" d="M740 83h4v1h-4z"/>
<path d="M743.5 96.8 L752.6 87.9" fill="none" stroke="#00ffff" stroke-width="1.3"/>
<path d="M746 96.2 L752 90.3" fill="none" stroke="#ffff00" stroke-width="1.3"/>
<path d="M743.5 95 L752.6 96.7" fill="none" stroke="#00ffff" stroke-width="1.3"/>
<path d="M740.5 93 L753 100.3" fill="none" stroke="#d0d0d0" stroke-width="1.1"/>
<path fill="#fff" d="M740 92h4v1h-4z"/>
<path d="M743.5 106.15 L752.6 97.3" fill="none" stroke="#00ffff" stroke-width="1.3"/>
<path d="M746 105.55 L752 99.7" fill="none" stroke="#ffff00" stroke-width="1.3"/>
<path d="M743.5 104.35 L752.6 106" fill="none" stroke="#00ffff" stroke-width="1.3"/>
<path d="M740.5 102.35 L753 109.6" fill="none" stroke="#d0d0d0" stroke-width="1.1"/>
<path fill="#fff" d="M740 102h4v1h-4z"/>
<path d="M743.5 115.4 L752.6 106.6" fill="none" stroke="#00ffff" stroke-width="1.3"/>
<path d="M746 114.8 L752 109" fill="none" stroke="#ffff00" stroke-width="1.3"/>
<path d="M743.5 113.6 L752.6 115.2" fill="none" stroke="#00ffff" stroke-width="1.3"/>
<path d="M740.5 111.6 L753 118.8" fill="none" stroke="#d0d0d0" stroke-width="1.1"/>
<path fill="#fff" d="M740 111h4v1h-4z"/>
<path d="M743.5 124.6 L752.6 115.8" fill="none" stroke="#00ffff" stroke-width="1.3"/>
<path d="M746 124 L752 118.2" fill="none" stroke="#ffff00" stroke-width="1.3"/>
<path d="M743.5 122.8 L752.6 124.4" fill="none" stroke="#00ffff" stroke-width="1.3"/>
<path d="M740.5 120.8 L753 128" fill="none" stroke="#d0d0d0" stroke-width="1.1"/>
<path fill="#fff" d="M740 120h4v1h-4z"/>
<path d="M743.5 133.8 L752.6 125" fill="none" stroke="#00ffff" stroke-width="1.3"/>
<path d="M746 133.2 L752 127.4" fill="none" stroke="#ffff00" stroke-width="1.3"/>
<path d="M743.5 132 L752.6 133.6" fill="none" stroke="#00ffff" stroke-width="1.3"/>
<path d="M740.5 130 L753 137.2" fill="none" stroke="#d0d0d0" stroke-width="1.1"/>
<path fill="#fff" d="M740 130h4v1h-4z"/>
<path d="M743.5 58 L752.6 60.2" fill="none" stroke="#00ffff" stroke-width="1.2"/>
<path fill="#fff" d="M752 134h5v2h-5z"/>
<path d="M784 55.4 L786.5 55.4 L788.5 53.2" fill="none" stroke="#fff" stroke-width="0.9"/>
<path fill="#fff" d="M788 52h7v2h-7z"/>
<path d="M784 64.4 L786.5 64.4 L788.5 62.2" fill="none" stroke="#fff" stroke-width="0.9"/>
<path fill="#fff" d="M788 61h7v2h-7z"/>
<path d="M784 73.4 L786.5 73.4 L788.5 71.2" fill="none" stroke="#fff" stroke-width="0.9"/>
<path fill="#fff" d="M788 70h7v2h-7z"/>
<path d="M784 82.4 L786.5 82.4 L788.5 80.2" fill="none" stroke="#fff" stroke-width="0.9"/>
<path fill="#fff" d="M788 79h7v2h-7z"/>
<path d="M784 91.7 L786.5 91.7 L788.5 89.5" fill="none" stroke="#fff" stroke-width="0.9"/>
<path fill="#fff" d="M788 88h7v2h-7z"/>
<path d="M784 101.1 L786.5 101.1 L788.5 98.9" fill="none" stroke="#fff" stroke-width="0.9"/>
<path fill="#fff" d="M788 98h7v2h-7z"/>
<path d="M784 110.4 L786.5 110.4 L788.5 108.2" fill="none" stroke="#fff" stroke-width="0.9"/>
<path fill="#fff" d="M788 107h7v2h-7z"/>
<path d="M784 119.6 L786.5 119.6 L788.5 117.4" fill="none" stroke="#fff" stroke-width="0.9"/>
<path fill="#fff" d="M788 116h7v2h-7z"/>
<path d="M784 128.8 L786.5 128.8 L788.5 126.6" fill="none" stroke="#fff" stroke-width="0.9"/>
<path fill="#fff" d="M788 125h7v2h-7zM638 139h156v2h-156zM787 137h7v1h-7zM788 142h6v1h-6zM789 144h4v1h-4z"/>
<path fill="#ff0000" d="M650 140h1v12h-1zM780 140h1v12h-1z"/>
<path fill="#fff" d="M650 148h131v1h-131z"/>
<path fill="#fff" opacity="0.9" d="M650 141h1v8h-1zM780 141h1v8h-1z"/>
<path fill="#fff" d="M713 147h5v1h-5z"/>
<circle cx="650.2" cy="154.8" r="2.35" fill="none" stroke="#fff" stroke-width="1.15"/>
<text x="650.2" y="155.75" font-size="2.7" fill="#fff" text-anchor="middle" font-weight="normal" font-family='"Liberation Sans","Noto Sans CJK SC",sans-serif'>A</text>
<circle cx="780.6" cy="154.8" r="2.35" fill="none" stroke="#fff" stroke-width="1.15"/>
<text x="780.6" y="155.75" font-size="2.7" fill="#fff" text-anchor="middle" font-weight="normal" font-family='"Liberation Sans","Noto Sans CJK SC",sans-serif'>J</text>
<text x="714.5" y="159.8" font-size="2.8" fill="#fff" text-anchor="middle" font-weight="bold" font-family='"Liberation Sans","Noto Sans CJK SC",sans-serif'>1-1剖面</text>
<path fill="#fff" d="M710 158h9v1h-9z"/>
<path fill="#fff" opacity="0.9" d="M674 54h1v7h-1z"/>
<path fill="#fff" d="M674 53h6v2h-6z"/>
<path fill="#fff" opacity="0.9" d="M704 52h1v12h-1z"/>
<path fill="#fff" d="M705 52h7v2h-7z"/>
<path fill="#fff" opacity="0.9" d="M756 48h1v8h-1z"/>
<path fill="#fff" d="M756 48h9v2h-9z"/>
<line x1="752.5" y1="51" x2="755" y2="55.5" stroke="#fff" stroke-width="1.2"/>
<text x="645" y="62.8" font-size="3" fill="#fff" text-anchor="middle" font-weight="bold" font-family='"Liberation Sans","Noto Sans CJK SC",sans-serif'>E</text>
<path fill="#fff" d="M646 121h1v12h-1zM645 126h4v1h-4zM645 131h4v1h-4z"/>
<path fill="#f00" d="M725 138h1v1h-1zM691 100h1v1h-1zM658 71h1v1h-1zM680 83h1v1h-1zM723 75h1v1h-1zM652 135h1v1h-1zM696 74h1v1h-1zM698 65h1v1h-1zM696 137h1v1h-1zM726 116h1v1h-1zM673 91h1v1h-1zM665 122h1v1h-1zM697 122h1v1h-1zM679 80h1v1h-1zM721 138h1v1h-1zM725 124h1v1h-1zM722 119h1v1h-1zM670 102h1v1h-1zM681 65h1v1h-1zM652 84h1v1h-1zM673 116h1v1h-1zM734 97h1v1h-1zM732 138h1v1h-1zM734 91h1v1h-1zM669 80h1v1h-1zM667 79h1v1h-1zM705 131h1v1h-1zM724 99h1v1h-1zM707 124h1v1h-1zM657 113h1v1h-1zM730 122h1v1h-1zM716 99h1v1h-1zM666 123h1v1h-1zM679 124h1v1h-1zM736 93h1v1h-1zM685 135h1v1h-1z"/>
<path fill="#00ff00" d="M914 63h57v1h-57zM914 63h1v2h-1zM970 62h1v1h-1z"/>
<path fill="#fff" d="M914 65h57v2h-57z"/>
<path fill="#00ff00" d="M970 56h57v1h-57zM970 56h1v2h-1zM1026 56h1v3h-1z"/>
<path fill="#fff" d="M968 58h61v2h-61zM971 59h1v7h-1zM986 59h1v7h-1z"/>
<path fill="#e0f086" d="M918 67h13v7h-13z"/>
<line x1="918.7" y1="72.5" x2="930.7" y2="72.5" stroke="#000" stroke-width="0.9" stroke-dasharray="2.1 1.1"/>
<line x1="918.7" y1="70.5" x2="930.7" y2="70.5" stroke="#000" stroke-width="0.9" stroke-dasharray="2.1 1.1"/>
<line x1="918.7" y1="68.5" x2="930.7" y2="68.5" stroke="#000" stroke-width="0.9" stroke-dasharray="2.1 1.1"/>
<path fill="#e0f086" d="M936 67h14v7h-14z"/>
<line x1="936.7" y1="72.5" x2="949.7" y2="72.5" stroke="#000" stroke-width="0.9" stroke-dasharray="2.1 1.1"/>
<line x1="936.7" y1="70.5" x2="949.7" y2="70.5" stroke="#000" stroke-width="0.9" stroke-dasharray="2.1 1.1"/>
<line x1="936.7" y1="68.5" x2="949.7" y2="68.5" stroke="#000" stroke-width="0.9" stroke-dasharray="2.1 1.1"/>
<path fill="#e0f086" d="M955 67h13v7h-13z"/>
<line x1="955.7" y1="72.5" x2="967.7" y2="72.5" stroke="#000" stroke-width="0.9" stroke-dasharray="2.1 1.1"/>
<line x1="955.7" y1="70.5" x2="967.7" y2="70.5" stroke="#000" stroke-width="0.9" stroke-dasharray="2.1 1.1"/>
<line x1="955.7" y1="68.5" x2="967.7" y2="68.5" stroke="#000" stroke-width="0.9" stroke-dasharray="2.1 1.1"/>
<path fill="#e0f086" d="M973 67h14v7h-14z"/>
<line x1="973.7" y1="72.5" x2="986.7" y2="72.5" stroke="#000" stroke-width="0.9" stroke-dasharray="2.1 1.1"/>
<line x1="973.7" y1="70.5" x2="986.7" y2="70.5" stroke="#000" stroke-width="0.9" stroke-dasharray="2.1 1.1"/>
<line x1="973.7" y1="68.5" x2="986.7" y2="68.5" stroke="#000" stroke-width="0.9" stroke-dasharray="2.1 1.1"/>
<path fill="#e0f086" d="M918 78h13v5h-13z"/>
<line x1="918.7" y1="81.5" x2="930.7" y2="81.5" stroke="#000" stroke-width="0.9" stroke-dasharray="2.1 1.1"/>
<line x1="918.7" y1="79.5" x2="930.7" y2="79.5" stroke="#000" stroke-width="0.9" stroke-dasharray="2.1 1.1"/>
<path fill="#e0f086" d="M936 78h14v5h-14z"/>
<line x1="936.7" y1="81.5" x2="949.7" y2="81.5" stroke="#000" stroke-width="0.9" stroke-dasharray="2.1 1.1"/>
<line x1="936.7" y1="79.5" x2="949.7" y2="79.5" stroke="#000" stroke-width="0.9" stroke-dasharray="2.1 1.1"/>
<path fill="#e0f086" d="M955 78h13v5h-13z"/>
<line x1="955.7" y1="81.5" x2="967.7" y2="81.5" stroke="#000" stroke-width="0.9" stroke-dasharray="2.1 1.1"/>
<line x1="955.7" y1="79.5" x2="967.7" y2="79.5" stroke="#000" stroke-width="0.9" stroke-dasharray="2.1 1.1"/>
<path fill="#e0f086" d="M973 78h14v5h-14z"/>
<line x1="973.7" y1="81.5" x2="986.7" y2="81.5" stroke="#000" stroke-width="0.9" stroke-dasharray="2.1 1.1"/>
<line x1="973.7" y1="79.5" x2="986.7" y2="79.5" stroke="#000" stroke-width="0.9" stroke-dasharray="2.1 1.1"/>
<path fill="#e0f086" d="M918 87h13v5h-13z"/>
<line x1="918.7" y1="90.5" x2="930.7" y2="90.5" stroke="#000" stroke-width="0.9" stroke-dasharray="2.1 1.1"/>
<line x1="918.7" y1="88.5" x2="930.7" y2="88.5" stroke="#000" stroke-width="0.9" stroke-dasharray="2.1 1.1"/>
<path fill="#e0f086" d="M936 87h14v5h-14z"/>
<line x1="936.7" y1="90.5" x2="949.7" y2="90.5" stroke="#000" stroke-width="0.9" stroke-dasharray="2.1 1.1"/>
<line x1="936.7" y1="88.5" x2="949.7" y2="88.5" stroke="#000" stroke-width="0.9" stroke-dasharray="2.1 1.1"/>
<path fill="#e0f086" d="M955 87h13v5h-13z"/>
<line x1="955.7" y1="90.5" x2="967.7" y2="90.5" stroke="#000" stroke-width="0.9" stroke-dasharray="2.1 1.1"/>
<line x1="955.7" y1="88.5" x2="967.7" y2="88.5" stroke="#000" stroke-width="0.9" stroke-dasharray="2.1 1.1"/>
<path fill="#e0f086" d="M973 87h14v5h-14z"/>
<line x1="973.7" y1="90.5" x2="986.7" y2="90.5" stroke="#000" stroke-width="0.9" stroke-dasharray="2.1 1.1"/>
<line x1="973.7" y1="88.5" x2="986.7" y2="88.5" stroke="#000" stroke-width="0.9" stroke-dasharray="2.1 1.1"/>
<path fill="#e0f086" d="M918 96h13v5h-13z"/>
<line x1="918.7" y1="99.5" x2="930.7" y2="99.5" stroke="#000" stroke-width="0.9" stroke-dasharray="2.1 1.1"/>
<line x1="918.7" y1="97.5" x2="930.7" y2="97.5" stroke="#000" stroke-width="0.9" stroke-dasharray="2.1 1.1"/>
<path fill="#e0f086" d="M936 96h14v5h-14z"/>
<line x1="936.7" y1="99.5" x2="949.7" y2="99.5" stroke="#000" stroke-width="0.9" stroke-dasharray="2.1 1.1"/>
<line x1="936.7" y1="97.5" x2="949.7" y2="97.5" stroke="#000" stroke-width="0.9" stroke-dasharray="2.1 1.1"/>
<path fill="#e0f086" d="M955 96h13v5h-13z"/>
<line x1="955.7" y1="99.5" x2="967.7" y2="99.5" stroke="#000" stroke-width="0.9" stroke-dasharray="2.1 1.1"/>
<line x1="955.7" y1="97.5" x2="967.7" y2="97.5" stroke="#000" stroke-width="0.9" stroke-dasharray="2.1 1.1"/>
<path fill="#e0f086" d="M973 96h14v5h-14z"/>
<line x1="973.7" y1="99.5" x2="986.7" y2="99.5" stroke="#000" stroke-width="0.9" stroke-dasharray="2.1 1.1"/>
<line x1="973.7" y1="97.5" x2="986.7" y2="97.5" stroke="#000" stroke-width="0.9" stroke-dasharray="2.1 1.1"/>
<path fill="#e0f086" d="M918 105h13v5h-13z"/>
<line x1="918.7" y1="108.5" x2="930.7" y2="108.5" stroke="#000" stroke-width="0.9" stroke-dasharray="2.1 1.1"/>
<line x1="918.7" y1="106.5" x2="930.7" y2="106.5" stroke="#000" stroke-width="0.9" stroke-dasharray="2.1 1.1"/>
<path fill="#e0f086" d="M936 105h14v5h-14z"/>
<line x1="936.7" y1="108.5" x2="949.7" y2="108.5" stroke="#000" stroke-width="0.9" stroke-dasharray="2.1 1.1"/>
<line x1="936.7" y1="106.5" x2="949.7" y2="106.5" stroke="#000" stroke-width="0.9" stroke-dasharray="2.1 1.1"/>
<path fill="#e0f086" d="M955 105h13v5h-13z"/>
<line x1="955.7" y1="108.5" x2="967.7" y2="108.5" stroke="#000" stroke-width="0.9" stroke-dasharray="2.1 1.1"/>
<line x1="955.7" y1="106.5" x2="967.7" y2="106.5" stroke="#000" stroke-width="0.9" stroke-dasharray="2.1 1.1"/>
<path fill="#e0f086" d="M973 105h14v5h-14z"/>
<line x1="973.7" y1="108.5" x2="986.7" y2="108.5" stroke="#000" stroke-width="0.9" stroke-dasharray="2.1 1.1"/>
<line x1="973.7" y1="106.5" x2="986.7" y2="106.5" stroke="#000" stroke-width="0.9" stroke-dasharray="2.1 1.1"/>
<path fill="#e0f086" d="M918 114h13v6h-13z"/>
<line x1="918.7" y1="118.5" x2="930.7" y2="118.5" stroke="#000" stroke-width="0.9" stroke-dasharray="2.1 1.1"/>
<line x1="918.7" y1="116.5" x2="930.7" y2="116.5" stroke="#000" stroke-width="0.9" stroke-dasharray="2.1 1.1"/>
<path fill="#e0f086" d="M936 114h14v6h-14z"/>
<line x1="936.7" y1="118.5" x2="949.7" y2="118.5" stroke="#000" stroke-width="0.9" stroke-dasharray="2.1 1.1"/>
<line x1="936.7" y1="116.5" x2="949.7" y2="116.5" stroke="#000" stroke-width="0.9" stroke-dasharray="2.1 1.1"/>
<path fill="#e0f086" d="M955 114h13v6h-13z"/>
<line x1="955.7" y1="118.5" x2="967.7" y2="118.5" stroke="#000" stroke-width="0.9" stroke-dasharray="2.1 1.1"/>
<line x1="955.7" y1="116.5" x2="967.7" y2="116.5" stroke="#000" stroke-width="0.9" stroke-dasharray="2.1 1.1"/>
<path fill="#e0f086" d="M973 114h14v6h-14z"/>
<line x1="973.7" y1="118.5" x2="986.7" y2="118.5" stroke="#000" stroke-width="0.9" stroke-dasharray="2.1 1.1"/>
<line x1="973.7" y1="116.5" x2="986.7" y2="116.5" stroke="#000" stroke-width="0.9" stroke-dasharray="2.1 1.1"/>
<path fill="#e0f086" d="M918 123h13v6h-13z"/>
<line x1="918.7" y1="127.5" x2="930.7" y2="127.5" stroke="#000" stroke-width="0.9" stroke-dasharray="2.1 1.1"/>
<line x1="918.7" y1="125.5" x2="930.7" y2="125.5" stroke="#000" stroke-width="0.9" stroke-dasharray="2.1 1.1"/>
<path fill="#e0f086" d="M936 123h14v6h-14z"/>
<line x1="936.7" y1="127.5" x2="949.7" y2="127.5" stroke="#000" stroke-width="0.9" stroke-dasharray="2.1 1.1"/>
<line x1="936.7" y1="125.5" x2="949.7" y2="125.5" stroke="#000" stroke-width="0.9" stroke-dasharray="2.1 1.1"/>
<path fill="#e0f086" d="M955 123h13v6h-13z"/>
<line x1="955.7" y1="127.5" x2="967.7" y2="127.5" stroke="#000" stroke-width="0.9" stroke-dasharray="2.1 1.1"/>
<line x1="955.7" y1="125.5" x2="967.7" y2="125.5" stroke="#000" stroke-width="0.9" stroke-dasharray="2.1 1.1"/>
<path fill="#e0f086" d="M973 123h14v6h-14z"/>
<line x1="973.7" y1="127.5" x2="986.7" y2="127.5" stroke="#000" stroke-width="0.9" stroke-dasharray="2.1 1.1"/>
<line x1="973.7" y1="125.5" x2="986.7" y2="125.5" stroke="#000" stroke-width="0.9" stroke-dasharray="2.1 1.1"/>
<path fill="#e0f086" d="M918 132h13v10h-13z"/>
<line x1="918.7" y1="140.5" x2="930.7" y2="140.5" stroke="#000" stroke-width="0.9" stroke-dasharray="2.1 1.1"/>
<line x1="918.7" y1="138.5" x2="930.7" y2="138.5" stroke="#000" stroke-width="0.9" stroke-dasharray="2.1 1.1"/>
<path fill="#e0f086" d="M936 132h14v10h-14z"/>
<line x1="936.7" y1="140.5" x2="949.7" y2="140.5" stroke="#000" stroke-width="0.9" stroke-dasharray="2.1 1.1"/>
<line x1="936.7" y1="138.5" x2="949.7" y2="138.5" stroke="#000" stroke-width="0.9" stroke-dasharray="2.1 1.1"/>
<path fill="#e0f086" d="M955 132h13v10h-13z"/>
<line x1="955.7" y1="140.5" x2="967.7" y2="140.5" stroke="#000" stroke-width="0.9" stroke-dasharray="2.1 1.1"/>
<line x1="955.7" y1="138.5" x2="967.7" y2="138.5" stroke="#000" stroke-width="0.9" stroke-dasharray="2.1 1.1"/>
<path fill="#e0f086" d="M973 132h14v10h-14z"/>
<line x1="973.7" y1="140.5" x2="986.7" y2="140.5" stroke="#000" stroke-width="0.9" stroke-dasharray="2.1 1.1"/>
<line x1="973.7" y1="138.5" x2="986.7" y2="138.5" stroke="#000" stroke-width="0.9" stroke-dasharray="2.1 1.1"/>
<path fill="#fff" d="M914 74h76v1h-76zM914 83h76v1h-76zM914 92h76v1h-76zM914 101h76v1h-76zM914 110h76v1h-76zM914 120h76v1h-76zM914 129h76v1h-76zM914 66h1v78h-1zM917 66h1v78h-1zM931 66h1v78h-1zM935 66h1v78h-1zM949 66h1v78h-1zM954 66h1v78h-1zM967 66h1v78h-1zM972 66h1v78h-1zM986 66h1v78h-1zM989 66h1v78h-1z"/>
<path fill="#f0e878" d="M990 60h36v1h-36zM990 63h36v1h-36zM990 66h36v1h-36zM990 68h36v1h-36zM990 71h36v1h-36zM990 74h36v1h-36zM990 77h36v1h-36zM990 80h36v1h-36zM990 83h36v1h-36zM990 85h36v1h-36zM990 88h36v1h-36zM990 91h36v1h-36zM990 94h36v1h-36zM990 97h36v1h-36zM990 99h36v1h-36zM990 102h36v1h-36zM990 105h36v1h-36zM990 108h36v1h-36zM990 111h36v1h-36zM990 114h36v1h-36zM990 116h36v1h-36zM990 119h36v1h-36zM990 122h36v1h-36zM990 125h36v1h-36zM990 128h36v1h-36zM990 130h36v1h-36zM990 133h36v1h-36zM990 136h36v1h-36zM990 139h36v1h-36z"/>
<path fill="#fff" d="M989 59h1v85h-1zM1026 59h1v85h-1z"/>
<path fill="#f0e878" d="M1012 136h7v7h-7z"/>
<path fill="#000" opacity="0.9" d="M1014 136h1v7h-1zM1016 136h1v7h-1z"/>
<path fill="#fff" d="M1008 134h18v1h-18z"/>
<path fill="#fff" opacity="0.9" d="M1022 130h1v4h-1z"/>
<path fill="#fff" d="M1023 128h9v2h-9zM902 143h128v2h-128zM902 141h6v1h-6zM903 146h6v1h-6zM904 148h4v1h-4zM907 140h1v9h-1z"/>
<path fill="#ff0000" d="M914 144h1v16h-1zM1025 144h1v16h-1z"/>
<path fill="#fff" d="M915 154h111v1h-111z"/>
<path fill="#fff" opacity="0.9" d="M914 145h1v9h-1zM1025 145h1v9h-1z"/>
<path fill="#fff" d="M969 153h4v1h-4z"/>
<circle cx="914.8" cy="163.2" r="2.35" fill="none" stroke="#fff" stroke-width="1.15"/>
<text x="914.8" y="164.15" font-size="2.7" fill="#fff" text-anchor="middle" font-weight="normal" font-family='"Liberation Sans","Noto Sans CJK SC",sans-serif'>9</text>
<circle cx="1025.8" cy="163.2" r="2.35" fill="none" stroke="#fff" stroke-width="1.15"/>
<text x="1025.8" y="164.15" font-size="2.7" fill="#fff" text-anchor="middle" font-weight="normal" font-family='"Liberation Sans","Noto Sans CJK SC",sans-serif'>1</text>
<circle cx="895.5" cy="163.2" r="2.35" fill="none" stroke="#fff" stroke-width="1.15"/>
<text x="895.5" y="164.15" font-size="2.7" fill="#fff" text-anchor="middle" font-weight="normal" font-family='"Liberation Sans","Noto Sans CJK SC",sans-serif'>5</text>
<text x="970.3" y="169.9" font-size="2.8" fill="#fff" text-anchor="middle" font-weight="bold" font-family='"Liberation Sans","Noto Sans CJK SC",sans-serif'>东侧立面图</text>
<path fill="#fff" d="M964 168h13v1h-13z"/>
<path fill="#fff" opacity="0.9" d="M933 58h1v6h-1z"/>
<path fill="#fff" d="M934 57h6v2h-6z"/>
<path fill="#fff" opacity="0.9" d="M951 57h1v13h-1z"/>
<path fill="#fff" d="M952 56h6v2h-6z"/>
<path fill="#fff" opacity="0.9" d="M980 50h1v8h-1z"/>
<path fill="#fff" d="M980 50h8v2h-8z"/>
<path fill="#fff" opacity="0.9" d="M998 50h1v12h-1z"/>
<path fill="#fff" d="M998 50h7v2h-7z"/>
<text x="966.5" y="60.5" font-size="3.6" fill="#fff" text-anchor="middle" font-weight="bold" font-family='"Liberation Sans","Noto Sans CJK SC",sans-serif'>F</text>
<path fill="#ff0000" d="M901 60h8v1h-8z"/>
<path fill="#fff" d="M898 57h8v2h-8z"/>
<line x1="905" y1="58.1" x2="907" y2="60.3" stroke="#fff" stroke-width="0.8"/>
<path fill="#ff0000" d="M901 67h8v1h-8z"/>
<path fill="#fff" d="M898 64h8v2h-8z"/>
<line x1="905" y1="65.3" x2="907" y2="67.5" stroke="#fff" stroke-width="0.8"/>
<path fill="#f00" d="M969 80h1v1h-1zM924 78h1v1h-1zM982 127h1v1h-1zM926 129h1v1h-1zM988 116h1v1h-1zM941 108h1v1h-1zM925 68h1v1h-1zM987 116h1v1h-1zM954 137h1v1h-1zM947 132h1v1h-1zM976 83h1v1h-1zM934 89h1v1h-1zM933 111h1v1h-1zM934 98h1v1h-1zM925 135h1v1h-1zM941 101h1v1h-1zM958 135h1v1h-1zM946 136h1v1h-1zM952 107h1v1h-1zM954 68h1v1h-1zM948 81h1v1h-1zM915 127h1v1h-1zM928 103h1v1h-1zM969 109h1v1h-1zM939 106h1v1h-1zM956 126h1v1h-1zM923 109h1v1h-1zM933 88h1v1h-1zM972 105h1v1h-1zM957 124h1v1h-1zM983 100h1v1h-1zM960 105h1v1h-1zM953 119h1v1h-1zM948 107h1v1h-1zM950 138h1v1h-1zM967 133h1v1h-1zM985 86h1v1h-1zM956 138h1v1h-1zM977 77h1v1h-1zM924 100h1v1h-1zM973 60h1v1h-1zM973 63h1v1h-1zM983 64h1v1h-1z"/>
<path fill="#00ff00" d="M294 491h43v1h-43zM294 491h1v2h-1zM337 491h1v2h-1z"/>
<path fill="#fff" d="M293 492h45v2h-45z"/>
<path fill="#00ff00" d="M337 498h89v1h-89zM426 499h1v1h-1z"/>
<path fill="#fff" d="M332 500h96v2h-96z"/>
<path fill="#f0e878" d="M295 495h37v1h-37zM295 498h37v1h-37zM295 501h37v1h-37zM295 503h37v1h-37zM295 506h37v1h-37zM295 509h37v1h-37zM295 512h37v1h-37zM295 514h37v1h-37zM295 517h37v1h-37zM295 520h37v1h-37zM295 523h37v1h-37zM295 526h37v1h-37zM295 528h37v1h-37zM295 531h37v1h-37zM295 534h37v1h-37zM295 537h37v1h-37zM295 539h37v1h-37zM295 542h37v1h-37zM295 545h37v1h-37zM295 548h37v1h-37zM295 551h37v1h-37zM295 553h37v1h-37zM295 556h37v1h-37zM295 559h37v1h-37zM295 562h37v1h-37zM295 564h37v1h-37zM295 567h37v1h-37zM295 570h37v1h-37zM295 573h37v1h-37z"/>
<path fill="#fff" d="M294 493h1v85h-1zM332 493h1v85h-1zM337 493h1v8h-1z"/>
<path fill="#e0f086" d="M337 502h11v6h-11z"/>
<line x1="337.7" y1="506.5" x2="347.7" y2="506.5" stroke="#000" stroke-width="0.9" stroke-dasharray="2.1 1.1"/>
<line x1="337.7" y1="504.5" x2="347.7" y2="504.5" stroke="#000" stroke-width="0.9" stroke-dasharray="2.1 1.1"/>
<line x1="337.7" y1="502.5" x2="347.7" y2="502.5" stroke="#000" stroke-width="0.9" stroke-dasharray="2.1 1.1"/>
<path fill="#e0f086" d="M355 502h11v6h-11z"/>
<line x1="355.7" y1="506.5" x2="365.7" y2="506.5" stroke="#000" stroke-width="0.9" stroke-dasharray="2.1 1.1"/>
<line x1="355.7" y1="504.5" x2="365.7" y2="504.5" stroke="#000" stroke-width="0.9" stroke-dasharray="2.1 1.1"/>
<line x1="355.7" y1="502.5" x2="365.7" y2="502.5" stroke="#000" stroke-width="0.9" stroke-dasharray="2.1 1.1"/>
<path fill="#e0f086" d="M374 502h11v6h-11z"/>
<line x1="374.7" y1="506.5" x2="384.7" y2="506.5" stroke="#000" stroke-width="0.9" stroke-dasharray="2.1 1.1"/>
<line x1="374.7" y1="504.5" x2="384.7" y2="504.5" stroke="#000" stroke-width="0.9" stroke-dasharray="2.1 1.1"/>
<line x1="374.7" y1="502.5" x2="384.7" y2="502.5" stroke="#000" stroke-width="0.9" stroke-dasharray="2.1 1.1"/>
<path fill="#e0f086" d="M392 502h11v6h-11z"/>
<line x1="392.7" y1="506.5" x2="402.7" y2="506.5" stroke="#000" stroke-width="0.9" stroke-dasharray="2.1 1.1"/>
<line x1="392.7" y1="504.5" x2="402.7" y2="504.5" stroke="#000" stroke-width="0.9" stroke-dasharray="2.1 1.1"/>
<line x1="392.7" y1="502.5" x2="402.7" y2="502.5" stroke="#000" stroke-width="0.9" stroke-dasharray="2.1 1.1"/>
<path fill="#e0f086" d="M411 502h11v6h-11z"/>
<line x1="411.7" y1="506.5" x2="421.7" y2="506.5" stroke="#000" stroke-width="0.9" stroke-dasharray="2.1 1.1"/>
<line x1="411.7" y1="504.5" x2="421.7" y2="504.5" stroke="#000" stroke-width="0.9" stroke-dasharray="2.1 1.1"/>
<line x1="411.7" y1="502.5" x2="421.7" y2="502.5" stroke="#000" stroke-width="0.9" stroke-dasharray="2.1 1.1"/>
<path fill="#e0f086" d="M337 511h11v6h-11z"/>
<line x1="337.7" y1="515.5" x2="347.7" y2="515.5" stroke="#000" stroke-width="0.9" stroke-dasharray="2.1 1.1"/>
<line x1="337.7" y1="513.5" x2="347.7" y2="513.5" stroke="#000" stroke-width="0.9" stroke-dasharray="2.1 1.1"/>
<path fill="#e0f086" d="M355 511h11v6h-11z"/>
<line x1="355.7" y1="515.5" x2="365.7" y2="515.5" stroke="#000" stroke-width="0.9" stroke-dasharray="2.1 1.1"/>
<line x1="355.7" y1="513.5" x2="365.7" y2="513.5" stroke="#000" stroke-width="0.9" stroke-dasharray="2.1 1.1"/>
<path fill="#e0f086" d="M374 511h11v6h-11z"/>
<line x1="374.7" y1="515.5" x2="384.7" y2="515.5" stroke="#000" stroke-width="0.9" stroke-dasharray="2.1 1.1"/>
<line x1="374.7" y1="513.5" x2="384.7" y2="513.5" stroke="#000" stroke-width="0.9" stroke-dasharray="2.1 1.1"/>
<path fill="#e0f086" d="M392 511h11v6h-11z"/>
<line x1="392.7" y1="515.5" x2="402.7" y2="515.5" stroke="#000" stroke-width="0.9" stroke-dasharray="2.1 1.1"/>
<line x1="392.7" y1="513.5" x2="402.7" y2="513.5" stroke="#000" stroke-width="0.9" stroke-dasharray="2.1 1.1"/>
<path fill="#e0f086" d="M411 511h11v6h-11z"/>
<line x1="411.7" y1="515.5" x2="421.7" y2="515.5" stroke="#000" stroke-width="0.9" stroke-dasharray="2.1 1.1"/>
<line x1="411.7" y1="513.5" x2="421.7" y2="513.5" stroke="#000" stroke-width="0.9" stroke-dasharray="2.1 1.1"/>
<path fill="#e0f086" d="M337 520h11v6h-11z"/>
<line x1="337.7" y1="524.5" x2="347.7" y2="524.5" stroke="#000" stroke-width="0.9" stroke-dasharray="2.1 1.1"/>
<line x1="337.7" y1="522.5" x2="347.7" y2="522.5" stroke="#000" stroke-width="0.9" stroke-dasharray="2.1 1.1"/>
<path fill="#e0f086" d="M355 520h11v6h-11z"/>
<line x1="355.7" y1="524.5" x2="365.7" y2="524.5" stroke="#000" stroke-width="0.9" stroke-dasharray="2.1 1.1"/>
<line x1="355.7" y1="522.5" x2="365.7" y2="522.5" stroke="#000" stroke-width="0.9" stroke-dasharray="2.1 1.1"/>
<path fill="#e0f086" d="M374 520h11v6h-11z"/>
<line x1="374.7" y1="524.5" x2="384.7" y2="524.5" stroke="#000" stroke-width="0.9" stroke-dasharray="2.1 1.1"/>
<line x1="374.7" y1="522.5" x2="384.7" y2="522.5" stroke="#000" stroke-width="0.9" stroke-dasharray="2.1 1.1"/>
<path fill="#e0f086" d="M392 520h11v6h-11z"/>
<line x1="392.7" y1="524.5" x2="402.7" y2="524.5" stroke="#000" stroke-width="0.9" stroke-dasharray="2.1 1.1"/>
<line x1="392.7" y1="522.5" x2="402.7" y2="522.5" stroke="#000" stroke-width="0.9" stroke-dasharray="2.1 1.1"/>
<path fill="#e0f086" d="M411 520h11v6h-11z"/>
<line x1="411.7" y1="524.5" x2="421.7" y2="524.5" stroke="#000" stroke-width="0.9" stroke-dasharray="2.1 1.1"/>
<line x1="411.7" y1="522.5" x2="421.7" y2="522.5" stroke="#000" stroke-width="0.9" stroke-dasharray="2.1 1.1"/>
<path fill="#e0f086" d="M337 530h11v5h-11z"/>
<line x1="337.7" y1="533.5" x2="347.7" y2="533.5" stroke="#000" stroke-width="0.9" stroke-dasharray="2.1 1.1"/>
<line x1="337.7" y1="531.5" x2="347.7" y2="531.5" stroke="#000" stroke-width="0.9" stroke-dasharray="2.1 1.1"/>
<path fill="#e0f086" d="M355 530h11v5h-11z"/>
<line x1="355.7" y1="533.5" x2="365.7" y2="533.5" stroke="#000" stroke-width="0.9" stroke-dasharray="2.1 1.1"/>
<line x1="355.7" y1="531.5" x2="365.7" y2="531.5" stroke="#000" stroke-width="0.9" stroke-dasharray="2.1 1.1"/>
<path fill="#e0f086" d="M374 530h11v5h-11z"/>
<line x1="374.7" y1="533.5" x2="384.7" y2="533.5" stroke="#000" stroke-width="0.9" stroke-dasharray="2.1 1.1"/>
<line x1="374.7" y1="531.5" x2="384.7" y2="531.5" stroke="#000" stroke-width="0.9" stroke-dasharray="2.1 1.1"/>
<path fill="#e0f086" d="M392 530h11v5h-11z"/>
<line x1="392.7" y1="533.5" x2="402.7" y2="533.5" stroke="#000" stroke-width="0.9" stroke-dasharray="2.1 1.1"/>
<line x1="392.7" y1="531.5" x2="402.7" y2="531.5" stroke="#000" stroke-width="0.9" stroke-dasharray="2.1 1.1"/>
<path fill="#e0f086" d="M411 530h11v5h-11z"/>
<line x1="411.7" y1="533.5" x2="421.7" y2="533.5" stroke="#000" stroke-width="0.9" stroke-dasharray="2.1 1.1"/>
<line x1="411.7" y1="531.5" x2="421.7" y2="531.5" stroke="#000" stroke-width="0.9" stroke-dasharray="2.1 1.1"/>
<path fill="#e0f086" d="M337 539h11v6h-11z"/>
<line x1="337.7" y1="543.5" x2="347.7" y2="543.5" stroke="#000" stroke-width="0.9" stroke-dasharray="2.1 1.1"/>
<line x1="337.7" y1="541.5" x2="347.7" y2="541.5" stroke="#000" stroke-width="0.9" stroke-dasharray="2.1 1.1"/>
<path fill="#e0f086" d="M355 539h11v6h-11z"/>
<line x1="355.7" y1="543.5" x2="365.7" y2="543.5" stroke="#000" stroke-width="0.9" stroke-dasharray="2.1 1.1"/>
<line x1="355.7" y1="541.5" x2="365.7" y2="541.5" stroke="#000" stroke-width="0.9" stroke-dasharray="2.1 1.1"/>
<path fill="#e0f086" d="M374 539h11v6h-11z"/>
<line x1="374.7" y1="543.5" x2="384.7" y2="543.5" stroke="#000" stroke-width="0.9" stroke-dasharray="2.1 1.1"/>
<line x1="374.7" y1="541.5" x2="384.7" y2="541.5" stroke="#000" stroke-width="0.9" stroke-dasharray="2.1 1.1"/>
<path fill="#e0f086" d="M392 539h11v6h-11z"/>
<line x1="392.7" y1="543.5" x2="402.7" y2="543.5" stroke="#000" stroke-width="0.9" stroke-dasharray="2.1 1.1"/>
<line x1="392.7" y1="541.5" x2="402.7" y2="541.5" stroke="#000" stroke-width="0.9" stroke-dasharray="2.1 1.1"/>
<path fill="#e0f086" d="M411 539h11v6h-11z"/>
<line x1="411.7" y1="543.5" x2="421.7" y2="543.5" stroke="#000" stroke-width="0.9" stroke-dasharray="2.1 1.1"/>
<line x1="411.7" y1="541.5" x2="421.7" y2="541.5" stroke="#000" stroke-width="0.9" stroke-dasharray="2.1 1.1"/>
<path fill="#e0f086" d="M337 548h11v6h-11z"/>
<line x1="337.7" y1="552.5" x2="347.7" y2="552.5" stroke="#000" stroke-width="0.9" stroke-dasharray="2.1 1.1"/>
<line x1="337.7" y1="550.5" x2="347.7" y2="550.5" stroke="#000" stroke-width="0.9" stroke-dasharray="2.1 1.1"/>
<path fill="#e0f086" d="M355 548h11v6h-11z"/>
<line x1="355.7" y1="552.5" x2="365.7" y2="552.5" stroke="#000" stroke-width="0.9" stroke-dasharray="2.1 1.1"/>
<line x1="355.7" y1="550.5" x2="365.7" y2="550.5" stroke="#000" stroke-width="0.9" stroke-dasharray="2.1 1.1"/>
<path fill="#e0f086" d="M374 548h11v6h-11z"/>
<line x1="374.7" y1="552.5" x2="384.7" y2="552.5" stroke="#000" stroke-width="0.9" stroke-dasharray="2.1 1.1"/>
<line x1="374.7" y1="550.5" x2="384.7" y2="550.5" stroke="#000" stroke-width="0.9" stroke-dasharray="2.1 1.1"/>
<path fill="#e0f086" d="M392 548h11v6h-11z"/>
<line x1="392.7" y1="552.5" x2="402.7" y2="552.5" stroke="#000" stroke-width="0.9" stroke-dasharray="2.1 1.1"/>
<line x1="392.7" y1="550.5" x2="402.7" y2="550.5" stroke="#000" stroke-width="0.9" stroke-dasharray="2.1 1.1"/>
<path fill="#e0f086" d="M411 548h11v6h-11z"/>
<line x1="411.7" y1="552.5" x2="421.7" y2="552.5" stroke="#000" stroke-width="0.9" stroke-dasharray="2.1 1.1"/>
<line x1="411.7" y1="550.5" x2="421.7" y2="550.5" stroke="#000" stroke-width="0.9" stroke-dasharray="2.1 1.1"/>
<path fill="#e0f086" d="M337 557h11v6h-11z"/>
<line x1="337.7" y1="561.5" x2="347.7" y2="561.5" stroke="#000" stroke-width="0.9" stroke-dasharray="2.1 1.1"/>
<line x1="337.7" y1="559.5" x2="347.7" y2="559.5" stroke="#000" stroke-width="0.9" stroke-dasharray="2.1 1.1"/>
<path fill="#e0f086" d="M355 557h11v6h-11z"/>
<line x1="355.7" y1="561.5" x2="365.7" y2="561.5" stroke="#000" stroke-width="0.9" stroke-dasharray="2.1 1.1"/>
<line x1="355.7" y1="559.5" x2="365.7" y2="559.5" stroke="#000" stroke-width="0.9" stroke-dasharray="2.1 1.1"/>
<path fill="#e0f086" d="M374 557h11v6h-11z"/>
<line x1="374.7" y1="561.5" x2="384.7" y2="561.5" stroke="#000" stroke-width="0.9" stroke-dasharray="2.1 1.1"/>
<line x1="374.7" y1="559.5" x2="384.7" y2="559.5" stroke="#000" stroke-width="0.9" stroke-dasharray="2.1 1.1"/>
<path fill="#e0f086" d="M392 557h11v6h-11z"/>
<line x1="392.7" y1="561.5" x2="402.7" y2="561.5" stroke="#000" stroke-width="0.9" stroke-dasharray="2.1 1.1"/>
<line x1="392.7" y1="559.5" x2="402.7" y2="559.5" stroke="#000" stroke-width="0.9" stroke-dasharray="2.1 1.1"/>
<path fill="#e0f086" d="M411 557h11v6h-11z"/>
<line x1="411.7" y1="561.5" x2="421.7" y2="561.5" stroke="#000" stroke-width="0.9" stroke-dasharray="2.1 1.1"/>
<line x1="411.7" y1="559.5" x2="421.7" y2="559.5" stroke="#000" stroke-width="0.9" stroke-dasharray="2.1 1.1"/>
<path fill="#e0f086" d="M337 565h11v9h-11z"/>
<line x1="339.32" y1="565.5" x2="339.32" y2="573.5" stroke="#000" stroke-width="0.7"/>
<line x1="341.44" y1="565.5" x2="341.44" y2="573.5" stroke="#000" stroke-width="0.7"/>
<line x1="343.56" y1="565.5" x2="343.56" y2="573.5" stroke="#000" stroke-width="0.7"/>
<line x1="345.68" y1="565.5" x2="345.68" y2="573.5" stroke="#000" stroke-width="0.7"/>
<line x1="337.4" y1="569.6" x2="347.6" y2="569.6" stroke="#000" stroke-width="0.7"/>
<path fill="#e0f086" d="M355 565h11v9h-11z"/>
<line x1="357.46" y1="565.5" x2="357.46" y2="573.5" stroke="#000" stroke-width="0.7"/>
<line x1="359.52" y1="565.5" x2="359.52" y2="573.5" stroke="#000" stroke-width="0.7"/>
<line x1="361.58" y1="565.5" x2="361.58" y2="573.5" stroke="#000" stroke-width="0.7"/>
<line x1="363.64" y1="565.5" x2="363.64" y2="573.5" stroke="#000" stroke-width="0.7"/>
<line x1="355.6" y1="569.6" x2="365.5" y2="569.6" stroke="#000" stroke-width="0.7"/>
<path fill="#e0f086" d="M374 565h11v9h-11z"/>
<line x1="376.36" y1="565.5" x2="376.36" y2="573.5" stroke="#000" stroke-width="0.7"/>
<line x1="378.42" y1="565.5" x2="378.42" y2="573.5" stroke="#000" stroke-width="0.7"/>
<line x1="380.48" y1="565.5" x2="380.48" y2="573.5" stroke="#000" stroke-width="0.7"/>
<line x1="382.54" y1="565.5" x2="382.54" y2="573.5" stroke="#000" stroke-width="0.7"/>
<line x1="374.5" y1="569.6" x2="384.4" y2="569.6" stroke="#000" stroke-width="0.7"/>
<path fill="#e0f086" d="M392 565h11v9h-11z"/>
<line x1="394.56" y1="565.5" x2="394.56" y2="573.5" stroke="#000" stroke-width="0.7"/>
<line x1="396.62" y1="565.5" x2="396.62" y2="573.5" stroke="#000" stroke-width="0.7"/>
<line x1="398.68" y1="565.5" x2="398.68" y2="573.5" stroke="#000" stroke-width="0.7"/>
<line x1="400.74" y1="565.5" x2="400.74" y2="573.5" stroke="#000" stroke-width="0.7"/>
<line x1="392.7" y1="569.6" x2="402.6" y2="569.6" stroke="#000" stroke-width="0.7"/>
<path fill="#e0f086" d="M411 565h10v9h-10z"/>
<line x1="413.06" y1="565.5" x2="413.06" y2="573.5" stroke="#000" stroke-width="0.7"/>
<line x1="415.12" y1="565.5" x2="415.12" y2="573.5" stroke="#000" stroke-width="0.7"/>
<line x1="417.18" y1="565.5" x2="417.18" y2="573.5" stroke="#000" stroke-width="0.7"/>
<line x1="419.24" y1="565.5" x2="419.24" y2="573.5" stroke="#000" stroke-width="0.7"/>
<line x1="411.2" y1="569.6" x2="421.1" y2="569.6" stroke="#000" stroke-width="0.7"/>
<path fill="#fff" d="M333 508h93v1h-93zM333 517h93v1h-93zM333 526h93v1h-93zM333 535h93v1h-93zM333 545h93v1h-93zM333 554h93v1h-93zM333 563h93v1h-93zM332 501h1v77h-1zM336 501h1v77h-1zM348 501h1v77h-1zM354 501h1v77h-1zM366 501h1v77h-1zM372 501h1v77h-1zM385 501h1v77h-1zM391 501h1v77h-1zM404 501h1v77h-1zM409 501h1v77h-1zM422 501h1v77h-1zM425 501h1v77h-1z"/>
<path fill="#f0e878" d="M304 571h5v6h-5z"/>
<path fill="#fff" opacity="0.9" d="M304 571h1v6h-1zM307 571h1v6h-1z"/>
<path fill="#fff" d="M298 569h15v1h-15z"/>
<path fill="#fff" opacity="0.9" d="M298 564h1v6h-1z"/>
<path fill="#fff" d="M288 562h10v2h-10zM427 563h1v7h-1zM428 570h4v1h-4zM427 562h6v2h-6zM281 577h157v3h-157zM284 574h8v1h-8z"/>
<path fill="#ff0000" d="M286 576h8v1h-8zM294 579h1v11h-1zM425 579h1v11h-1z"/>
<path fill="#fff" d="M295 582h130v1h-130zM358 582h5v1h-5z"/>
<circle cx="294.6" cy="592.9" r="2.35" fill="none" stroke="#fff" stroke-width="1.15"/>
<text x="294.6" y="593.85" font-size="2.7" fill="#fff" text-anchor="middle" font-weight="normal" font-family='"Liberation Sans","Noto Sans CJK SC",sans-serif'>J</text>
<circle cx="425.4" cy="592.9" r="2.35" fill="none" stroke="#fff" stroke-width="1.15"/>
<text x="425.4" y="593.85" font-size="2.7" fill="#fff" text-anchor="middle" font-weight="normal" font-family='"Liberation Sans","Noto Sans CJK SC",sans-serif'>A</text>
<text x="368" y="597.8" font-size="2.8" fill="#fff" text-anchor="middle" font-weight="bold" font-family='"Liberation Sans","Noto Sans CJK SC",sans-serif'>北侧立面图</text>
<path fill="#fff" d="M362 596h13v1h-13z"/>
<path fill="#fff" opacity="0.9" d="M299 486h1v6h-1z"/>
<path fill="#fff" d="M300 485h5v2h-5z"/>
<path fill="#fff" opacity="0.9" d="M316 486h1v6h-1z"/>
<path fill="#fff" d="M317 485h6v2h-6z"/>
<path fill="#fff" opacity="0.9" d="M334 483h1v9h-1z"/>
<path fill="#fff" d="M335 482h8v2h-8zM335 485h7v1h-7z"/>
<path fill="#fff" opacity="0.9" d="M369 494h1v12h-1z"/>
<path fill="#fff" d="M370 494h6v2h-6z"/>
<path fill="#fff" opacity="0.9" d="M384 494h1v4h-1z"/>
<path fill="#fff" d="M384 492h7v2h-7z"/>
<path fill="#ff0000" d="M440 493h7v1h-7z"/>
<line x1="441.5" y1="492.8" x2="443.5" y2="491" stroke="#fff" stroke-width="0.8"/>
<path fill="#fff" d="M443 490h8v2h-8z"/>
<path fill="#ff0000" d="M440 501h7v1h-7z"/>
<line x1="441.5" y1="500.8" x2="443.5" y2="499" stroke="#fff" stroke-width="0.8"/>
<path fill="#fff" d="M443 498h8v2h-8z"/>
<path fill="#ff0000" d="M440 578h9v1h-9z"/>
<path fill="#fff" d="M443 575h8v2h-8zM443 581h7v1h-7z"/>
<text x="430.5" y="500.6" font-size="3" fill="#fff" text-anchor="middle" font-weight="bold" font-family='"Liberation Sans","Noto Sans CJK SC",sans-serif'>E</text>
<path fill="#f00" d="M348 556h1v1h-1zM394 513h1v1h-1zM414 575h1v1h-1zM354 573h1v1h-1zM370 539h1v1h-1zM424 564h1v1h-1zM349 534h1v1h-1zM381 527h1v1h-1zM352 526h1v1h-1zM400 503h1v1h-1zM384 535h1v1h-1zM336 527h1v1h-1zM391 540h1v1h-1zM340 576h1v1h-1zM406 575h1v1h-1zM344 522h1v1h-1zM338 560h1v1h-1zM359 512h1v1h-1zM372 570h1v1h-1zM409 521h1v1h-1zM348 571h1v1h-1zM386 555h1v1h-1zM342 506h1v1h-1zM397 534h1v1h-1zM341 572h1v1h-1zM392 562h1v1h-1z"/>
<path fill="#00ff00" d="M300 628h88v1h-88zM300 629h1v1h-1zM394 628h37v1h-37zM388 620h44v1h-44zM388 620h1v4h-1zM431 620h1v4h-1z"/>
<path fill="#fff" d="M388 623h52v2h-52zM299 630h134v2h-134z"/>
<path fill="#e0f086" d="M322 632h13v6h-13z"/>
<line x1="322.7" y1="636.5" x2="334.7" y2="636.5" stroke="#000" stroke-width="0.9" stroke-dasharray="2.1 1.1"/>
<line x1="322.7" y1="634.5" x2="334.7" y2="634.5" stroke="#000" stroke-width="0.9" stroke-dasharray="2.1 1.1"/>
<line x1="322.7" y1="632.5" x2="334.7" y2="632.5" stroke="#000" stroke-width="0.9" stroke-dasharray="2.1 1.1"/>
<path fill="#e0f086" d="M340 632h12v6h-12z"/>
<line x1="340.7" y1="636.5" x2="351.7" y2="636.5" stroke="#000" stroke-width="0.9" stroke-dasharray="2.1 1.1"/>
<line x1="340.7" y1="634.5" x2="351.7" y2="634.5" stroke="#000" stroke-width="0.9" stroke-dasharray="2.1 1.1"/>
<line x1="340.7" y1="632.5" x2="351.7" y2="632.5" stroke="#000" stroke-width="0.9" stroke-dasharray="2.1 1.1"/>
<path fill="#e0f086" d="M359 632h12v6h-12z"/>
<line x1="359.7" y1="636.5" x2="370.7" y2="636.5" stroke="#000" stroke-width="0.9" stroke-dasharray="2.1 1.1"/>
<line x1="359.7" y1="634.5" x2="370.7" y2="634.5" stroke="#000" stroke-width="0.9" stroke-dasharray="2.1 1.1"/>
<line x1="359.7" y1="632.5" x2="370.7" y2="632.5" stroke="#000" stroke-width="0.9" stroke-dasharray="2.1 1.1"/>
<path fill="#e0f086" d="M377 632h11v6h-11z"/>
<line x1="377.7" y1="636.5" x2="387.7" y2="636.5" stroke="#000" stroke-width="0.9" stroke-dasharray="2.1 1.1"/>
<line x1="377.7" y1="634.5" x2="387.7" y2="634.5" stroke="#000" stroke-width="0.9" stroke-dasharray="2.1 1.1"/>
<line x1="377.7" y1="632.5" x2="387.7" y2="632.5" stroke="#000" stroke-width="0.9" stroke-dasharray="2.1 1.1"/>
<path fill="#e0f086" d="M302 632h5v6h-5z"/>
<path fill="#000" opacity="0.9" d="M303 632h1v5h-1z"/>
<path fill="#e0f086" d="M312 632h4v6h-4z"/>
<path fill="#000" opacity="0.9" d="M313 632h1v5h-1z"/>
<path fill="#e0f086" d="M322 641h13v6h-13z"/>
<line x1="322.7" y1="645.5" x2="334.7" y2="645.5" stroke="#000" stroke-width="0.9" stroke-dasharray="2.1 1.1"/>
<line x1="322.7" y1="643.5" x2="334.7" y2="643.5" stroke="#000" stroke-width="0.9" stroke-dasharray="2.1 1.1"/>
<path fill="#e0f086" d="M340 641h12v6h-12z"/>
<line x1="340.7" y1="645.5" x2="351.7" y2="645.5" stroke="#000" stroke-width="0.9" stroke-dasharray="2.1 1.1"/>
<line x1="340.7" y1="643.5" x2="351.7" y2="643.5" stroke="#000" stroke-width="0.9" stroke-dasharray="2.1 1.1"/>
<path fill="#e0f086" d="M359 641h12v6h-12z"/>
<line x1="359.7" y1="645.5" x2="370.7" y2="645.5" stroke="#000" stroke-width="0.9" stroke-dasharray="2.1 1.1"/>
<line x1="359.7" y1="643.5" x2="370.7" y2="643.5" stroke="#000" stroke-width="0.9" stroke-dasharray="2.1 1.1"/>
<path fill="#e0f086" d="M377 641h11v6h-11z"/>
<line x1="377.7" y1="645.5" x2="387.7" y2="645.5" stroke="#000" stroke-width="0.9" stroke-dasharray="2.1 1.1"/>
<line x1="377.7" y1="643.5" x2="387.7" y2="643.5" stroke="#000" stroke-width="0.9" stroke-dasharray="2.1 1.1"/>
<path fill="#e0f086" d="M302 641h5v6h-5z"/>
<path fill="#000" opacity="0.9" d="M303 642h1v4h-1z"/>
<path fill="#e0f086" d="M312 641h4v6h-4z"/>
<path fill="#000" opacity="0.9" d="M313 642h1v4h-1z"/>
<path fill="#e0f086" d="M322 650h13v7h-13z"/>
<line x1="322.7" y1="655.5" x2="334.7" y2="655.5" stroke="#000" stroke-width="0.9" stroke-dasharray="2.1 1.1"/>
<line x1="322.7" y1="653.5" x2="334.7" y2="653.5" stroke="#000" stroke-width="0.9" stroke-dasharray="2.1 1.1"/>
<path fill="#e0f086" d="M340 650h12v7h-12z"/>
<line x1="340.7" y1="655.5" x2="351.7" y2="655.5" stroke="#000" stroke-width="0.9" stroke-dasharray="2.1 1.1"/>
<line x1="340.7" y1="653.5" x2="351.7" y2="653.5" stroke="#000" stroke-width="0.9" stroke-dasharray="2.1 1.1"/>
<path fill="#e0f086" d="M359 650h12v7h-12z"/>
<line x1="359.7" y1="655.5" x2="370.7" y2="655.5" stroke="#000" stroke-width="0.9" stroke-dasharray="2.1 1.1"/>
<line x1="359.7" y1="653.5" x2="370.7" y2="653.5" stroke="#000" stroke-width="0.9" stroke-dasharray="2.1 1.1"/>
<path fill="#e0f086" d="M377 650h11v7h-11z"/>
<line x1="377.7" y1="655.5" x2="387.7" y2="655.5" stroke="#000" stroke-width="0.9" stroke-dasharray="2.1 1.1"/>
<line x1="377.7" y1="653.5" x2="387.7" y2="653.5" stroke="#000" stroke-width="0.9" stroke-dasharray="2.1 1.1"/>
<path fill="#e0f086" d="M302 650h5v7h-5z"/>
<path fill="#000" opacity="0.9" d="M303 651h1v5h-1z"/>
<path fill="#e0f086" d="M312 650h4v7h-4z"/>
<path fill="#000" opacity="0.9" d="M313 651h1v5h-1z"/>
<path fill="#e0f086" d="M322 660h13v6h-13z"/>
<line x1="322.7" y1="664.5" x2="334.7" y2="664.5" stroke="#000" stroke-width="0.9" stroke-dasharray="2.1 1.1"/>
<line x1="322.7" y1="662.5" x2="334.7" y2="662.5" stroke="#000" stroke-width="0.9" stroke-dasharray="2.1 1.1"/>
<path fill="#e0f086" d="M340 660h12v6h-12z"/>
<line x1="340.7" y1="664.5" x2="351.7" y2="664.5" stroke="#000" stroke-width="0.9" stroke-dasharray="2.1 1.1"/>
<line x1="340.7" y1="662.5" x2="351.7" y2="662.5" stroke="#000" stroke-width="0.9" stroke-dasharray="2.1 1.1"/>
<path fill="#e0f086" d="M359 660h12v6h-12z"/>
<line x1="359.7" y1="664.5" x2="370.7" y2="664.5" stroke="#000" stroke-width="0.9" stroke-dasharray="2.1 1.1"/>
<line x1="359.7" y1="662.5" x2="370.7" y2="662.5" stroke="#000" stroke-width="0.9" stroke-dasharray="2.1 1.1"/>
<path fill="#e0f086" d="M377 660h11v6h-11z"/>
<line x1="377.7" y1="664.5" x2="387.7" y2="664.5" stroke="#000" stroke-width="0.9" stroke-dasharray="2.1 1.1"/>
<line x1="377.7" y1="662.5" x2="387.7" y2="662.5" stroke="#000" stroke-width="0.9" stroke-dasharray="2.1 1.1"/>
<path fill="#e0f086" d="M302 660h5v6h-5z"/>
<path fill="#000" opacity="0.9" d="M303 661h1v5h-1z"/>
<path fill="#e0f086" d="M312 660h4v6h-4z"/>
<path fill="#000" opacity="0.9" d="M313 661h1v5h-1z"/>
<path fill="#e0f086" d="M322 669h13v6h-13z"/>
<line x1="322.7" y1="673.5" x2="334.7" y2="673.5" stroke="#000" stroke-width="0.9" stroke-dasharray="2.1 1.1"/>
<line x1="322.7" y1="671.5" x2="334.7" y2="671.5" stroke="#000" stroke-width="0.9" stroke-dasharray="2.1 1.1"/>
<path fill="#e0f086" d="M340 669h12v6h-12z"/>
<line x1="340.7" y1="673.5" x2="351.7" y2="673.5" stroke="#000" stroke-width="0.9" stroke-dasharray="2.1 1.1"/>
<line x1="340.7" y1="671.5" x2="351.7" y2="671.5" stroke="#000" stroke-width="0.9" stroke-dasharray="2.1 1.1"/>
<path fill="#e0f086" d="M359 669h12v6h-12z"/>
<line x1="359.7" y1="673.5" x2="370.7" y2="673.5" stroke="#000" stroke-width="0.9" stroke-dasharray="2.1 1.1"/>
<line x1="359.7" y1="671.5" x2="370.7" y2="671.5" stroke="#000" stroke-width="0.9" stroke-dasharray="2.1 1.1"/>
<path fill="#e0f086" d="M377 669h11v6h-11z"/>
<line x1="377.7" y1="673.5" x2="387.7" y2="673.5" stroke="#000" stroke-width="0.9" stroke-dasharray="2.1 1.1"/>
<line x1="377.7" y1="671.5" x2="387.7" y2="671.5" stroke="#000" stroke-width="0.9" stroke-dasharray="2.1 1.1"/>
<path fill="#e0f086" d="M302 669h5v6h-5z"/>
<path fill="#000" opacity="0.9" d="M303 670h1v5h-1z"/>
<path fill="#e0f086" d="M312 669h4v6h-4z"/>
<path fill="#000" opacity="0.9" d="M313 670h1v5h-1z"/>
<path fill="#e0f086" d="M322 679h13v6h-13z"/>
<line x1="322.7" y1="683.5" x2="334.7" y2="683.5" stroke="#000" stroke-width="0.9" stroke-dasharray="2.1 1.1"/>
<line x1="322.7" y1="681.5" x2="334.7" y2="681.5" stroke="#000" stroke-width="0.9" stroke-dasharray="2.1 1.1"/>
<path fill="#e0f086" d="M340 679h12v6h-12z"/>
<line x1="340.7" y1="683.5" x2="351.7" y2="683.5" stroke="#000" stroke-width="0.9" stroke-dasharray="2.1 1.1"/>
<line x1="340.7" y1="681.5" x2="351.7" y2="681.5" stroke="#000" stroke-width="0.9" stroke-dasharray="2.1 1.1"/>
<path fill="#e0f086" d="M359 679h12v6h-12z"/>
<line x1="359.7" y1="683.5" x2="370.7" y2="683.5" stroke="#000" stroke-width="0.9" stroke-dasharray="2.1 1.1"/>
<line x1="359.7" y1="681.5" x2="370.7" y2="681.5" stroke="#000" stroke-width="0.9" stroke-dasharray="2.1 1.1"/>
<path fill="#e0f086" d="M377 679h11v6h-11z"/>
<line x1="377.7" y1="683.5" x2="387.7" y2="683.5" stroke="#000" stroke-width="0.9" stroke-dasharray="2.1 1.1"/>
<line x1="377.7" y1="681.5" x2="387.7" y2="681.5" stroke="#000" stroke-width="0.9" stroke-dasharray="2.1 1.1"/>
<path fill="#e0f086" d="M302 679h5v5h-5z"/>
<path fill="#000" opacity="0.9" d="M303 679h1v5h-1z"/>
<path fill="#e0f086" d="M312 679h4v5h-4z"/>
<path fill="#000" opacity="0.9" d="M313 679h1v5h-1z"/>
<path fill="#e0f086" d="M322 688h13v6h-13z"/>
<line x1="322.7" y1="692.5" x2="334.7" y2="692.5" stroke="#000" stroke-width="0.9" stroke-dasharray="2.1 1.1"/>
<line x1="322.7" y1="690.5" x2="334.7" y2="690.5" stroke="#000" stroke-width="0.9" stroke-dasharray="2.1 1.1"/>
<path fill="#e0f086" d="M340 688h12v6h-12z"/>
<line x1="340.7" y1="692.5" x2="351.7" y2="692.5" stroke="#000" stroke-width="0.9" stroke-dasharray="2.1 1.1"/>
<line x1="340.7" y1="690.5" x2="351.7" y2="690.5" stroke="#000" stroke-width="0.9" stroke-dasharray="2.1 1.1"/>
<path fill="#e0f086" d="M359 688h12v6h-12z"/>
<line x1="359.7" y1="692.5" x2="370.7" y2="692.5" stroke="#000" stroke-width="0.9" stroke-dasharray="2.1 1.1"/>
<line x1="359.7" y1="690.5" x2="370.7" y2="690.5" stroke="#000" stroke-width="0.9" stroke-dasharray="2.1 1.1"/>
<path fill="#e0f086" d="M377 688h11v6h-11z"/>
<line x1="377.7" y1="692.5" x2="387.7" y2="692.5" stroke="#000" stroke-width="0.9" stroke-dasharray="2.1 1.1"/>
<line x1="377.7" y1="690.5" x2="387.7" y2="690.5" stroke="#000" stroke-width="0.9" stroke-dasharray="2.1 1.1"/>
<path fill="#e0f086" d="M302 688h5v6h-5z"/>
<path fill="#000" opacity="0.9" d="M303 688h1v6h-1z"/>
<path fill="#e0f086" d="M312 688h4v6h-4z"/>
<path fill="#000" opacity="0.9" d="M313 688h1v6h-1z"/>
<path fill="#e0f086" d="M322 696h12v9h-12z"/>
<line x1="323.97" y1="696.5" x2="323.97" y2="704.5" stroke="#000" stroke-width="0.7"/>
<line x1="326.03" y1="696.5" x2="326.03" y2="704.5" stroke="#000" stroke-width="0.7"/>
<line x1="328.1" y1="696.5" x2="328.1" y2="704.5" stroke="#000" stroke-width="0.7"/>
<line x1="330.17" y1="696.5" x2="330.17" y2="704.5" stroke="#000" stroke-width="0.7"/>
<line x1="332.23" y1="696.5" x2="332.23" y2="704.5" stroke="#000" stroke-width="0.7"/>
<line x1="322.1" y1="700.55" x2="334.1" y2="700.55" stroke="#000" stroke-width="0.7"/>
<path fill="#e0f086" d="M340 696h12v9h-12z"/>
<line x1="342.42" y1="696.5" x2="342.42" y2="704.5" stroke="#000" stroke-width="0.7"/>
<line x1="344.33" y1="696.5" x2="344.33" y2="704.5" stroke="#000" stroke-width="0.7"/>
<line x1="346.25" y1="696.5" x2="346.25" y2="704.5" stroke="#000" stroke-width="0.7"/>
<line x1="348.17" y1="696.5" x2="348.17" y2="704.5" stroke="#000" stroke-width="0.7"/>
<line x1="350.08" y1="696.5" x2="350.08" y2="704.5" stroke="#000" stroke-width="0.7"/>
<line x1="340.7" y1="700.55" x2="351.8" y2="700.55" stroke="#000" stroke-width="0.7"/>
<path fill="#e0f086" d="M359 696h12v9h-12z"/>
<line x1="361.07" y1="696.5" x2="361.07" y2="704.5" stroke="#000" stroke-width="0.7"/>
<line x1="363.03" y1="696.5" x2="363.03" y2="704.5" stroke="#000" stroke-width="0.7"/>
<line x1="365" y1="696.5" x2="365" y2="704.5" stroke="#000" stroke-width="0.7"/>
<line x1="366.97" y1="696.5" x2="366.97" y2="704.5" stroke="#000" stroke-width="0.7"/>
<line x1="368.93" y1="696.5" x2="368.93" y2="704.5" stroke="#000" stroke-width="0.7"/>
<line x1="359.3" y1="700.55" x2="370.7" y2="700.55" stroke="#000" stroke-width="0.7"/>
<path fill="#e0f086" d="M378 696h10v9h-10z"/>
<line x1="379.66" y1="696.5" x2="379.66" y2="704.5" stroke="#000" stroke-width="0.7"/>
<line x1="381.72" y1="696.5" x2="381.72" y2="704.5" stroke="#000" stroke-width="0.7"/>
<line x1="383.78" y1="696.5" x2="383.78" y2="704.5" stroke="#000" stroke-width="0.7"/>
<line x1="385.84" y1="696.5" x2="385.84" y2="704.5" stroke="#000" stroke-width="0.7"/>
<line x1="377.8" y1="700.55" x2="387.7" y2="700.55" stroke="#000" stroke-width="0.7"/>
<path fill="#e0f086" d="M302 698h5v9h-5z"/>
<path fill="#000" opacity="0.9" d="M303 698h1v9h-1z"/>
<path fill="#e0f086" d="M312 698h4v9h-4z"/>
<path fill="#000" opacity="0.9" d="M313 698h1v9h-1z"/>
<path fill="#fff" d="M300 638h88v1h-88zM300 647h88v1h-88zM300 657h88v1h-88zM300 666h88v1h-88zM300 675h88v1h-88zM300 685h88v1h-88zM300 694h88v1h-88zM300 631h1v78h-1zM308 631h1v78h-1zM310 631h1v78h-1zM316 631h1v78h-1zM321 631h1v78h-1zM335 631h1v78h-1zM339 631h1v78h-1zM352 631h1v78h-1zM358 631h1v78h-1zM372 631h1v78h-1zM376 631h1v78h-1zM388 631h1v78h-1z"/>
<path fill="#f0e878" d="M389 625h4v1h-4zM389 627h4v1h-4zM389 628h4v1h-4zM389 630h4v1h-4zM389 631h4v1h-4zM389 633h4v1h-4zM389 634h4v1h-4zM389 636h4v1h-4zM389 637h4v1h-4zM389 639h4v1h-4zM389 640h4v1h-4zM389 642h4v1h-4zM389 643h4v1h-4zM389 645h4v1h-4zM389 646h4v1h-4zM389 648h4v1h-4zM389 649h4v1h-4zM389 651h4v1h-4zM389 652h4v1h-4zM389 654h4v1h-4zM389 655h4v1h-4zM389 657h4v1h-4zM389 658h4v1h-4zM389 660h4v1h-4zM389 661h4v1h-4zM389 663h4v1h-4zM389 664h4v1h-4zM389 666h4v1h-4zM389 667h4v1h-4zM389 669h4v1h-4zM389 670h4v1h-4zM389 672h4v1h-4zM389 673h4v1h-4zM389 675h4v1h-4zM389 676h4v1h-4zM389 678h4v1h-4zM389 679h4v1h-4zM389 681h4v1h-4zM389 682h4v1h-4zM389 684h4v1h-4zM389 685h4v1h-4zM389 687h4v1h-4zM389 688h4v1h-4zM389 690h4v1h-4zM389 691h4v1h-4zM389 693h4v1h-4zM389 694h4v1h-4zM389 696h4v1h-4zM389 697h4v1h-4zM389 699h4v1h-4zM389 700h4v1h-4zM389 702h4v1h-4zM389 703h4v1h-4zM389 705h4v1h-4zM389 706h4v1h-4z"/>
<path fill="#fff" opacity="0.9" d="M388 624h1v84h-1zM393 624h1v84h-1z"/>
<path fill="#fff" d="M390 692h3v8h-3zM431 624h1v85h-1z"/>
<path fill="#fff" opacity="0.9" d="M410 632h1v76h-1zM414 632h1v76h-1z"/>
<path fill="#e0f086" d="M411 632h3v4h-3z"/>
<path fill="#000" opacity="0.6" d="M412 632h1v4h-1z"/>
<path fill="#e0f086" d="M411 637h3v4h-3z"/>
<path fill="#000" opacity="0.6" d="M412 637h1v4h-1z"/>
<path fill="#e0f086" d="M411 642h3v4h-3z"/>
<path fill="#000" opacity="0.6" d="M412 642h1v4h-1z"/>
<path fill="#e0f086" d="M411 647h3v4h-3z"/>
<path fill="#000" opacity="0.6" d="M412 647h1v4h-1z"/>
<path fill="#e0f086" d="M411 652h3v4h-3z"/>
<path fill="#000" opacity="0.6" d="M412 652h1v4h-1z"/>
<path fill="#e0f086" d="M411 657h3v4h-3z"/>
<path fill="#000" opacity="0.6" d="M412 657h1v4h-1z"/>
<path fill="#e0f086" d="M411 662h3v4h-3z"/>
<path fill="#000" opacity="0.6" d="M412 662h1v4h-1z"/>
<path fill="#e0f086" d="M411 667h3v4h-3z"/>
<path fill="#000" opacity="0.6" d="M412 667h1v4h-1z"/>
<path fill="#e0f086" d="M411 672h3v4h-3z"/>
<path fill="#000" opacity="0.6" d="M412 672h1v4h-1z"/>
<path fill="#e0f086" d="M411 677h3v4h-3z"/>
<path fill="#000" opacity="0.6" d="M412 677h1v4h-1z"/>
<path fill="#e0f086" d="M411 682h3v4h-3z"/>
<path fill="#000" opacity="0.6" d="M412 682h1v4h-1z"/>
<path fill="#e0f086" d="M411 687h3v4h-3z"/>
<path fill="#000" opacity="0.6" d="M412 687h1v4h-1z"/>
<path fill="#e0f086" d="M411 692h3v4h-3z"/>
<path fill="#000" opacity="0.6" d="M412 692h1v4h-1z"/>
<path fill="#e0f086" d="M411 697h3v4h-3z"/>
<path fill="#000" opacity="0.6" d="M412 697h1v4h-1z"/>
<path fill="#e0f086" d="M411 702h3v4h-3z"/>
<path fill="#000" opacity="0.6" d="M412 702h1v4h-1z"/>
<path fill="#f00" d="M417 635h1v1h-1zM420 638h1v1h-1zM422 641h1v1h-1zM425 644h1v1h-1zM427 647h1v1h-1zM430 650h1v1h-1zM396 668h1v1h-1zM398 670h1v1h-1zM400 673h1v1h-1zM403 675h1v1h-1zM405 678h1v1h-1zM407 680h1v1h-1zM417 678h1v1h-1zM419 680h1v1h-1zM422 683h1v1h-1zM424 685h1v1h-1zM426 687h1v1h-1zM429 690h1v1h-1zM431 692h1v1h-1z"/>
<line x1="426" y1="654" x2="429.5" y2="648.5" stroke="#fff" stroke-width="0.9"/>
<path fill="#fff" d="M430 647h10v2h-10zM300 708h145v2h-145zM285 706h8v1h-8zM287 708h7v1h-7zM286 711h6v1h-6zM292 705h1v7h-1z"/>
<path fill="#ff0000" d="M293 707h7v1h-7z"/>
<path fill="#fff" d="M294 690h1v10h-1zM294 690h4v1h-4zM294 699h6v1h-6z"/>
<path fill="#ff0000" d="M432 706h7v2h-7z"/>
<line x1="433" y1="706.5" x2="435.5" y2="704.2" stroke="#fff" stroke-width="0.8"/>
<path fill="#fff" d="M435 704h7v1h-7z"/>
<path fill="#ff0000" d="M300 709h1v11h-1zM431 709h1v11h-1z"/>
<path fill="#fff" d="M300 717h131v1h-131z"/>
<path fill="#fff" opacity="0.9" d="M300 710h1v7h-1zM431 710h1v7h-1z"/>
<path fill="#fff" d="M363 716h4v1h-4z"/>
<circle cx="300.3" cy="723.1" r="2.35" fill="none" stroke="#fff" stroke-width="1.15"/>
<text x="300.3" y="724.05" font-size="2.7" fill="#fff" text-anchor="middle" font-weight="normal" font-family='"Liberation Sans","Noto Sans CJK SC",sans-serif'>1</text>
<circle cx="431.2" cy="723.1" r="2.35" fill="none" stroke="#fff" stroke-width="1.15"/>
<text x="431.2" y="724.05" font-size="2.7" fill="#fff" text-anchor="middle" font-weight="normal" font-family='"Liberation Sans","Noto Sans CJK SC",sans-serif'>9</text>
<text x="366" y="728.4" font-size="2.6" fill="#fff" text-anchor="middle" font-weight="bold" font-family='"Liberation Sans","Noto Sans CJK SC",sans-serif'>南侧立面图</text>
<path fill="#fff" d="M360 727h13v1h-13z"/>
<path fill="#fff" opacity="0.9" d="M306 622h1v7h-1z"/>
<path fill="#fff" d="M306 621h7v2h-7z"/>
<path fill="#fff" opacity="0.9" d="M337 621h1v13h-1z"/>
<path fill="#fff" d="M338 620h6v2h-6z"/>
<path fill="#fff" opacity="0.9" d="M390 614h1v10h-1z"/>
<path fill="#fff" d="M390 612h8v2h-8zM390 617h8v1h-8z"/>
<path fill="#fff" opacity="0.9" d="M406 617h1v5h-1z"/>
<path fill="#fff" d="M406 616h6v2h-6z"/>
<text x="384" y="624.8" font-size="3.6" fill="#fff" text-anchor="middle" font-weight="bold" font-family='"Liberation Sans","Noto Sans CJK SC",sans-serif'>F</text>
<text x="295.3" y="630.9" font-size="3" fill="#fff" text-anchor="middle" font-weight="bold" font-family='"Liberation Sans","Noto Sans CJK SC",sans-serif'>E</text>
<text x="436" y="633.6" font-size="3" fill="#fff" text-anchor="middle" font-weight="bold" font-family='"Liberation Sans","Noto Sans CJK SC",sans-serif'>E</text>
<path fill="#ff0000" d="M280 624h7v1h-7z"/>
<path fill="#fff" d="M276 621h7v2h-7z"/>
<line x1="282.5" y1="622.2" x2="284.5" y2="624.4" stroke="#fff" stroke-width="0.8"/>
<path fill="#ff0000" d="M280 631h7v1h-7z"/>
<path fill="#fff" d="M276 628h7v2h-7z"/>
<line x1="282.5" y1="629.4" x2="284.5" y2="631.6" stroke="#fff" stroke-width="0.8"/>
<path fill="#f00" d="M308 696h1v1h-1zM307 697h1v1h-1zM340 657h1v1h-1zM349 702h1v1h-1zM324 642h1v1h-1zM347 650h1v1h-1zM311 644h1v1h-1zM305 647h1v1h-1zM328 655h1v1h-1zM367 654h1v1h-1zM345 645h1v1h-1zM331 633h1v1h-1zM323 633h1v1h-1zM365 673h1v1h-1zM317 668h1v1h-1zM382 640h1v1h-1zM372 664h1v1h-1zM344 695h1v1h-1zM335 670h1v1h-1zM361 706h1v1h-1zM331 694h1v1h-1zM362 680h1v1h-1zM336 658h1v1h-1zM306 642h1v1h-1zM307 688h1v1h-1zM323 644h1v1h-1z"/>
<path fill="#ff0000" d="M200 508h38v1h-38zM188 518h50v1h-50zM200 564h38v1h-38zM200 508h1v69h-1zM222 508h1v69h-1zM238 508h1v69h-1z"/>
<path fill="#fff" d="M186 506h53v2h-53z"/>
<path fill="#ff0000" d="M186 508h14v1h-14z"/>
<path fill="#fff" d="M186 564h14v1h-14zM188 507h1v58h-1zM192 507h1v58h-1zM199 508h1v26h-1z"/>
<path d="M199.6 534 A30 30 0 0 0 229.6 563.6" fill="none" stroke="#fff" stroke-width="1.1"/>
<path fill="#fff" d="M214 514h4v1h-4zM216 513h1v1h-1zM214 522h5v1h-5zM217 521h1v1h-1zM215 530h5v1h-5zM218 529h1v1h-1zM216 537h5v1h-5zM219 536h1v1h-1zM217 544h5v1h-5zM220 544h1v1h-1zM218 552h5v1h-5zM221 552h1v1h-1z"/>
<rect x="223.6" y="514.4" width="2.4" height="2.2" fill="none" stroke="#fff" stroke-width="0.9"/>
<path fill="#fff" d="M226 519h9v1h-9z"/>
<path d="M238.4 508 A5.2 5.2 0 0 1 238.4 518.4" fill="none" stroke="#fff" stroke-width="0.9"/>
<line x1="234.5" y1="504.5" x2="238.5" y2="507.5" stroke="#fff" stroke-width="0.9"/>
<line x1="238.5" y1="507.5" x2="241.5" y2="499.5" stroke="#fff" stroke-width="0.9"/>
<path fill="#fff" d="M242 500h7v2h-7z"/>
<circle cx="242.4" cy="497.4" r="1.1" fill="none" stroke="#fff" stroke-width="0.8"/>
<line x1="238.4" y1="534.5" x2="241.8" y2="528.5" stroke="#fff" stroke-width="0.9"/>
<path fill="#fff" d="M242 529h7v2h-7z"/>
<circle cx="242.6" cy="526.4" r="1.1" fill="none" stroke="#fff" stroke-width="0.8"/>
<line x1="203" y1="507" x2="205.5" y2="501" stroke="#fff" stroke-width="0.9"/>
<path fill="#fff" d="M206 500h8v2h-8zM199 571h42v1h-42zM200 570h1v3h-1zM222 570h1v3h-1zM238 570h1v3h-1zM210 570h3v1h-3zM229 570h3v1h-3zM199 576h40v1h-40zM200 575h1v3h-1zM238 575h1v3h-1zM218 575h3v1h-3z"/>
<text x="219" y="575.6" font-size="2.6" fill="#fff" text-anchor="middle" font-weight="bold" font-family='"Liberation Sans","Noto Sans CJK SC",sans-serif'>M</text>
<circle cx="183.6" cy="508.2" r="2.35" fill="none" stroke="#fff" stroke-width="1.15"/>
<text x="183.6" y="509.15" font-size="2.7" fill="#fff" text-anchor="middle" font-weight="normal" font-family='"Liberation Sans","Noto Sans CJK SC",sans-serif'>D</text>
<circle cx="183.6" cy="518" r="2.35" fill="none" stroke="#fff" stroke-width="1.15"/>
<text x="183.6" y="518.95" font-size="2.7" fill="#fff" text-anchor="middle" font-weight="normal" font-family='"Liberation Sans","Noto Sans CJK SC",sans-serif'>C</text>
<circle cx="183.6" cy="564.4" r="2.35" fill="none" stroke="#fff" stroke-width="1.15"/>
<text x="183.6" y="565.35" font-size="2.7" fill="#fff" text-anchor="middle" font-weight="normal" font-family='"Liberation Sans","Noto Sans CJK SC",sans-serif'>A</text>
<circle cx="200.4" cy="581" r="2.35" fill="none" stroke="#fff" stroke-width="1.15"/>
<text x="200.4" y="581.95" font-size="2.7" fill="#fff" text-anchor="middle" font-weight="normal" font-family='"Liberation Sans","Noto Sans CJK SC",sans-serif'>1</text>
<circle cx="222.3" cy="581" r="2.35" fill="none" stroke="#fff" stroke-width="1.15"/>
<text x="222.3" y="581.95" font-size="2.7" fill="#fff" text-anchor="middle" font-weight="normal" font-family='"Liberation Sans","Noto Sans CJK SC",sans-serif'>2</text>
<circle cx="237.5" cy="581" r="2.35" fill="none" stroke="#fff" stroke-width="1.15"/>
<text x="237.5" y="581.95" font-size="2.7" fill="#fff" text-anchor="middle" font-weight="normal" font-family='"Liberation Sans","Noto Sans CJK SC",sans-serif'>3</text>
<text x="219.8" y="591.5" font-size="2.7" fill="#fff" text-anchor="middle" font-weight="bold" font-family='"Liberation Sans","Noto Sans CJK SC",sans-serif'>梯间屋顶</text>
<path fill="#fff" d="M214 590h11v1h-11zM100 580h54v1h-54zM104 578h1v3h-1zM141 578h1v3h-1zM121 578h4v1h-4zM104 582h44v1h-44zM112 579h1v3h-1zM122 579h1v3h-1zM132 579h1v3h-1zM92 584h1v116h-1zM96 584h1v116h-1zM91 588h7v1h-7zM91 616h7v1h-7zM91 644h7v1h-7zM91 662h7v1h-7zM91 670h7v1h-7zM91 677h7v1h-7zM91 684h7v1h-7zM91 699h7v1h-7zM96 615h7v1h-7zM146 584h1v69h-1zM151 584h1v69h-1zM145 588h8v1h-8zM145 600h8v1h-8zM145 616h8v1h-8zM145 630h8v1h-8zM145 644h8v1h-8zM145 650h8v1h-8z"/>
<path fill="#000" d="M147 646h3v6h-3z"/>
<rect x="147.2" y="645.5" width="3.4" height="7" fill="none" stroke="#fff" stroke-width="0.9"/>
<path fill="#fff" d="M142 656h95v1h-95zM141 655h1v3h-1zM164 655h1v3h-1zM187 655h1v3h-1zM212 655h1v3h-1zM236 655h1v3h-1zM151 655h3v1h-3zM174 655h4v1h-4zM198 655h4v1h-4zM222 655h4v1h-4zM142 659h95v1h-95zM141 658h1v3h-1zM150 658h1v3h-1zM160 658h1v3h-1zM170 658h1v3h-1zM180 658h1v3h-1zM187 658h1v3h-1zM196 658h1v3h-1zM204 658h1v3h-1zM214 658h1v3h-1zM224 658h1v3h-1zM236 658h1v3h-1zM144 658h3v1h-3zM153 658h4v1h-4zM163 658h4v1h-4zM173 658h4v1h-4zM182 658h4v1h-4zM190 658h4v1h-4zM199 658h3v1h-3zM208 658h3v1h-3zM217 658h4v1h-4zM228 658h4v1h-4zM186 654h10v2h-10zM241 657h1v48h-1zM240 662h3v1h-3zM240 699h3v1h-3z"/>
<line x1="239.5" y1="703" x2="242.5" y2="706" stroke="#fff" stroke-width="0.9"/>
<path fill="#fff" d="M102 706h136v1h-136zM104 705h1v3h-1zM119 705h1v3h-1zM132 705h1v3h-1zM138 705h1v3h-1zM164 705h1v3h-1zM187 705h1v3h-1zM212 705h1v3h-1zM235 705h1v3h-1zM110 705h3v1h-3zM124 705h4v1h-4zM134 705h3v1h-3zM150 705h3v1h-3zM174 705h4v1h-4zM198 705h4v1h-4zM222 705h3v1h-3zM102 711h136v1h-136zM104 710h1v3h-1zM138 710h1v3h-1zM235 710h1v3h-1zM120 710h3v1h-3zM185 710h4v1h-4zM166 710h6v1h-6z"/>
<path fill="#ff0000" d="M104 573h1v71h-1zM141 573h1v16h-1zM89 588h14v1h-14zM89 644h53v1h-53zM89 653h53v1h-53zM89 662h53v1h-53z"/>
<line x1="89" y1="671" x2="92" y2="673.6" stroke="#ff0000" stroke-width="1"/>
<path fill="#ff0000" d="M92 673h49v1h-49zM89 677h53v1h-53zM89 684h53v1h-53zM89 699h53v1h-53zM104 684h1v30h-1zM119 645h1v69h-1zM125 662h1v52h-1zM130 678h1v34h-1z"/>
<line x1="130.6" y1="712" x2="132.4" y2="714.5" stroke="#ff0000" stroke-width="1"/>
<line x1="141" y1="712.8" x2="139.4" y2="714.6" stroke="#ff0000" stroke-width="1"/>
<path fill="#ff0000" d="M236 662h14v1h-14zM236 699h14v1h-14zM235 700h1v15h-1z"/>
<rect x="103" y="587.5" width="39.8" height="57" fill="none" stroke="#fff" stroke-width="1.1"/>
<path fill="#fff" d="M103 588h40v1h-40zM122 588h1v56h-1zM140 589h1v55h-1z"/>
<line x1="105" y1="588.8" x2="140" y2="588.8" stroke="#000" stroke-width="0.8" stroke-dasharray="6 2"/>
<path fill="#fff" d="M109 593h4v1h-4zM111 592h1v1h-1zM132 593h4v1h-4zM134 592h1v1h-1zM109 600h4v1h-4zM111 600h1v1h-1zM132 600h4v1h-4zM134 600h1v1h-1zM109 608h4v1h-4zM111 607h1v1h-1zM132 608h4v1h-4zM134 607h1v1h-1zM109 616h4v1h-4zM111 615h1v1h-1zM132 616h4v1h-4zM134 615h1v1h-1zM109 622h4v1h-4zM111 622h1v1h-1zM132 622h4v1h-4zM134 622h1v1h-1zM109 630h4v1h-4zM111 629h1v1h-1zM132 630h4v1h-4zM134 629h1v1h-1zM109 638h4v1h-4zM111 637h1v1h-1zM132 638h4v1h-4zM134 637h1v1h-1z"/>
<rect x="114.6" y="612.6" width="4.6" height="2.4" fill="none" stroke="#fff" stroke-width="0.9"/>
<path fill="#fff" d="M115 613h4v2h-4zM106 609h8v1h-8z"/>
<circle cx="107.2" cy="606.4" r="1" fill="none" stroke="#fff" stroke-width="0.8"/>
<rect x="141.5" y="662.5" width="94.7" height="38.6" fill="none" stroke="#fff" stroke-width="1.2"/>
<path fill="#fff" d="M142 662h94v2h-94zM142 699h94v2h-94z"/>
<line x1="143" y1="663.6" x2="235" y2="663.6" stroke="#000" stroke-width="0.8" stroke-dasharray="7 2"/>
<path fill="#fff" d="M142 681h94v1h-94zM187 657h1v44h-1z"/>
<line x1="142.5" y1="664" x2="187.9" y2="680.6" stroke="#fff" stroke-width="0.9"/>
<line x1="142.5" y1="680.6" x2="187.9" y2="664" stroke="#fff" stroke-width="0.9"/>
<path fill="#fff" d="M162 675h5v3h-5zM147 670h2v4h-2zM146 672h1v1h-1zM164 667h1v4h-1zM181 670h2v4h-2zM180 672h1v1h-1zM193 670h2v4h-2zM193 672h1v1h-1zM207 670h2v4h-2zM206 672h1v1h-1zM219 670h2v4h-2zM218 672h1v1h-1zM230 670h2v4h-2zM229 672h1v1h-1zM147 688h2v6h-2zM146 690h1v1h-1zM159 688h2v6h-2zM159 690h1v1h-1zM171 688h2v6h-2zM171 690h1v1h-1zM182 688h2v6h-2zM181 690h1v1h-1zM193 688h2v6h-2zM193 690h1v1h-1zM206 688h2v6h-2zM206 690h1v1h-1zM219 688h2v6h-2zM218 690h1v1h-1zM230 688h2v6h-2zM229 690h1v1h-1zM167 654h6v1h-6z"/>
<circle cx="167.6" cy="652.2" r="1" fill="none" stroke="#fff" stroke-width="0.8"/>
<line x1="165.6" y1="656" x2="163.6" y2="659" stroke="#fff" stroke-width="0.8"/>
<path fill="#fff" d="M167 703h6v1h-6z"/>
<circle cx="167.6" cy="700.6" r="0.9" fill="none" stroke="#fff" stroke-width="0.7"/>
<path fill="#fff" d="M215 654h6v1h-6z"/>
<circle cx="215.6" cy="652.2" r="1" fill="none" stroke="#fff" stroke-width="0.8"/>
<line x1="213.6" y1="656" x2="211.6" y2="659" stroke="#fff" stroke-width="0.8"/>
<path fill="#fff" d="M215 703h6v1h-6z"/>
<circle cx="215.6" cy="700.6" r="0.9" fill="none" stroke="#fff" stroke-width="0.7"/>
<path fill="#00ff00" d="M104 644h38v2h-38zM103 644h2v18h-2zM141 644h1v56h-1zM126 662h16v2h-16zM125 653h2v10h-2z"/>
<path fill="#ffff00" d="M132 646h9v7h-9z"/>
<path fill="#e8d860" d="M134 649h6v1h-6z"/>
<path d="M141.8 644.6 A4.6 4.6 0 0 1 141.8 653.6" fill="none" stroke="#f4e060" stroke-width="1.1"/>
<rect x="126.4" y="653.9" width="15" height="8.4" fill="none" stroke="#00ffff" stroke-width="1"/>
<path fill="#fff" d="M130 657h5v2h-5z"/>
<path fill="#0000ff" d="M124 646h2v3h-2z"/>
<path fill="#fff" d="M125 646h1v1h-1z"/>
<path fill="#0000ff" d="M124 649h2v3h-2z"/>
<path fill="#fff" d="M126 649h1v1h-1zM126 648h2v2h-2z"/>
<path fill="#0000ff" d="M136 660h2v2h-2z"/>
<path fill="#fff" d="M137 659h1v1h-1z"/>
<path fill="#ff0000" d="M139 661h1v1h-1z"/>
<path d="M103.8 662.5 A37.7 37.7 0 0 0 141.5 700.2" fill="none" stroke="#f4e060" stroke-width="1.1"/>
<path d="M104.8 662.5 A36.7 36.7 0 0 0 141.5 699.2" fill="none" stroke="#fff" stroke-width="0.8"/>
<path fill="#00ffff" d="M119 661h1v2h-1zM119 673h1v1h-1zM130 683h1v2h-1zM140 673h2v1h-2zM140 683h2v2h-2zM106 673h1v1h-1zM111 683h1v2h-1zM119 692h1v1h-1zM130 697h1v1h-1z"/>
<circle cx="104.4" cy="570.8" r="2.35" fill="none" stroke="#fff" stroke-width="1.15"/>
<text x="104.4" y="571.75" font-size="2.7" fill="#fff" text-anchor="middle" font-weight="normal" font-family='"Liberation Sans","Noto Sans CJK SC",sans-serif'>1</text>
<circle cx="141.5" cy="570.8" r="2.35" fill="none" stroke="#fff" stroke-width="1.15"/>
<text x="141.5" y="571.75" font-size="2.7" fill="#fff" text-anchor="middle" font-weight="normal" font-family='"Liberation Sans","Noto Sans CJK SC",sans-serif'>5</text>
<circle cx="86.2" cy="588.8" r="2.35" fill="none" stroke="#fff" stroke-width="1.15"/>
<text x="86.2" y="589.75" font-size="2.7" fill="#fff" text-anchor="middle" font-weight="normal" font-family='"Liberation Sans","Noto Sans CJK SC",sans-serif'>M</text>
<circle cx="86.2" cy="644.5" r="2.35" fill="none" stroke="#fff" stroke-width="1.15"/>
<text x="86.2" y="645.45" font-size="2.7" fill="#fff" text-anchor="middle" font-weight="normal" font-family='"Liberation Sans","Noto Sans CJK SC",sans-serif'>G</text>
<circle cx="86.2" cy="662.5" r="2.35" fill="none" stroke="#fff" stroke-width="1.15"/>
<text x="86.2" y="663.45" font-size="2.7" fill="#fff" text-anchor="middle" font-weight="normal" font-family='"Liberation Sans","Noto Sans CJK SC",sans-serif'>E</text>
<circle cx="86.2" cy="671" r="2.35" fill="none" stroke="#fff" stroke-width="1.15"/>
<text x="86.2" y="671.95" font-size="2.7" fill="#fff" text-anchor="middle" font-weight="normal" font-family='"Liberation Sans","Noto Sans CJK SC",sans-serif'>D</text>
<circle cx="86.2" cy="677.9" r="2.35" fill="none" stroke="#fff" stroke-width="1.15"/>
<text x="86.2" y="678.85" font-size="2.7" fill="#fff" text-anchor="middle" font-weight="normal" font-family='"Liberation Sans","Noto Sans CJK SC",sans-serif'>C</text>
<circle cx="86.2" cy="684" r="2.35" fill="none" stroke="#fff" stroke-width="1.15"/>
<text x="86.2" y="684.95" font-size="2.7" fill="#fff" text-anchor="middle" font-weight="normal" font-family='"Liberation Sans","Noto Sans CJK SC",sans-serif'>B</text>
<circle cx="86.2" cy="699.6" r="2.35" fill="none" stroke="#fff" stroke-width="1.15"/>
<text x="86.2" y="700.55" font-size="2.7" fill="#fff" text-anchor="middle" font-weight="normal" font-family='"Liberation Sans","Noto Sans CJK SC",sans-serif'>A</text>
<circle cx="252.9" cy="662.5" r="2.35" fill="none" stroke="#fff" stroke-width="1.15"/>
<text x="252.9" y="663.45" font-size="2.7" fill="#fff" text-anchor="middle" font-weight="normal" font-family='"Liberation Sans","Noto Sans CJK SC",sans-serif'>E</text>
<circle cx="252.9" cy="699.6" r="2.35" fill="none" stroke="#fff" stroke-width="1.15"/>
<text x="252.9" y="700.55" font-size="2.7" fill="#fff" text-anchor="middle" font-weight="normal" font-family='"Liberation Sans","Noto Sans CJK SC",sans-serif'>A</text>
<circle cx="104" cy="717.9" r="2.35" fill="none" stroke="#fff" stroke-width="1.15"/>
<text x="104" y="718.85" font-size="2.7" fill="#fff" text-anchor="middle" font-weight="normal" font-family='"Liberation Sans","Noto Sans CJK SC",sans-serif'>1</text>
<circle cx="119.2" cy="717.9" r="2.35" fill="none" stroke="#fff" stroke-width="1.15"/>
<text x="119.2" y="718.85" font-size="2.7" fill="#fff" text-anchor="middle" font-weight="normal" font-family='"Liberation Sans","Noto Sans CJK SC",sans-serif'>3</text>
<circle cx="132.7" cy="717.9" r="2.35" fill="none" stroke="#fff" stroke-width="1.15"/>
<text x="132.7" y="718.85" font-size="2.7" fill="#fff" text-anchor="middle" font-weight="normal" font-family='"Liberation Sans","Noto Sans CJK SC",sans-serif'>4</text>
<circle cx="139" cy="717.9" r="2.35" fill="none" stroke="#fff" stroke-width="1.15"/>
<text x="139" y="718.85" font-size="2.7" fill="#fff" text-anchor="middle" font-weight="normal" font-family='"Liberation Sans","Noto Sans CJK SC",sans-serif'>5</text>
<circle cx="235.1" cy="717.9" r="2.35" fill="none" stroke="#fff" stroke-width="1.15"/>
<text x="235.1" y="718.85" font-size="2.7" fill="#fff" text-anchor="middle" font-weight="normal" font-family='"Liberation Sans","Noto Sans CJK SC",sans-serif'>Z</text>
<text x="162.3" y="734.4" font-size="2.7" fill="#fff" text-anchor="middle" font-weight="bold" font-family='"Liberation Sans","Noto Sans CJK SC",sans-serif'>屋顶平面</text>
<path fill="#fff" d="M157 733h10v1h-10z"/>
</svg>
</body></html>
